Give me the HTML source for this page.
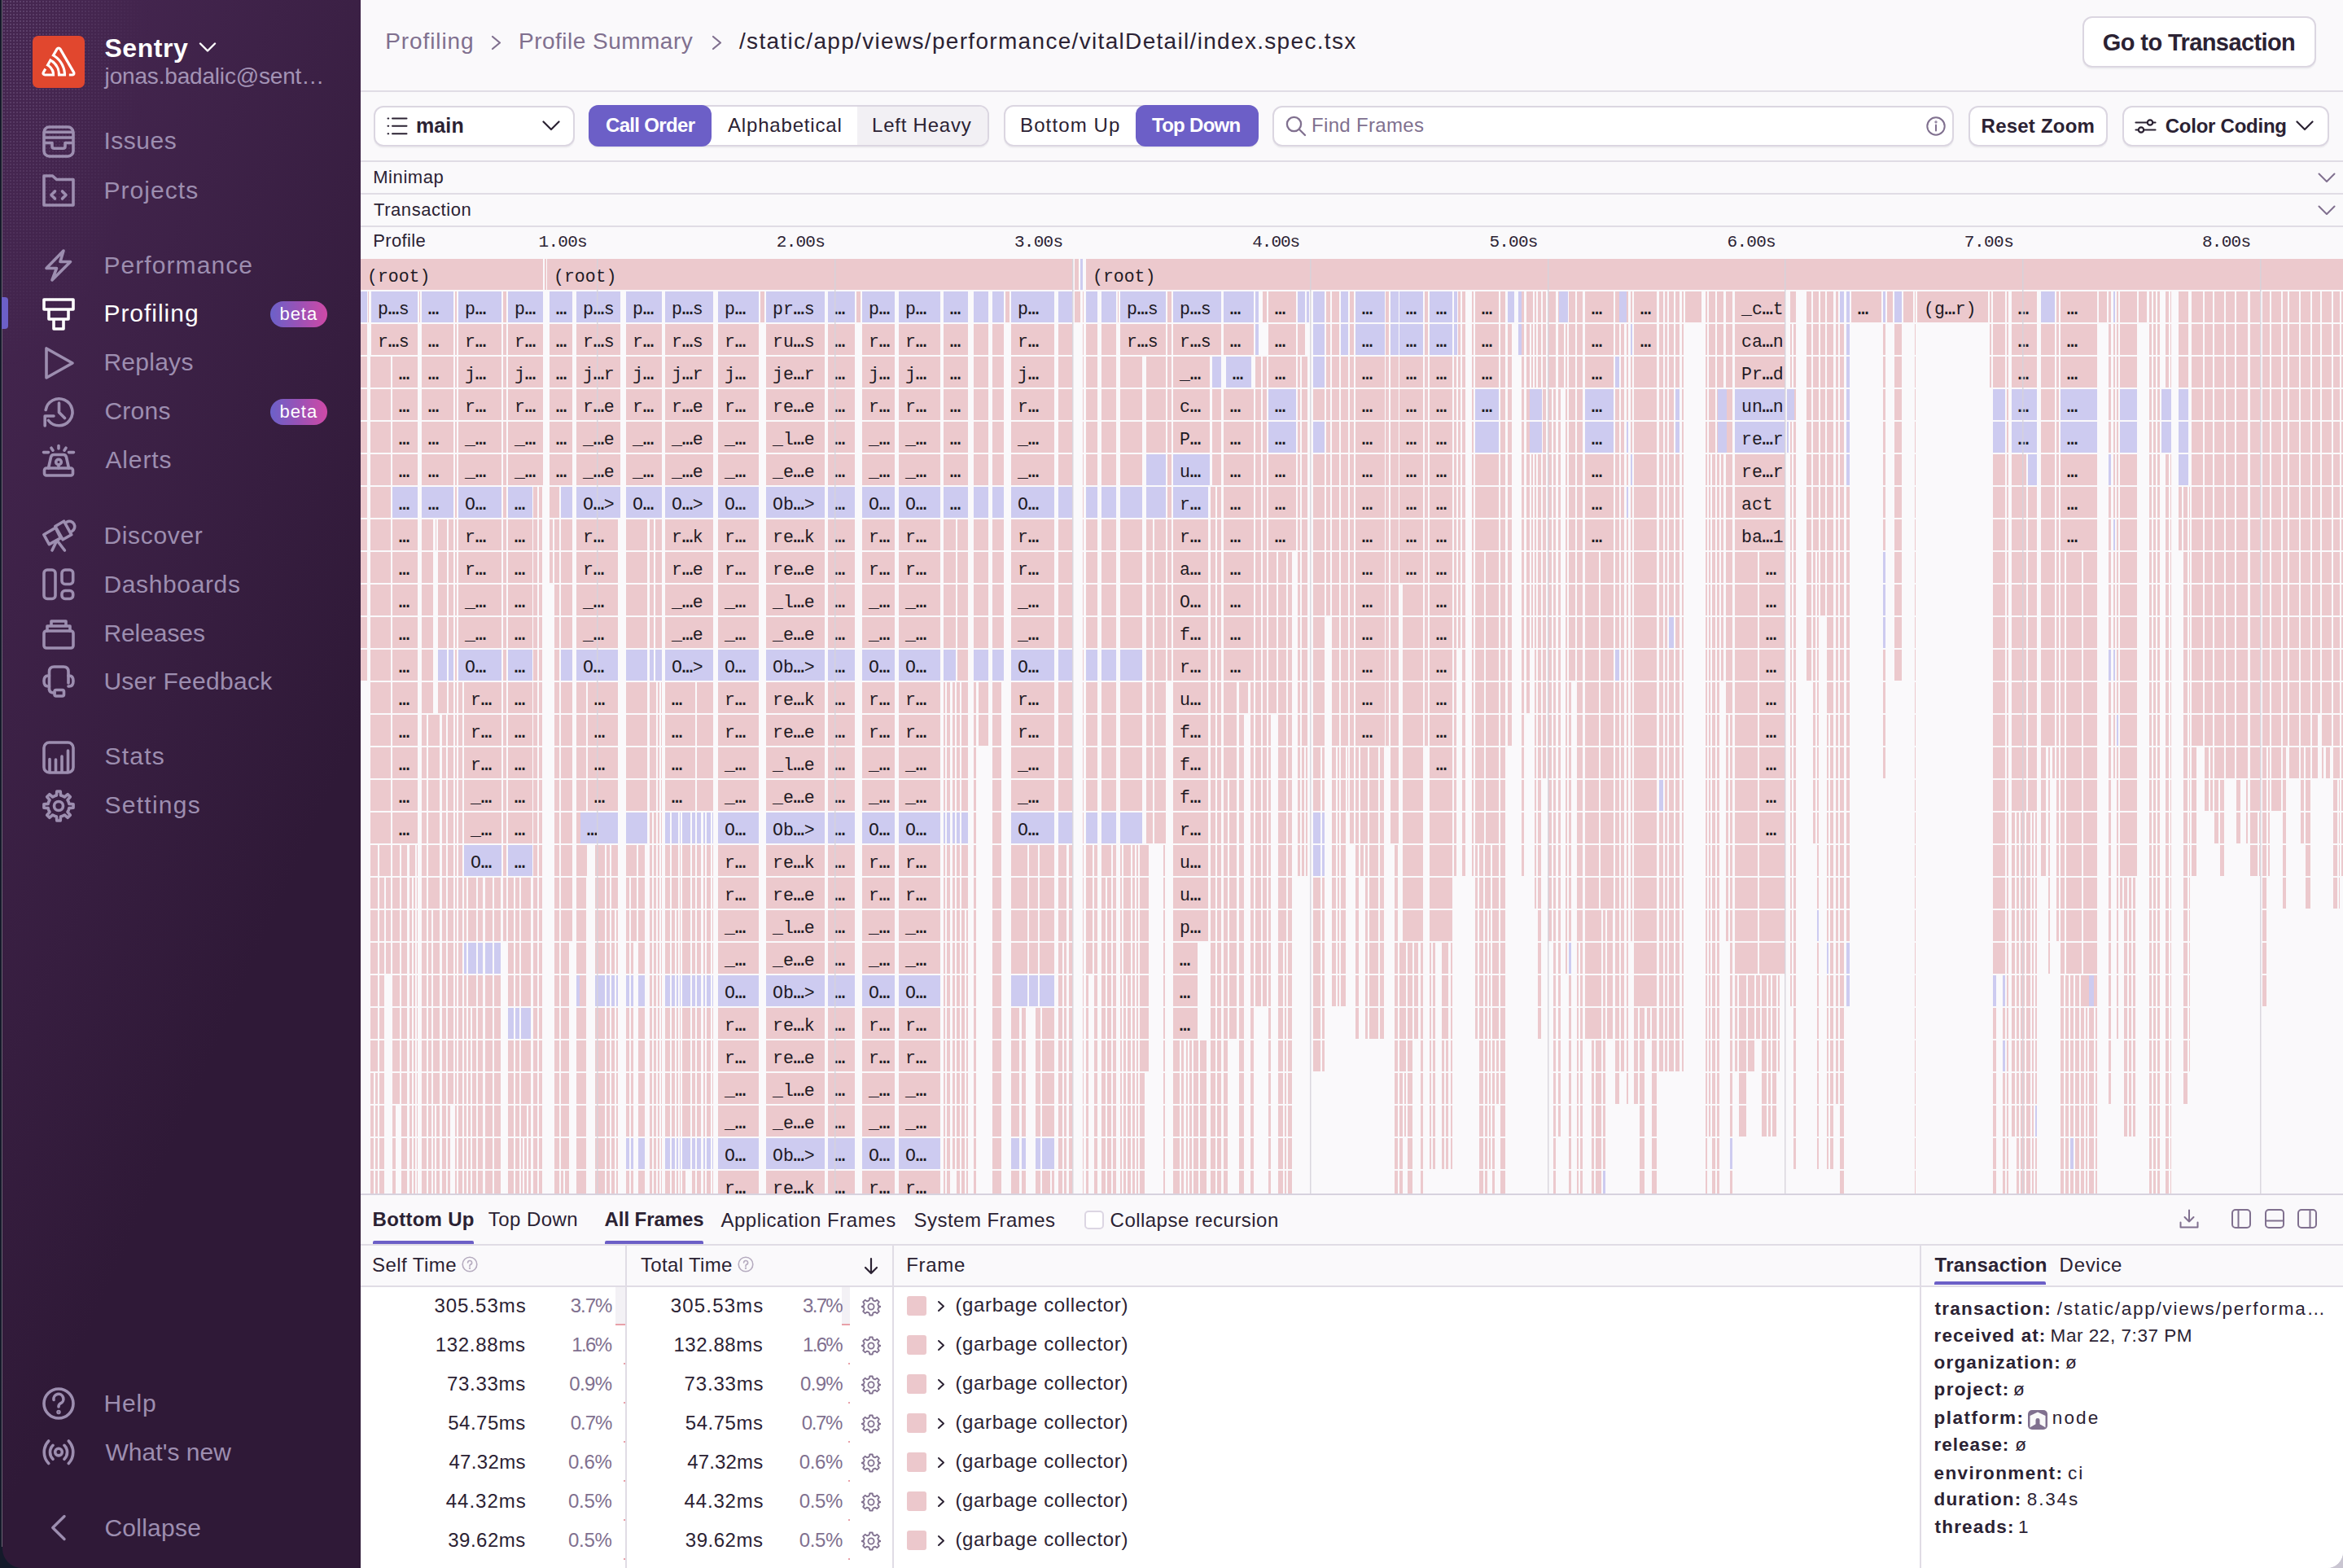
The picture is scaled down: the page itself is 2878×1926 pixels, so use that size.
<!DOCTYPE html><html><head><meta charset="utf-8"><style>
html,body{margin:0;padding:0}
body{width:2878px;height:1926px;overflow:hidden;position:relative;background:#141a2b;font-family:'Liberation Sans', sans-serif}
#sb{position:absolute;left:3px;top:0;width:440px;height:1926px;background:linear-gradient(294.17deg,#2f1937 35.57%,#452650 92.42%);border-bottom-left-radius:24px}
#edge1{position:absolute;left:0;top:0;width:2px;height:1926px;background:#151a2a}
#edge2{position:absolute;left:2px;top:0;width:1px;height:1900px;background:#6b6474}
#dots{position:absolute;left:3px;top:0;width:300px;height:560px;background-image:radial-gradient(circle,rgba(170,150,190,0.5) 0.8px,transparent 1.1px);background-size:4px 4px;-webkit-mask-image:radial-gradient(ellipse 200px 500px at 0 0,rgba(0,0,0,0.55),transparent 90%);mask-image:radial-gradient(ellipse 200px 500px at 0 0,rgba(0,0,0,0.55),transparent 90%)}
#logo{position:absolute;left:40px;top:44px;width:64px;height:64px;background:#e1472e;border-radius:7px}
.beta{position:absolute;left:332px;width:70px;height:32px;border-radius:16px;background:linear-gradient(90deg,#6b61c9 0%,#9a52b6 50%,#cf49a6 100%)}
#mainbg{position:absolute;left:443px;top:0;width:2435px;height:1926px;background:#faf9fb;border-bottom-right-radius:20px}
.tx{position:absolute;white-space:nowrap;line-height:1}
.btn{position:absolute;box-sizing:border-box;border:2px solid #dbd6e1;border-radius:12px;background:#fff;box-shadow:0 2px 1px rgba(43,34,51,0.05)}
.hl{position:absolute;left:443px;width:2435px;height:2px;background:#e0dce5}
.vl{position:absolute;width:2px;background:#e0dce5}
</style></head><body><div id="sb"></div><div id="dots"></div><div id="edge1"></div><div id="edge2"></div>
<div id="logo"><svg width="64" height="64" viewBox="0 0 64 64"><g transform="translate(11.5,13.5) scale(0.82)"><path fill="#fff" d="M29,2.26a4.67,4.67,0,0,0-8,0L14.42,13.53A32.21,32.21,0,0,1,32.17,40.19H27.55A27.68,27.68,0,0,0,12.09,17.47L6,28a15.92,15.92,0,0,1,9.23,12.17H4.62A.76.76,0,0,1,4,39.06l2.94-5a10.74,10.74,0,0,0-3.36-1.9l-2.91,5a4.54,4.54,0,0,0,1.69,6.24A4.66,4.66,0,0,0,4.62,44H19.15a19.4,19.4,0,0,0-8-17.31l2.31-4A23.87,23.87,0,0,1,23.76,44H36.07a35.88,35.88,0,0,0-16.41-31.8l4.67-8a.77.77,0,0,1,1.050-.27c.53.29,20.290,34.77,20.66,35.17a.76.76,0,0,1-.68,1.13H40.6q.09,1.91,0,3.81h4.78A4.59,4.59,0,0,0,50,39.43a4.49,4.49,0,0,0-.62-2.28Z"/></g></svg></div>
<svg style="position:absolute;left:244px;top:51px" width="22" height="14" viewBox="0 0 22 14" fill="none" stroke="#fff" stroke-width="2.4" stroke-linecap="round" stroke-linejoin="round"><path d="M2 2.5L11 11.5L20 2.5"/></svg>
<svg style="position:absolute;left:52px;top:154px;overflow:visible" width="40" height="40" viewBox="0 0 40 40" fill="none" stroke="#9d8eb0" stroke-width="3.6" stroke-linecap="round" stroke-linejoin="round"><rect x="2" y="2" width="36" height="36" rx="6.5"/><path d="M2.5 8.3H37.5M2.5 15H37.5M2.5 21.5H12V25.8Q12 28.3 14.5 28.3H25.5Q28 28.3 28 25.8V21.5H37.5"/></svg>
<svg style="position:absolute;left:52px;top:214px;overflow:visible" width="40" height="40" viewBox="0 0 40 40" fill="none" stroke="#9d8eb0" stroke-width="3.6" stroke-linecap="round" stroke-linejoin="round"><path d="M2 38V2H12.5L17.5 6.5H38V38Z"/><path d="M15.5 21L11 25.5L15.5 30M24.5 21L29 25.5L24.5 30"/></svg>
<svg style="position:absolute;left:52px;top:306px;overflow:visible" width="40" height="40" viewBox="0 0 40 40" fill="none" stroke="#9d8eb0" stroke-width="3.6" stroke-linecap="round" stroke-linejoin="round"><path d="M26 2L5 23.5H17.5L12 38L34.5 15.5H22Z"/></svg>
<svg style="position:absolute;left:52px;top:366px;overflow:visible" width="40" height="40" viewBox="0 0 40 40" fill="none" stroke="#fff" stroke-width="3.6" stroke-linecap="round" stroke-linejoin="round"><path d="M2 2H38V14H2Z M8 14H32V26H8Z M14 26H26V38H14Z"/></svg>
<svg style="position:absolute;left:52px;top:426px;overflow:visible" width="40" height="40" viewBox="0 0 40 40" fill="none" stroke="#9d8eb0" stroke-width="3.6" stroke-linecap="round" stroke-linejoin="round"><path d="M5 2V38L37 20Z"/></svg>
<svg style="position:absolute;left:52px;top:486px;overflow:visible" width="40" height="40" viewBox="0 0 40 40" fill="none" stroke="#9d8eb0" stroke-width="3.6" stroke-linecap="round" stroke-linejoin="round"><path d="M4.2 17.5A16.5 16.5 0 1 1 7.5 30.5"/><path d="M20.5 9V20.5L27.5 27.5"/><path d="M14 25H3.2V37"/></svg>
<svg style="position:absolute;left:52px;top:546px;overflow:visible" width="40" height="40" viewBox="0 0 40 40" fill="none" stroke="#9d8eb0" stroke-width="3.6" stroke-linecap="round" stroke-linejoin="round"><rect x="2.5" y="29" width="35" height="9" rx="2.5"/><path d="M7.5 29L10.5 15.5Q11.2 12.5 14.2 12.5H25.8Q28.8 12.5 29.5 15.5L32.5 29"/><circle cx="20" cy="21.5" r="3.3"/><path d="M20 25V29M20 1.5V5M11 4.2L13 7.2M29 4.2L27 7.2M1.5 9.6H7.5M32.5 9.6H38.5"/></svg>
<svg style="position:absolute;left:52px;top:638px;overflow:visible" width="40" height="40" viewBox="0 0 40 40" fill="none" stroke="#9d8eb0" stroke-width="3.6" stroke-linecap="round" stroke-linejoin="round"><path d="M1.8 18.7L16.2 10.2L22.5 22.9L8.4 30.6Z"/><path d="M15.8 8.5L26.5 2.2L35.8 18.8L25.2 24.8Z"/><path d="M30 3.2A6.5 6.5 0 0 1 36.5 14.5"/><path d="M17.8 26L12 38M18.2 26L27.4 38"/></svg>
<svg style="position:absolute;left:52px;top:698px;overflow:visible" width="40" height="40" viewBox="0 0 40 40" fill="none" stroke="#9d8eb0" stroke-width="3.6" stroke-linecap="round" stroke-linejoin="round"><rect x="2" y="2" width="14" height="35.5" rx="4"/><rect x="24" y="2" width="13.7" height="17.5" rx="4"/><rect x="24" y="27.5" width="13.7" height="10" rx="4"/></svg>
<svg style="position:absolute;left:52px;top:758px;overflow:visible" width="40" height="40" viewBox="0 0 40 40" fill="none" stroke="#9d8eb0" stroke-width="3.6" stroke-linecap="round" stroke-linejoin="round"><rect x="2" y="17" width="36" height="21" rx="3"/><path d="M6 17V11H34V17M11 11V5H29V11"/></svg>
<svg style="position:absolute;left:52px;top:817px;overflow:visible" width="40" height="40" viewBox="0 0 40 40" fill="none" stroke="#9d8eb0" stroke-width="3.6" stroke-linecap="round" stroke-linejoin="round"><path d="M8.5 30V8Q8.5 2 14.5 2H26Q32 2 32 8V22"/><path d="M8.5 13H7Q2 13 2 19.5Q2 26 7 26H8.5M32 13H33Q38 13 38 19.5Q38 26 33 26H32"/><rect x="15" y="30.5" width="11.5" height="7.5" rx="2"/><path d="M8.5 30Q9 34 15 34.2"/></svg>
<svg style="position:absolute;left:52px;top:910px;overflow:visible" width="40" height="40" viewBox="0 0 40 40" fill="none" stroke="#9d8eb0" stroke-width="3.6" stroke-linecap="round" stroke-linejoin="round"><rect x="2" y="2" width="36" height="37" rx="6.5"/><path d="M9 38V22.5M16.5 38V23M24 38V19M31.5 38V12"/></svg>
<svg style="position:absolute;left:52px;top:970px;overflow:visible" width="40" height="40" viewBox="0 0 40 40" fill="none" stroke="#9d8eb0" stroke-width="3.6" stroke-linecap="round" stroke-linejoin="round"><path d="M32.94 17.38L38.07 17.82L38.07 22.18L32.94 22.62L32.20 25.05L31.00 27.29L34.32 31.24L31.24 34.32L27.29 31.00L25.05 32.20L22.62 32.94L22.18 38.07L17.82 38.07L17.38 32.94L14.95 32.20L12.71 31.00L8.76 34.32L5.68 31.24L9.00 27.29L7.80 25.05L7.06 22.62L1.93 22.18L1.93 17.82L7.06 17.38L7.80 14.95L9.00 12.71L5.68 8.76L8.76 5.68L12.71 9.00L14.95 7.80L17.38 7.06L17.82 1.93L22.18 1.93L22.62 7.06L25.05 7.80L27.29 9.00L31.24 5.68L34.32 8.76L31.00 12.71L32.20 14.95Z"/><circle cx="20" cy="20" r="5.5"/></svg>
<svg style="position:absolute;left:52px;top:1704px;overflow:visible" width="40" height="40" viewBox="0 0 40 40" fill="none" stroke="#9d8eb0" stroke-width="3.6" stroke-linecap="round" stroke-linejoin="round"><circle cx="20" cy="20" r="18"/><path d="M14 15.5A6 6 0 1 1 22 20Q20 21 20 24"/><circle cx="20" cy="30.5" r="0.9" fill="#9d8eb0"/></svg>
<svg style="position:absolute;left:52px;top:1764px;overflow:visible" width="40" height="40" viewBox="0 0 40 40" fill="none" stroke="#9d8eb0" stroke-width="3.6" stroke-linecap="round" stroke-linejoin="round"><circle cx="20" cy="19.6" r="4.3"/><path d="M7.7 6A20 20 0 0 0 7.7 33.5M32.3 6A20 20 0 0 1 32.3 33.5M13 11.3A12 12 0 0 0 13 28.3M27 11.3A12 12 0 0 1 27 28.3"/></svg>
<svg style="position:absolute;left:52px;top:1857px;overflow:visible" width="40" height="40" viewBox="0 0 40 40" fill="none" stroke="#9d8eb0" stroke-width="3.4" stroke-linecap="round" stroke-linejoin="round"><path d="M27 5.5L12.8 19.5L27 33.5"/></svg>
<div style="position:absolute;left:2px;top:365px;width:8px;height:39px;background:#6c5fc7;border-radius:0 4px 4px 0"></div>
<div class="beta" style="top:369.8px"></div>
<div class="beta" style="top:489.8px"></div>
<div style="position:absolute;left:2848px;top:1896px;width:30px;height:30px;background:#c9c5d1"></div><div id="mainbg"></div>
<svg style="position:absolute;left:603px;top:43px" width="13" height="19" viewBox="0 0 13 19" fill="none" stroke="#80708f" stroke-width="2.2" stroke-linecap="round" stroke-linejoin="round"><path d="M2 2L11 9.5L2 17"/></svg>
<svg style="position:absolute;left:874px;top:43px" width="13" height="19" viewBox="0 0 13 19" fill="none" stroke="#80708f" stroke-width="2.2" stroke-linecap="round" stroke-linejoin="round"><path d="M2 2L11 9.5L2 17"/></svg>
<div class="btn" style="left:2558px;top:20px;width:287px;height:63px"></div>
<div class="hl" style="top:111px"></div>
<div class="btn" style="left:459px;top:130px;width:247px;height:50px"></div>
<svg style="position:absolute;left:475px;top:143px" width="27" height="24" viewBox="0 0 27 24" fill="none" stroke="#2b2233" stroke-width="2" stroke-linecap="round"><path d="M7 2.5H24.5M7 11.8H24.5M7 21.3H24.5"/><path d="M1.5 2.5H2.2M1.5 11.8H2.2M1.5 21.3H2.2"/></svg>
<svg style="position:absolute;left:666px;top:148px" width="22" height="14" viewBox="0 0 22 14" fill="none" stroke="#2b2233" stroke-width="2.2" stroke-linecap="round" stroke-linejoin="round"><path d="M1.5 1.5L11 11L20.5 1.5"/></svg>
<div class="btn" style="left:723px;top:129px;width:492px;height:51px"></div>
<div style="position:absolute;left:1053px;top:131px;width:160px;height:47px;background:#f2f0f4;border-radius:0 10px 10px 0"></div>
<div style="position:absolute;left:723px;top:129px;width:151px;height:51px;background:#6c5fc7;border-radius:12px"></div>
<div class="btn" style="left:1233px;top:129px;width:313px;height:51px"></div>
<div style="position:absolute;left:1395px;top:129px;width:151px;height:51px;background:#6c5fc7;border-radius:12px"></div>
<div class="btn" style="left:1563px;top:130px;width:837px;height:50px"></div>
<svg style="position:absolute;left:1579px;top:142px" width="26" height="26" viewBox="0 0 26 26" fill="none" stroke="#80708f" stroke-width="2.3" stroke-linecap="round"><circle cx="10.5" cy="10.5" r="8.6"/><path d="M17 17L24 24"/></svg>
<svg style="position:absolute;left:2366px;top:143px" width="24" height="24" viewBox="0 0 24 24" fill="none" stroke="#80708f" stroke-width="2"><circle cx="12" cy="12" r="10.7"/><path d="M12 10.5V17.5" stroke-linecap="round"/><circle cx="12" cy="6.8" r="0.5" fill="#80708f" stroke-width="2.2"/></svg>
<div class="btn" style="left:2418px;top:130px;width:171px;height:50px"></div>
<div class="btn" style="left:2607px;top:130px;width:254px;height:50px"></div>
<svg style="position:absolute;left:2622px;top:143px" width="27" height="24" viewBox="0 0 27 24" fill="none" stroke="#2b2233" stroke-width="2.2" stroke-linecap="round"><path d="M1.5 7.5H15.5M22.5 7.5H25.5M1.5 16.5H4.5M11.5 16.5H25.5"/><circle cx="19" cy="7.5" r="3.2"/><circle cx="8" cy="16.5" r="3.2"/></svg>
<svg style="position:absolute;left:2820px;top:148px" width="22" height="14" viewBox="0 0 22 14" fill="none" stroke="#2b2233" stroke-width="2.2" stroke-linecap="round" stroke-linejoin="round"><path d="M1.5 1.5L11 11L20.5 1.5"/></svg>
<div class="hl" style="top:197px"></div>
<div class="hl" style="top:237px"></div>
<div class="hl" style="top:277px;height:1.5px"></div>
<svg style="position:absolute;left:2847px;top:212.0px" width="22" height="13" viewBox="0 0 22 13" fill="none" stroke="#80708f" stroke-width="2" stroke-linecap="round" stroke-linejoin="round"><path d="M1.5 1.5L11 11L20.5 1.5"/></svg>
<svg style="position:absolute;left:2847px;top:251.5px" width="22" height="13" viewBox="0 0 22 13" fill="none" stroke="#80708f" stroke-width="2" stroke-linecap="round" stroke-linejoin="round"><path d="M1.5 1.5L11 11L20.5 1.5"/></svg>
<div id="flame" style="position:absolute;left:443px;top:318px;width:2435px;height:1148px;overflow:hidden"><svg width="2435" height="1148" viewBox="443 318 2435 1148" style="position:absolute;left:0;top:0;display:block">
<path fill="#ecc9cd" d="M443 318h224v38h-224zM669 318h2v38h-2zM672 318h646v38h-646zM1320 318h5v38h-5zM1334 318h1544v38h-1544zM443 398h8v38h-8zM443 438h8v38h-8zM443 478h8v38h-8zM443 518h8v38h-8zM443 558h8v38h-8zM443 598h8v38h-8zM443 638h8v38h-8zM443 678h8v38h-8zM443 718h8v38h-8zM443 758h8v38h-8zM443 798h8v38h-8zM452 358h1v38h-1zM456 398h57v38h-57zM455 438h25v38h-25zM455 478h25v38h-25zM455 518h25v38h-25zM455 558h25v38h-25zM455 598h25v38h-25zM455 638h25v38h-25zM455 678h25v38h-25zM455 718h25v38h-25zM455 758h25v38h-25zM455 798h25v38h-25zM455 838h25v38h-25zM455 878h25v38h-25zM455 918h25v38h-25zM455 958h25v38h-25zM455 998h25v38h-25zM455 1038h9v38h-9zM466 1038h14v38h-14zM455 1078h9v38h-9zM466 1078h6v38h-6zM474 1078h6v38h-6zM455 1118h9v38h-9zM466 1118h6v38h-6zM474 1118h6v38h-6zM455 1158h9v38h-9zM466 1158h6v38h-6zM474 1158h6v38h-6zM455 1198h9v38h-9zM466 1198h6v38h-6zM455 1238h9v38h-9zM466 1238h6v38h-6zM455 1278h9v38h-9zM466 1278h6v38h-6zM455 1318h4v38h-4zM461 1318h3v38h-3zM466 1318h6v38h-6zM455 1358h4v38h-4zM461 1358h3v38h-3zM466 1358h6v38h-6zM455 1398h4v38h-4zM461 1398h3v38h-3zM466 1398h6v38h-6zM455 1438h4v28h-4zM461 1438h3v28h-3zM466 1438h6v28h-6zM482 438h31v38h-31zM482 478h31v38h-31zM482 518h31v38h-31zM482 558h31v38h-31zM482 638h31v38h-31zM482 678h31v38h-31zM482 718h31v38h-31zM482 758h31v38h-31zM482 798h31v38h-31zM482 838h31v38h-31zM482 878h31v38h-31zM482 918h31v38h-31zM482 958h31v38h-31zM482 998h31v38h-31zM482 1038h9v38h-9zM493 1038h7v38h-7zM503 1038h7v38h-7zM512 1038h1v38h-1zM482 1078h9v38h-9zM493 1078h7v38h-7zM503 1078h3v38h-3zM508 1078h2v38h-2zM512 1078h1v38h-1zM482 1118h9v38h-9zM493 1118h7v38h-7zM503 1118h3v38h-3zM508 1118h2v38h-2zM512 1118h1v38h-1zM482 1158h9v38h-9zM493 1158h7v38h-7zM503 1158h3v38h-3zM508 1158h2v38h-2zM512 1158h1v38h-1zM482 1198h9v38h-9zM493 1198h7v38h-7zM503 1198h3v38h-3zM508 1198h2v38h-2zM512 1198h1v38h-1zM482 1238h9v38h-9zM493 1238h7v38h-7zM503 1238h3v38h-3zM508 1238h2v38h-2zM512 1238h1v38h-1zM482 1278h9v38h-9zM493 1278h7v38h-7zM503 1278h3v38h-3zM508 1278h2v38h-2zM512 1278h1v38h-1zM482 1318h9v38h-9zM493 1318h7v38h-7zM503 1318h3v38h-3zM508 1318h2v38h-2zM512 1318h1v38h-1zM482 1358h4v38h-4zM493 1358h7v38h-7zM503 1358h3v38h-3zM508 1358h2v38h-2zM512 1358h1v38h-1zM482 1398h4v38h-4zM493 1398h7v38h-7zM503 1398h3v38h-3zM508 1398h2v38h-2zM512 1398h1v38h-1zM482 1438h4v28h-4zM493 1438h7v28h-7zM503 1438h3v28h-3zM508 1438h2v28h-2zM512 1438h1v28h-1zM515 358h1v38h-1zM518 398h39v38h-39zM518 438h39v38h-39zM518 478h39v38h-39zM518 518h39v38h-39zM518 558h39v38h-39zM518 638h14v38h-14zM518 678h14v38h-14zM518 718h14v38h-14zM518 758h14v38h-14zM518 798h14v38h-14zM518 838h14v38h-14zM535 638h1v38h-1zM538 638h11v38h-11zM538 678h11v38h-11zM538 718h11v38h-11zM538 758h11v38h-11zM538 838h11v38h-11zM551 638h6v38h-6zM551 678h6v38h-6zM551 718h6v38h-6zM551 758h6v38h-6zM551 838h6v38h-6zM518 878h6v38h-6zM526 878h14v38h-14zM543 878h5v38h-5zM550 878h7v38h-7zM518 918h6v38h-6zM526 918h14v38h-14zM543 918h5v38h-5zM550 918h7v38h-7zM518 958h6v38h-6zM526 958h14v38h-14zM543 958h5v38h-5zM550 958h7v38h-7zM518 998h6v38h-6zM526 998h14v38h-14zM543 998h5v38h-5zM550 998h7v38h-7zM518 1038h6v38h-6zM526 1038h14v38h-14zM543 1038h5v38h-5zM550 1038h7v38h-7zM518 1078h6v38h-6zM526 1078h14v38h-14zM543 1078h5v38h-5zM550 1078h7v38h-7zM518 1118h6v38h-6zM526 1118h4v38h-4zM532 1118h8v38h-8zM543 1118h5v38h-5zM550 1118h7v38h-7zM518 1158h6v38h-6zM526 1158h4v38h-4zM532 1158h8v38h-8zM543 1158h5v38h-5zM550 1158h7v38h-7zM518 1198h6v38h-6zM526 1198h4v38h-4zM532 1198h8v38h-8zM543 1198h5v38h-5zM550 1198h7v38h-7zM518 1238h6v38h-6zM526 1238h4v38h-4zM532 1238h8v38h-8zM543 1238h5v38h-5zM550 1238h7v38h-7zM518 1278h6v38h-6zM526 1278h4v38h-4zM532 1278h8v38h-8zM543 1278h5v38h-5zM550 1278h7v38h-7zM518 1318h6v38h-6zM526 1318h4v38h-4zM532 1318h8v38h-8zM543 1318h5v38h-5zM550 1318h7v38h-7zM518 1358h6v38h-6zM526 1358h4v38h-4zM532 1358h2v38h-2zM536 1358h4v38h-4zM543 1358h5v38h-5zM550 1358h3v38h-3zM518 1398h6v38h-6zM526 1398h4v38h-4zM532 1398h2v38h-2zM536 1398h4v38h-4zM543 1398h5v38h-5zM550 1398h3v38h-3zM518 1438h6v28h-6zM526 1438h4v28h-4zM532 1438h2v28h-2zM536 1438h4v28h-4zM543 1438h5v28h-5zM550 1438h3v28h-3zM559 358h2v38h-2zM559 398h2v38h-2zM559 438h2v38h-2zM559 478h2v38h-2zM559 518h2v38h-2zM559 558h2v38h-2zM559 598h2v38h-2zM559 638h2v38h-2zM559 678h2v38h-2zM559 718h2v38h-2zM559 758h2v38h-2zM559 798h2v38h-2zM559 838h2v38h-2zM559 878h2v38h-2zM559 918h2v38h-2zM559 958h2v38h-2zM559 998h2v38h-2zM559 1038h2v38h-2zM559 1078h2v38h-2zM559 1118h2v38h-2zM559 1158h2v38h-2zM559 1198h2v38h-2zM559 1238h2v38h-2zM559 1278h2v38h-2zM559 1318h2v38h-2zM559 1358h2v38h-2zM559 1398h2v38h-2zM559 1438h2v28h-2zM563 398h53v38h-53zM563 438h53v38h-53zM563 478h53v38h-53zM563 518h53v38h-53zM563 558h53v38h-53zM563 638h53v38h-53zM563 678h53v38h-53zM563 718h53v38h-53zM563 758h53v38h-53zM563 838h5v38h-5zM563 878h5v38h-5zM563 918h5v38h-5zM563 958h5v38h-5zM563 998h5v38h-5zM563 1038h5v38h-5zM563 1078h5v38h-5zM563 1118h5v38h-5zM563 1158h5v38h-5zM563 1198h5v38h-5zM563 1238h5v38h-5zM563 1278h5v38h-5zM563 1318h5v38h-5zM563 1358h5v38h-5zM563 1398h5v38h-5zM563 1438h5v28h-5zM570 838h46v38h-46zM570 878h46v38h-46zM570 918h46v38h-46zM570 958h46v38h-46zM570 998h46v38h-46zM570 1078h3v38h-3zM575 1078h10v38h-10zM587 1078h6v38h-6zM596 1078h9v38h-9zM607 1078h8v38h-8zM570 1118h3v38h-3zM575 1118h10v38h-10zM587 1118h6v38h-6zM596 1118h9v38h-9zM607 1118h8v38h-8zM570 1198h3v38h-3zM575 1198h10v38h-10zM587 1198h6v38h-6zM596 1198h9v38h-9zM607 1198h8v38h-8zM570 1238h3v38h-3zM575 1238h3v38h-3zM580 1238h5v38h-5zM587 1238h6v38h-6zM596 1238h9v38h-9zM607 1238h8v38h-8zM570 1278h3v38h-3zM575 1278h3v38h-3zM580 1278h5v38h-5zM587 1278h6v38h-6zM596 1278h9v38h-9zM607 1278h8v38h-8zM570 1318h3v38h-3zM575 1318h3v38h-3zM580 1318h5v38h-5zM587 1318h6v38h-6zM596 1318h9v38h-9zM607 1318h8v38h-8zM570 1358h3v38h-3zM575 1358h3v38h-3zM580 1358h5v38h-5zM587 1358h6v38h-6zM596 1358h9v38h-9zM607 1358h8v38h-8zM570 1398h3v38h-3zM575 1398h3v38h-3zM580 1398h5v38h-5zM587 1398h6v38h-6zM596 1398h9v38h-9zM607 1398h8v38h-8zM570 1438h3v28h-3zM575 1438h3v28h-3zM580 1438h5v28h-5zM587 1438h6v28h-6zM596 1438h9v28h-9zM607 1438h8v28h-8zM618 358h4v38h-4zM618 398h4v38h-4zM618 438h4v38h-4zM618 478h4v38h-4zM618 518h4v38h-4zM618 558h4v38h-4zM618 598h4v38h-4zM618 638h4v38h-4zM618 678h4v38h-4zM618 718h4v38h-4zM618 758h4v38h-4zM618 798h4v38h-4zM618 838h4v38h-4zM618 878h4v38h-4zM618 918h4v38h-4zM618 958h4v38h-4zM618 998h4v38h-4zM618 1038h4v38h-4zM618 1078h4v38h-4zM618 1118h4v38h-4zM624 398h43v38h-43zM624 438h43v38h-43zM624 478h43v38h-43zM624 518h43v38h-43zM624 558h43v38h-43zM624 638h30v38h-30zM624 678h30v38h-30zM624 718h30v38h-30zM624 758h30v38h-30zM624 838h30v38h-30zM624 878h30v38h-30zM624 918h30v38h-30zM624 958h30v38h-30zM624 998h30v38h-30zM655 598h5v38h-5zM662 598h4v38h-4zM655 638h5v38h-5zM662 638h4v38h-4zM655 678h5v38h-5zM662 678h4v38h-4zM655 718h5v38h-5zM662 718h4v38h-4zM655 758h5v38h-5zM662 758h4v38h-4zM655 798h5v38h-5zM662 798h4v38h-4zM655 838h5v38h-5zM662 838h4v38h-4zM655 878h5v38h-5zM662 878h4v38h-4zM655 918h5v38h-5zM662 918h4v38h-4zM655 958h5v38h-5zM662 958h4v38h-4zM655 998h5v38h-5zM662 998h4v38h-4zM655 1038h5v38h-5zM662 1038h4v38h-4zM655 1078h5v38h-5zM662 1078h4v38h-4zM655 1118h5v38h-5zM662 1118h4v38h-4zM655 1158h5v38h-5zM662 1158h4v38h-4zM655 1198h5v38h-5zM662 1198h4v38h-4zM655 1238h5v38h-5zM662 1238h4v38h-4zM655 1278h5v38h-5zM662 1278h4v38h-4zM655 1318h5v38h-5zM662 1318h4v38h-4zM655 1358h5v38h-5zM662 1358h4v38h-4zM655 1398h5v38h-5zM662 1398h4v38h-4zM655 1438h5v28h-5zM662 1438h4v28h-4zM624 1078h7v38h-7zM633 1078h5v38h-5zM640 1078h12v38h-12zM624 1118h7v38h-7zM633 1118h5v38h-5zM640 1118h12v38h-12zM624 1158h7v38h-7zM633 1158h5v38h-5zM640 1158h12v38h-12zM624 1198h7v38h-7zM633 1198h5v38h-5zM640 1198h12v38h-12zM624 1278h7v38h-7zM633 1278h5v38h-5zM640 1278h12v38h-12zM624 1318h7v38h-7zM633 1318h5v38h-5zM640 1318h12v38h-12zM624 1358h7v38h-7zM633 1358h5v38h-5zM640 1358h7v38h-7zM649 1358h3v38h-3zM624 1398h7v38h-7zM633 1398h5v38h-5zM640 1398h2v38h-2zM644 1398h3v38h-3zM649 1398h3v38h-3zM624 1438h7v28h-7zM633 1438h5v28h-5zM640 1438h2v28h-2zM644 1438h3v28h-3zM649 1438h3v28h-3zM675 398h28v38h-28zM675 438h28v38h-28zM675 478h28v38h-28zM675 518h28v38h-28zM675 558h28v38h-28zM675 598h12v38h-12zM675 638h4v38h-4zM681 638h6v38h-6zM675 678h4v38h-4zM681 678h6v38h-6zM681 718h6v38h-6zM681 758h6v38h-6zM681 798h6v38h-6zM681 838h6v38h-6zM681 878h6v38h-6zM681 918h6v38h-6zM681 958h6v38h-6zM681 998h6v38h-6zM681 1038h6v38h-6zM681 1078h6v38h-6zM681 1118h6v38h-6zM681 1158h6v38h-6zM681 1198h6v38h-6zM681 1238h6v38h-6zM681 1278h6v38h-6zM681 1318h6v38h-6zM681 1358h6v38h-6zM681 1398h6v38h-6zM681 1438h6v28h-6zM689 638h14v38h-14zM689 678h14v38h-14zM689 718h14v38h-14zM689 758h14v38h-14zM689 838h14v38h-14zM689 878h14v38h-14zM689 918h14v38h-14zM689 958h14v38h-14zM689 998h14v38h-14zM689 1038h14v38h-14zM689 1078h14v38h-14zM689 1118h14v38h-14zM689 1158h10v38h-10zM689 1198h10v38h-10zM689 1238h10v38h-10zM689 1278h10v38h-10zM689 1318h10v38h-10zM689 1358h10v38h-10zM689 1398h10v38h-10zM689 1438h3v28h-3zM694 1438h5v28h-5zM708 398h54v38h-54zM708 438h54v38h-54zM708 478h54v38h-54zM708 518h54v38h-54zM708 558h54v38h-54zM708 638h51v38h-51zM708 678h51v38h-51zM708 718h51v38h-51zM708 758h51v38h-51zM708 838h12v38h-12zM708 878h12v38h-12zM708 918h12v38h-12zM708 958h12v38h-12zM708 998h12v38h-12zM708 1038h12v38h-12zM708 1078h12v38h-12zM708 1118h12v38h-12zM708 1158h12v38h-12zM708 1198h12v38h-12zM708 1238h12v38h-12zM708 1278h12v38h-12zM708 1318h12v38h-12zM708 1358h12v38h-12zM708 1398h12v38h-12zM708 1438h12v28h-12zM722 838h37v38h-37zM722 878h37v38h-37zM722 918h37v38h-37zM722 958h37v38h-37zM708 1038h13v38h-13zM731 1038h12v38h-12zM745 1038h4v38h-4zM751 1038h8v38h-8zM708 1078h4v38h-4zM731 1078h12v38h-12zM745 1078h4v38h-4zM751 1078h8v38h-8zM708 1118h4v38h-4zM731 1118h12v38h-12zM745 1118h4v38h-4zM751 1118h4v38h-4zM757 1118h2v38h-2zM708 1158h4v38h-4zM731 1158h12v38h-12zM745 1158h4v38h-4zM751 1158h4v38h-4zM757 1158h2v38h-2zM708 1238h4v38h-4zM731 1238h12v38h-12zM745 1238h4v38h-4zM751 1238h4v38h-4zM757 1238h2v38h-2zM708 1278h4v38h-4zM731 1278h12v38h-12zM745 1278h4v38h-4zM751 1278h4v38h-4zM757 1278h2v38h-2zM708 1318h4v38h-4zM731 1318h12v38h-12zM745 1318h4v38h-4zM751 1318h4v38h-4zM757 1318h2v38h-2zM708 1358h4v38h-4zM731 1358h12v38h-12zM745 1358h4v38h-4zM751 1358h4v38h-4zM757 1358h2v38h-2zM708 1398h4v38h-4zM731 1398h12v38h-12zM745 1398h4v38h-4zM751 1398h4v38h-4zM757 1398h2v38h-2zM708 1438h4v28h-4zM731 1438h12v28h-12zM745 1438h4v28h-4zM751 1438h4v28h-4zM757 1438h2v28h-2zM769 398h44v38h-44zM769 438h44v38h-44zM769 478h44v38h-44zM769 518h44v38h-44zM769 558h44v38h-44zM769 638h26v38h-26zM769 678h26v38h-26zM769 718h26v38h-26zM769 758h26v38h-26zM769 838h26v38h-26zM769 878h26v38h-26zM769 918h26v38h-26zM769 958h26v38h-26zM798 638h5v38h-5zM798 678h5v38h-5zM798 718h5v38h-5zM798 758h5v38h-5zM805 638h8v38h-8zM805 678h8v38h-8zM805 718h8v38h-8zM805 758h8v38h-8zM798 838h8v38h-8zM808 838h2v38h-2zM812 838h1v38h-1zM798 878h8v38h-8zM808 878h2v38h-2zM812 878h1v38h-1zM798 918h8v38h-8zM808 918h2v38h-2zM812 918h1v38h-1zM798 958h8v38h-8zM808 958h2v38h-2zM812 958h1v38h-1zM798 998h3v38h-3zM803 998h3v38h-3zM808 998h2v38h-2zM812 998h1v38h-1zM798 1038h3v38h-3zM803 1038h3v38h-3zM808 1038h2v38h-2zM812 1038h1v38h-1zM798 1078h3v38h-3zM803 1078h3v38h-3zM808 1078h2v38h-2zM812 1078h1v38h-1zM798 1118h3v38h-3zM803 1118h3v38h-3zM808 1118h2v38h-2zM812 1118h1v38h-1zM798 1158h3v38h-3zM803 1158h3v38h-3zM808 1158h2v38h-2zM812 1158h1v38h-1zM798 1198h3v38h-3zM803 1198h3v38h-3zM808 1198h2v38h-2zM812 1198h1v38h-1zM798 1238h3v38h-3zM803 1238h3v38h-3zM808 1238h2v38h-2zM812 1238h1v38h-1zM798 1278h3v38h-3zM803 1278h3v38h-3zM808 1278h2v38h-2zM812 1278h1v38h-1zM798 1318h3v38h-3zM803 1318h3v38h-3zM808 1318h2v38h-2zM812 1318h1v38h-1zM798 1358h3v38h-3zM803 1358h3v38h-3zM808 1358h2v38h-2zM812 1358h1v38h-1zM798 1398h3v38h-3zM803 1398h3v38h-3zM808 1398h2v38h-2zM812 1398h1v38h-1zM798 1438h3v28h-3zM803 1438h3v28h-3zM808 1438h2v28h-2zM812 1438h1v28h-1zM769 1038h13v38h-13zM784 1038h8v38h-8zM769 1078h4v38h-4zM775 1078h7v38h-7zM784 1078h8v38h-8zM769 1118h4v38h-4zM775 1118h7v38h-7zM784 1118h8v38h-8zM769 1158h4v38h-4zM775 1158h3v38h-3zM784 1158h8v38h-8zM769 1238h4v38h-4zM775 1238h3v38h-3zM784 1238h8v38h-8zM769 1278h4v38h-4zM775 1278h3v38h-3zM784 1278h8v38h-8zM769 1318h4v38h-4zM775 1318h3v38h-3zM784 1318h8v38h-8zM769 1358h4v38h-4zM775 1358h3v38h-3zM784 1358h8v38h-8zM769 1438h4v28h-4zM775 1438h3v28h-3zM784 1438h8v28h-8zM817 398h59v38h-59zM817 438h59v38h-59zM817 478h59v38h-59zM817 518h59v38h-59zM817 558h59v38h-59zM817 638h59v38h-59zM817 678h59v38h-59zM817 718h59v38h-59zM817 758h59v38h-59zM817 838h37v38h-37zM817 878h37v38h-37zM817 918h37v38h-37zM817 958h37v38h-37zM856 838h20v38h-20zM856 878h20v38h-20zM856 918h20v38h-20zM856 958h20v38h-20zM817 1038h6v38h-6zM825 1038h8v38h-8zM835 1038h1v38h-1zM817 1078h6v38h-6zM825 1078h8v38h-8zM835 1078h1v38h-1zM817 1118h6v38h-6zM825 1118h4v38h-4zM831 1118h2v38h-2zM835 1118h1v38h-1zM817 1158h6v38h-6zM825 1158h4v38h-4zM831 1158h2v38h-2zM835 1158h1v38h-1zM817 1238h6v38h-6zM825 1238h4v38h-4zM831 1238h2v38h-2zM835 1238h1v38h-1zM817 1278h6v38h-6zM825 1278h4v38h-4zM831 1278h2v38h-2zM835 1278h1v38h-1zM817 1318h6v38h-6zM825 1318h4v38h-4zM831 1318h2v38h-2zM835 1318h1v38h-1zM817 1358h6v38h-6zM825 1358h4v38h-4zM831 1358h2v38h-2zM835 1358h1v38h-1zM817 1438h6v28h-6zM825 1438h4v28h-4zM831 1438h2v28h-2zM835 1438h1v28h-1zM838 1038h10v38h-10zM850 1038h4v38h-4zM838 1078h10v38h-10zM850 1078h4v38h-4zM838 1118h10v38h-10zM850 1118h4v38h-4zM838 1158h10v38h-10zM850 1158h4v38h-4zM838 1238h10v38h-10zM850 1238h4v38h-4zM838 1278h10v38h-10zM850 1278h4v38h-4zM838 1318h10v38h-10zM850 1318h4v38h-4zM838 1358h10v38h-10zM850 1358h4v38h-4zM838 1438h4v28h-4zM850 1438h4v28h-4zM856 1038h5v38h-5zM864 1038h2v38h-2zM856 1078h5v38h-5zM864 1078h2v38h-2zM856 1118h5v38h-5zM864 1118h2v38h-2zM856 1158h5v38h-5zM864 1158h2v38h-2zM856 1238h5v38h-5zM864 1238h2v38h-2zM856 1278h5v38h-5zM864 1278h2v38h-2zM856 1318h5v38h-5zM864 1318h2v38h-2zM856 1358h5v38h-5zM864 1358h2v38h-2zM856 1438h5v28h-5zM864 1438h2v28h-2zM868 1038h5v38h-5zM875 1038h1v38h-1zM868 1078h5v38h-5zM875 1078h1v38h-1zM868 1118h5v38h-5zM875 1118h1v38h-1zM868 1158h5v38h-5zM875 1158h1v38h-1zM868 1238h5v38h-5zM875 1238h1v38h-1zM868 1278h5v38h-5zM875 1278h1v38h-1zM868 1318h5v38h-5zM875 1318h1v38h-1zM868 1358h5v38h-5zM875 1358h1v38h-1zM868 1438h5v28h-5zM875 1438h1v28h-1zM882 398h50v38h-50zM882 438h50v38h-50zM882 478h50v38h-50zM882 518h50v38h-50zM882 558h50v38h-50zM882 638h50v38h-50zM882 678h50v38h-50zM882 718h50v38h-50zM882 758h50v38h-50zM882 838h50v38h-50zM882 878h50v38h-50zM882 918h50v38h-50zM882 958h50v38h-50zM882 1038h50v38h-50zM882 1078h50v38h-50zM882 1118h50v38h-50zM882 1158h50v38h-50zM882 1238h50v38h-50zM882 1278h50v38h-50zM882 1318h50v38h-50zM882 1358h50v38h-50zM882 1438h50v28h-50zM934 358h5v38h-5zM941 398h72v38h-72zM941 438h72v38h-72zM941 478h72v38h-72zM941 518h72v38h-72zM941 558h72v38h-72zM941 638h72v38h-72zM941 678h72v38h-72zM941 718h72v38h-72zM941 758h72v38h-72zM941 838h72v38h-72zM941 878h72v38h-72zM941 918h72v38h-72zM941 958h72v38h-72zM941 1038h72v38h-72zM941 1078h72v38h-72zM941 1118h72v38h-72zM941 1158h72v38h-72zM941 1238h72v38h-72zM941 1278h72v38h-72zM941 1318h72v38h-72zM941 1358h72v38h-72zM941 1438h72v28h-72zM1017 398h33v38h-33zM1017 438h33v38h-33zM1017 478h33v38h-33zM1017 518h33v38h-33zM1017 558h33v38h-33zM1017 638h33v38h-33zM1017 678h33v38h-33zM1017 718h33v38h-33zM1017 758h33v38h-33zM1017 838h33v38h-33zM1017 878h33v38h-33zM1017 918h33v38h-33zM1017 958h33v38h-33zM1017 1038h33v38h-33zM1017 1078h33v38h-33zM1017 1118h33v38h-33zM1017 1158h33v38h-33zM1017 1238h33v38h-33zM1017 1278h33v38h-33zM1017 1318h33v38h-33zM1017 1358h33v38h-33zM1017 1438h33v28h-33zM1052 358h5v38h-5zM1059 398h40v38h-40zM1059 438h40v38h-40zM1059 478h40v38h-40zM1059 518h40v38h-40zM1059 558h40v38h-40zM1059 638h40v38h-40zM1059 678h40v38h-40zM1059 718h40v38h-40zM1059 758h40v38h-40zM1059 838h40v38h-40zM1059 878h40v38h-40zM1059 918h40v38h-40zM1059 958h40v38h-40zM1059 1038h40v38h-40zM1059 1078h40v38h-40zM1059 1118h40v38h-40zM1059 1158h40v38h-40zM1059 1238h40v38h-40zM1059 1278h40v38h-40zM1059 1318h40v38h-40zM1059 1358h40v38h-40zM1059 1438h40v28h-40zM1104 398h51v38h-51zM1104 438h51v38h-51zM1104 478h51v38h-51zM1104 518h51v38h-51zM1104 558h51v38h-51zM1104 638h51v38h-51zM1104 678h51v38h-51zM1104 718h51v38h-51zM1104 758h51v38h-51zM1104 838h51v38h-51zM1104 878h51v38h-51zM1104 918h51v38h-51zM1104 958h51v38h-51zM1104 1038h51v38h-51zM1104 1078h51v38h-51zM1104 1118h51v38h-51zM1104 1158h51v38h-51zM1104 1238h51v38h-51zM1104 1278h51v38h-51zM1104 1318h51v38h-51zM1104 1358h51v38h-51zM1104 1438h51v28h-51zM1159 398h30v38h-30zM1159 438h30v38h-30zM1159 478h30v38h-30zM1159 518h30v38h-30zM1159 558h30v38h-30zM1159 638h15v38h-15zM1159 678h15v38h-15zM1159 718h15v38h-15zM1159 758h15v38h-15zM1176 638h13v38h-13zM1176 678h13v38h-13zM1176 718h13v38h-13zM1176 758h13v38h-13zM1176 798h13v38h-13zM1159 838h2v38h-2zM1163 838h4v38h-4zM1170 838h3v38h-3zM1175 838h4v38h-4zM1181 838h8v38h-8zM1159 878h2v38h-2zM1163 878h4v38h-4zM1170 878h3v38h-3zM1175 878h4v38h-4zM1181 878h8v38h-8zM1159 918h2v38h-2zM1163 918h4v38h-4zM1170 918h3v38h-3zM1175 918h4v38h-4zM1181 918h8v38h-8zM1159 958h2v38h-2zM1163 958h4v38h-4zM1170 958h3v38h-3zM1175 958h4v38h-4zM1181 958h8v38h-8zM1159 1038h2v38h-2zM1163 1038h4v38h-4zM1170 1038h3v38h-3zM1175 1038h4v38h-4zM1181 1038h8v38h-8zM1159 1078h2v38h-2zM1163 1078h4v38h-4zM1170 1078h3v38h-3zM1175 1078h4v38h-4zM1181 1078h8v38h-8zM1159 1118h2v38h-2zM1163 1118h4v38h-4zM1170 1118h3v38h-3zM1175 1118h4v38h-4zM1181 1118h4v38h-4zM1187 1118h2v38h-2zM1159 1158h2v38h-2zM1163 1158h4v38h-4zM1170 1158h3v38h-3zM1175 1158h4v38h-4zM1181 1158h4v38h-4zM1187 1158h2v38h-2zM1159 1198h2v38h-2zM1163 1198h4v38h-4zM1170 1198h3v38h-3zM1175 1198h4v38h-4zM1181 1198h4v38h-4zM1187 1198h2v38h-2zM1159 1238h2v38h-2zM1163 1238h4v38h-4zM1170 1238h3v38h-3zM1175 1238h4v38h-4zM1181 1238h4v38h-4zM1187 1238h2v38h-2zM1159 1278h2v38h-2zM1163 1278h4v38h-4zM1170 1278h3v38h-3zM1175 1278h4v38h-4zM1181 1278h4v38h-4zM1187 1278h2v38h-2zM1159 1318h2v38h-2zM1163 1318h4v38h-4zM1170 1318h3v38h-3zM1175 1318h4v38h-4zM1181 1318h4v38h-4zM1187 1318h2v38h-2zM1159 1358h2v38h-2zM1163 1358h4v38h-4zM1170 1358h3v38h-3zM1175 1358h4v38h-4zM1181 1358h4v38h-4zM1187 1358h2v38h-2zM1159 1398h2v38h-2zM1163 1398h4v38h-4zM1170 1398h3v38h-3zM1175 1398h4v38h-4zM1181 1398h4v38h-4zM1187 1398h2v38h-2zM1159 1438h2v28h-2zM1163 1438h4v28h-4zM1175 1438h4v28h-4zM1181 1438h4v28h-4zM1187 1438h2v28h-2zM1196 398h18v38h-18zM1196 438h18v38h-18zM1196 478h18v38h-18zM1196 518h18v38h-18zM1196 558h18v38h-18zM1196 638h18v38h-18zM1196 678h18v38h-18zM1196 718h18v38h-18zM1196 758h18v38h-18zM1196 838h3v38h-3zM1202 838h12v38h-12zM1196 878h3v38h-3zM1202 878h12v38h-12zM1196 918h3v38h-3zM1196 958h3v38h-3zM1196 998h3v38h-3zM1196 1038h3v38h-3zM1196 1078h3v38h-3zM1196 1118h3v38h-3zM1196 1158h3v38h-3zM1196 1198h3v38h-3zM1196 1238h3v38h-3zM1196 1278h3v38h-3zM1196 1318h3v38h-3zM1196 1358h3v38h-3zM1196 1398h3v38h-3zM1196 1438h3v28h-3zM1219 398h14v38h-14zM1219 438h14v38h-14zM1219 478h14v38h-14zM1219 518h14v38h-14zM1219 558h14v38h-14zM1219 638h14v38h-14zM1219 678h14v38h-14zM1219 718h14v38h-14zM1219 758h14v38h-14zM1219 838h11v38h-11zM1219 878h11v38h-11zM1219 918h11v38h-11zM1219 958h11v38h-11zM1219 998h11v38h-11zM1219 1038h11v38h-11zM1219 1078h11v38h-11zM1219 1118h11v38h-11zM1219 1158h11v38h-11zM1219 1198h11v38h-11zM1219 1238h11v38h-11zM1219 1278h11v38h-11zM1219 1318h11v38h-11zM1219 1358h11v38h-11zM1219 1398h11v38h-11zM1219 1438h11v28h-11zM1235 358h5v38h-5zM1242 398h53v38h-53zM1242 438h53v38h-53zM1242 478h53v38h-53zM1242 518h53v38h-53zM1242 558h53v38h-53zM1242 638h53v38h-53zM1242 678h53v38h-53zM1242 718h53v38h-53zM1242 758h53v38h-53zM1242 838h53v38h-53zM1242 878h53v38h-53zM1242 918h53v38h-53zM1242 958h53v38h-53zM1242 1038h20v38h-20zM1242 1078h20v38h-20zM1242 1118h20v38h-20zM1242 1158h20v38h-20zM1264 1038h11v38h-11zM1264 1078h11v38h-11zM1264 1118h11v38h-11zM1264 1158h11v38h-11zM1277 1038h18v38h-18zM1277 1078h18v38h-18zM1277 1118h18v38h-18zM1277 1158h18v38h-18zM1242 1238h10v38h-10zM1255 1238h5v38h-5zM1272 1238h6v38h-6zM1280 1238h15v38h-15zM1242 1278h10v38h-10zM1255 1278h5v38h-5zM1272 1278h6v38h-6zM1280 1278h15v38h-15zM1242 1318h10v38h-10zM1255 1318h5v38h-5zM1272 1318h6v38h-6zM1280 1318h15v38h-15zM1242 1358h10v38h-10zM1255 1358h5v38h-5zM1272 1358h6v38h-6zM1280 1358h15v38h-15zM1242 1438h10v28h-10zM1255 1438h5v28h-5zM1272 1438h6v28h-6zM1280 1438h10v28h-10zM1292 1438h3v28h-3zM1300 398h17v38h-17zM1300 438h17v38h-17zM1300 478h17v38h-17zM1300 518h17v38h-17zM1300 558h17v38h-17zM1300 638h17v38h-17zM1300 678h17v38h-17zM1300 718h17v38h-17zM1300 758h17v38h-17zM1300 838h17v38h-17zM1300 878h17v38h-17zM1300 918h17v38h-17zM1300 958h17v38h-17zM1300 1038h10v38h-10zM1313 1038h4v38h-4zM1300 1078h10v38h-10zM1313 1078h4v38h-4zM1300 1118h10v38h-10zM1313 1118h4v38h-4zM1300 1158h5v38h-5zM1307 1158h3v38h-3zM1313 1158h4v38h-4zM1300 1198h5v38h-5zM1307 1198h3v38h-3zM1313 1198h4v38h-4zM1300 1238h5v38h-5zM1307 1238h3v38h-3zM1313 1238h4v38h-4zM1300 1278h5v38h-5zM1307 1278h3v38h-3zM1313 1278h4v38h-4zM1300 1318h5v38h-5zM1307 1318h3v38h-3zM1313 1318h4v38h-4zM1300 1358h5v38h-5zM1307 1358h3v38h-3zM1313 1358h4v38h-4zM1300 1398h5v38h-5zM1307 1398h3v38h-3zM1313 1398h4v38h-4zM1300 1438h5v28h-5zM1307 1438h3v28h-3zM1313 1438h4v28h-4zM1320 358h7v38h-7zM1330 358h1v38h-1zM1330 398h1v38h-1zM1330 438h1v38h-1zM1330 478h1v38h-1zM1330 518h1v38h-1zM1330 558h1v38h-1zM1330 598h1v38h-1zM1330 638h1v38h-1zM1330 678h1v38h-1zM1330 718h1v38h-1zM1330 758h1v38h-1zM1330 798h1v38h-1zM1330 838h1v38h-1zM1330 878h1v38h-1zM1330 918h1v38h-1zM1330 958h1v38h-1zM1330 998h1v38h-1zM1330 1038h1v38h-1zM1330 1078h1v38h-1zM1330 1118h1v38h-1zM1330 1158h1v38h-1zM1330 1198h1v38h-1zM1330 1238h1v38h-1zM1330 1278h1v38h-1zM1330 1318h1v38h-1zM1330 1358h1v38h-1zM1330 1398h1v38h-1zM1330 1438h1v28h-1zM1334 398h14v38h-14zM1334 438h14v38h-14zM1334 478h14v38h-14zM1334 518h14v38h-14zM1334 558h14v38h-14zM1334 638h14v38h-14zM1334 678h14v38h-14zM1334 718h14v38h-14zM1334 758h14v38h-14zM1334 838h14v38h-14zM1334 878h14v38h-14zM1334 918h14v38h-14zM1334 958h14v38h-14zM1334 1038h8v38h-8zM1344 1038h4v38h-4zM1334 1078h8v38h-8zM1344 1078h4v38h-4zM1334 1118h8v38h-8zM1344 1118h4v38h-4zM1334 1158h8v38h-8zM1344 1158h4v38h-4zM1334 1198h3v38h-3zM1344 1198h4v38h-4zM1334 1238h3v38h-3zM1344 1238h4v38h-4zM1334 1278h3v38h-3zM1344 1278h4v38h-4zM1334 1318h3v38h-3zM1344 1318h4v38h-4zM1334 1358h3v38h-3zM1344 1358h4v38h-4zM1334 1398h3v38h-3zM1344 1398h4v38h-4zM1334 1438h3v28h-3zM1344 1438h4v28h-4zM1353 398h18v38h-18zM1353 438h18v38h-18zM1353 478h18v38h-18zM1353 518h18v38h-18zM1353 558h18v38h-18zM1353 638h18v38h-18zM1353 678h18v38h-18zM1353 718h18v38h-18zM1353 758h18v38h-18zM1353 838h18v38h-18zM1353 878h18v38h-18zM1353 918h18v38h-18zM1353 958h18v38h-18zM1353 1038h12v38h-12zM1367 1038h4v38h-4zM1353 1078h5v38h-5zM1360 1078h5v38h-5zM1367 1078h4v38h-4zM1353 1118h5v38h-5zM1360 1118h5v38h-5zM1367 1118h4v38h-4zM1353 1158h5v38h-5zM1360 1158h5v38h-5zM1367 1158h4v38h-4zM1353 1198h5v38h-5zM1360 1198h5v38h-5zM1367 1198h4v38h-4zM1353 1238h5v38h-5zM1360 1238h5v38h-5zM1367 1238h4v38h-4zM1353 1278h5v38h-5zM1360 1278h5v38h-5zM1367 1278h4v38h-4zM1353 1318h5v38h-5zM1360 1318h5v38h-5zM1367 1318h4v38h-4zM1353 1358h5v38h-5zM1360 1358h5v38h-5zM1367 1358h4v38h-4zM1353 1398h5v38h-5zM1360 1398h5v38h-5zM1367 1398h4v38h-4zM1353 1438h5v28h-5zM1360 1438h5v28h-5zM1367 1438h4v28h-4zM1373 358h1v38h-1zM1376 398h56v38h-56zM1376 438h27v38h-27zM1376 478h27v38h-27zM1376 518h27v38h-27zM1376 558h27v38h-27zM1376 638h27v38h-27zM1376 678h27v38h-27zM1376 718h27v38h-27zM1376 758h27v38h-27zM1376 838h27v38h-27zM1376 878h27v38h-27zM1376 918h27v38h-27zM1376 958h27v38h-27zM1408 438h24v38h-24zM1408 478h24v38h-24zM1408 518h24v38h-24zM1408 638h8v38h-8zM1408 678h8v38h-8zM1408 718h8v38h-8zM1408 758h8v38h-8zM1408 798h8v38h-8zM1408 838h8v38h-8zM1408 878h8v38h-8zM1408 918h8v38h-8zM1408 958h8v38h-8zM1408 998h8v38h-8zM1418 638h14v38h-14zM1418 678h14v38h-14zM1418 718h14v38h-14zM1418 758h14v38h-14zM1418 798h14v38h-14zM1418 838h14v38h-14zM1418 878h14v38h-14zM1418 918h14v38h-14zM1418 958h14v38h-14zM1418 998h14v38h-14zM1376 1038h2v38h-2zM1380 1038h9v38h-9zM1391 1038h3v38h-3zM1396 1038h2v38h-2zM1400 1038h11v38h-11zM1429 1038h2v38h-2zM1376 1078h2v38h-2zM1380 1078h9v38h-9zM1391 1078h3v38h-3zM1396 1078h2v38h-2zM1400 1078h11v38h-11zM1429 1078h2v38h-2zM1376 1118h2v38h-2zM1380 1118h9v38h-9zM1391 1118h3v38h-3zM1396 1118h2v38h-2zM1400 1118h11v38h-11zM1429 1118h2v38h-2zM1376 1158h2v38h-2zM1380 1158h9v38h-9zM1391 1158h3v38h-3zM1396 1158h2v38h-2zM1400 1158h11v38h-11zM1429 1158h2v38h-2zM1376 1198h2v38h-2zM1380 1198h3v38h-3zM1385 1198h4v38h-4zM1391 1198h3v38h-3zM1396 1198h2v38h-2zM1400 1198h11v38h-11zM1429 1198h2v38h-2zM1376 1238h2v38h-2zM1380 1238h3v38h-3zM1385 1238h4v38h-4zM1391 1238h3v38h-3zM1396 1238h2v38h-2zM1400 1238h11v38h-11zM1429 1238h2v38h-2zM1376 1278h2v38h-2zM1380 1278h3v38h-3zM1385 1278h4v38h-4zM1391 1278h3v38h-3zM1396 1278h2v38h-2zM1400 1278h11v38h-11zM1429 1278h2v38h-2zM1376 1318h2v38h-2zM1380 1318h3v38h-3zM1385 1318h4v38h-4zM1391 1318h3v38h-3zM1396 1318h2v38h-2zM1400 1318h6v38h-6zM1429 1318h2v38h-2zM1376 1358h2v38h-2zM1380 1358h3v38h-3zM1385 1358h4v38h-4zM1391 1358h3v38h-3zM1396 1358h2v38h-2zM1400 1358h6v38h-6zM1429 1358h2v38h-2zM1376 1398h2v38h-2zM1380 1398h3v38h-3zM1385 1398h4v38h-4zM1391 1398h3v38h-3zM1396 1398h2v38h-2zM1400 1398h6v38h-6zM1429 1398h2v38h-2zM1376 1438h2v28h-2zM1380 1438h3v28h-3zM1385 1438h4v28h-4zM1391 1438h3v28h-3zM1396 1438h2v28h-2zM1400 1438h6v28h-6zM1429 1438h2v28h-2zM1434 358h5v38h-5zM1434 398h5v38h-5zM1434 438h5v38h-5zM1434 478h5v38h-5zM1434 518h5v38h-5zM1434 558h5v38h-5zM1434 598h5v38h-5zM1434 638h5v38h-5zM1434 678h5v38h-5zM1434 718h5v38h-5zM1434 758h5v38h-5zM1434 798h5v38h-5zM1441 398h59v38h-59zM1441 438h45v38h-45zM1441 478h45v38h-45zM1441 518h45v38h-45zM1441 638h43v38h-43zM1441 678h43v38h-43zM1441 718h43v38h-43zM1441 758h43v38h-43zM1441 798h43v38h-43zM1441 838h43v38h-43zM1441 878h43v38h-43zM1441 918h43v38h-43zM1441 958h43v38h-43zM1441 998h43v38h-43zM1441 1038h43v38h-43zM1441 1078h43v38h-43zM1441 1118h43v38h-43zM1441 1158h30v38h-30zM1441 1198h30v38h-30zM1441 1238h30v38h-30zM1441 1278h8v38h-8zM1451 1278h3v38h-3zM1457 1278h2v38h-2zM1461 1278h3v38h-3zM1466 1278h6v38h-6zM1474 1278h8v38h-8zM1441 1318h8v38h-8zM1451 1318h3v38h-3zM1457 1318h2v38h-2zM1461 1318h3v38h-3zM1466 1318h6v38h-6zM1474 1318h8v38h-8zM1441 1358h8v38h-8zM1451 1358h3v38h-3zM1457 1358h2v38h-2zM1461 1358h3v38h-3zM1466 1358h6v38h-6zM1474 1358h8v38h-8zM1441 1398h8v38h-8zM1451 1398h3v38h-3zM1457 1398h2v38h-2zM1461 1398h3v38h-3zM1466 1398h6v38h-6zM1474 1398h8v38h-8zM1441 1438h8v28h-8zM1451 1438h3v28h-3zM1457 1438h2v28h-2zM1461 1438h3v28h-3zM1466 1438h6v28h-6zM1474 1438h8v28h-8zM1489 478h11v38h-11zM1489 518h11v38h-11zM1489 558h11v38h-11zM1487 598h6v38h-6zM1495 598h5v38h-5zM1487 638h6v38h-6zM1495 638h5v38h-5zM1487 678h6v38h-6zM1495 678h5v38h-5zM1487 718h6v38h-6zM1495 718h5v38h-5zM1487 758h6v38h-6zM1495 758h5v38h-5zM1487 798h6v38h-6zM1495 798h5v38h-5zM1487 838h6v38h-6zM1495 838h5v38h-5zM1487 878h6v38h-6zM1495 878h5v38h-5zM1487 918h6v38h-6zM1495 918h5v38h-5zM1487 958h6v38h-6zM1495 958h5v38h-5zM1487 998h6v38h-6zM1495 998h5v38h-5zM1487 1038h6v38h-6zM1495 1038h5v38h-5zM1487 1078h6v38h-6zM1495 1078h5v38h-5zM1487 1118h6v38h-6zM1495 1118h5v38h-5zM1487 1158h6v38h-6zM1495 1158h5v38h-5zM1487 1198h6v38h-6zM1495 1198h5v38h-5zM1487 1238h6v38h-6zM1495 1238h5v38h-5zM1487 1278h6v38h-6zM1495 1278h5v38h-5zM1487 1318h6v38h-6zM1495 1318h5v38h-5zM1487 1358h6v38h-6zM1495 1358h5v38h-5zM1487 1398h6v38h-6zM1495 1398h5v38h-5zM1487 1438h6v28h-6zM1495 1438h5v28h-5zM1503 398h37v38h-37zM1503 478h37v38h-37zM1503 518h37v38h-37zM1503 558h37v38h-37zM1503 598h37v38h-37zM1503 638h37v38h-37zM1503 678h37v38h-37zM1503 718h37v38h-37zM1503 758h37v38h-37zM1503 798h37v38h-37zM1503 838h16v38h-16zM1522 838h11v38h-11zM1536 838h4v38h-4zM1503 878h16v38h-16zM1522 878h6v38h-6zM1536 878h4v38h-4zM1503 918h16v38h-16zM1522 918h6v38h-6zM1536 918h4v38h-4zM1503 958h5v38h-5zM1510 958h9v38h-9zM1522 958h6v38h-6zM1536 958h4v38h-4zM1503 998h5v38h-5zM1510 998h9v38h-9zM1522 998h6v38h-6zM1536 998h4v38h-4zM1503 1038h5v38h-5zM1510 1038h9v38h-9zM1522 1038h6v38h-6zM1536 1038h4v38h-4zM1503 1078h5v38h-5zM1510 1078h9v38h-9zM1522 1078h6v38h-6zM1536 1078h4v38h-4zM1503 1118h5v38h-5zM1510 1118h9v38h-9zM1522 1118h6v38h-6zM1536 1118h4v38h-4zM1503 1158h5v38h-5zM1510 1158h9v38h-9zM1522 1158h6v38h-6zM1536 1158h4v38h-4zM1503 1198h5v38h-5zM1510 1198h9v38h-9zM1522 1198h6v38h-6zM1536 1198h4v38h-4zM1503 1238h5v38h-5zM1510 1238h9v38h-9zM1522 1238h6v38h-6zM1536 1238h4v38h-4zM1503 1278h5v38h-5zM1522 1278h6v38h-6zM1536 1278h4v38h-4zM1503 1318h5v38h-5zM1522 1318h6v38h-6zM1536 1318h4v38h-4zM1503 1358h5v38h-5zM1522 1358h6v38h-6zM1536 1358h4v38h-4zM1503 1398h5v38h-5zM1522 1398h6v38h-6zM1536 1398h4v38h-4zM1503 1438h5v28h-5zM1522 1438h6v28h-6zM1536 1438h4v28h-4zM1542 438h7v38h-7zM1551 438h5v38h-5zM1542 478h7v38h-7zM1551 478h5v38h-5zM1542 518h7v38h-7zM1551 518h5v38h-5zM1542 558h7v38h-7zM1551 558h5v38h-5zM1542 598h7v38h-7zM1551 598h5v38h-5zM1542 638h7v38h-7zM1551 638h5v38h-5zM1542 678h7v38h-7zM1551 678h5v38h-5zM1542 718h7v38h-7zM1551 718h5v38h-5zM1542 758h7v38h-7zM1551 758h5v38h-5zM1542 798h7v38h-7zM1551 798h5v38h-5zM1542 838h7v38h-7zM1551 838h5v38h-5zM1542 878h7v38h-7zM1551 878h5v38h-5zM1542 918h7v38h-7zM1551 918h5v38h-5zM1542 958h7v38h-7zM1551 958h5v38h-5zM1542 998h7v38h-7zM1551 998h5v38h-5zM1542 1038h7v38h-7zM1551 1038h5v38h-5zM1542 1078h7v38h-7zM1551 1078h5v38h-5zM1542 1118h7v38h-7zM1551 1118h5v38h-5zM1542 1158h7v38h-7zM1551 1158h5v38h-5zM1542 1198h7v38h-7zM1551 1198h5v38h-5zM1551 358h5v38h-5zM1558 358h34v38h-34zM1558 398h34v38h-34zM1558 438h34v38h-34zM1558 558h34v38h-34zM1558 598h34v38h-34zM1558 638h34v38h-34zM1558 678h10v38h-10zM1570 678h10v38h-10zM1582 678h5v38h-5zM1558 718h10v38h-10zM1570 718h10v38h-10zM1582 718h5v38h-5zM1558 758h10v38h-10zM1570 758h10v38h-10zM1582 758h5v38h-5zM1558 798h10v38h-10zM1570 798h10v38h-10zM1582 798h5v38h-5zM1558 838h10v38h-10zM1570 838h10v38h-10zM1582 838h5v38h-5zM1558 878h3v38h-3zM1570 878h10v38h-10zM1582 878h5v38h-5zM1558 918h3v38h-3zM1570 918h10v38h-10zM1582 918h5v38h-5zM1558 958h3v38h-3zM1570 958h10v38h-10zM1582 958h5v38h-5zM1558 998h3v38h-3zM1570 998h10v38h-10zM1582 998h5v38h-5zM1558 1038h3v38h-3zM1570 1038h10v38h-10zM1582 1038h5v38h-5zM1558 1078h3v38h-3zM1570 1078h10v38h-10zM1582 1078h5v38h-5zM1558 1118h3v38h-3zM1570 1118h10v38h-10zM1582 1118h5v38h-5zM1558 1158h3v38h-3zM1570 1158h6v38h-6zM1578 1158h2v38h-2zM1582 1158h5v38h-5zM1558 1198h3v38h-3zM1570 1198h6v38h-6zM1578 1198h2v38h-2zM1582 1198h5v38h-5zM1558 1238h3v38h-3zM1570 1238h6v38h-6zM1578 1238h2v38h-2zM1582 1238h5v38h-5zM1558 1278h3v38h-3zM1570 1278h6v38h-6zM1578 1278h2v38h-2zM1582 1278h5v38h-5zM1558 1318h3v38h-3zM1570 1318h6v38h-6zM1578 1318h2v38h-2zM1582 1318h5v38h-5zM1558 1358h3v38h-3zM1570 1358h6v38h-6zM1578 1358h2v38h-2zM1582 1358h5v38h-5zM1558 1398h3v38h-3zM1570 1398h6v38h-6zM1578 1398h2v38h-2zM1582 1398h5v38h-5zM1558 1438h3v28h-3zM1570 1438h6v28h-6zM1578 1438h2v28h-2zM1582 1438h5v28h-5zM1594 398h9v38h-9zM1594 438h3v38h-3zM1599 438h7v38h-7zM1594 478h3v38h-3zM1599 478h7v38h-7zM1594 518h3v38h-3zM1599 518h7v38h-7zM1594 558h3v38h-3zM1599 558h7v38h-7zM1594 598h3v38h-3zM1599 598h7v38h-7zM1594 638h3v38h-3zM1599 638h7v38h-7zM1594 678h3v38h-3zM1599 678h7v38h-7zM1594 718h3v38h-3zM1599 718h7v38h-7zM1594 758h3v38h-3zM1599 758h7v38h-7zM1594 798h3v38h-3zM1599 798h7v38h-7zM1594 838h3v38h-3zM1599 838h7v38h-7zM1594 878h3v38h-3zM1599 878h7v38h-7zM1594 918h3v38h-3zM1599 918h3v38h-3zM1604 918h2v38h-2zM1594 958h3v38h-3zM1599 958h3v38h-3zM1604 958h2v38h-2zM1594 998h3v38h-3zM1599 998h3v38h-3zM1604 998h2v38h-2zM1594 1038h3v38h-3zM1599 1038h3v38h-3zM1604 1038h2v38h-2zM1613 478h14v38h-14zM1613 558h14v38h-14zM1613 598h14v38h-14zM1613 638h14v38h-14zM1613 678h14v38h-14zM1613 718h14v38h-14zM1613 758h14v38h-14zM1613 798h14v38h-14zM1613 838h14v38h-14zM1613 878h14v38h-14zM1613 918h9v38h-9zM1624 918h3v38h-3zM1613 958h9v38h-9zM1624 958h3v38h-3zM1613 1078h9v38h-9zM1624 1078h3v38h-3zM1613 1118h9v38h-9zM1624 1118h3v38h-3zM1613 1158h9v38h-9zM1624 1158h3v38h-3zM1613 1198h9v38h-9zM1624 1198h3v38h-3zM1613 1238h9v38h-9zM1624 1238h3v38h-3zM1613 1278h9v38h-9zM1624 1278h3v38h-3zM1629 358h5v38h-5zM1629 398h5v38h-5zM1629 438h5v38h-5zM1629 478h5v38h-5zM1629 518h5v38h-5zM1629 558h5v38h-5zM1629 598h5v38h-5zM1629 638h5v38h-5zM1629 678h5v38h-5zM1629 718h5v38h-5zM1636 358h9v38h-9zM1636 398h9v38h-9zM1636 438h9v38h-9zM1636 478h9v38h-9zM1636 518h9v38h-9zM1636 558h9v38h-9zM1636 598h9v38h-9zM1636 638h9v38h-9zM1636 678h9v38h-9zM1636 718h9v38h-9zM1636 758h9v38h-9zM1636 798h9v38h-9zM1636 838h9v38h-9zM1636 878h9v38h-9zM1636 918h5v38h-5zM1643 918h2v38h-2zM1636 958h5v38h-5zM1643 958h2v38h-2zM1636 998h5v38h-5zM1643 998h2v38h-2zM1636 1038h5v38h-5zM1643 1038h2v38h-2zM1636 1078h5v38h-5zM1643 1078h2v38h-2zM1636 1118h5v38h-5zM1643 1118h2v38h-2zM1636 1158h5v38h-5zM1643 1158h2v38h-2zM1636 1198h5v38h-5zM1643 1198h2v38h-2zM1647 438h9v38h-9zM1647 478h9v38h-9zM1647 518h9v38h-9zM1647 558h9v38h-9zM1647 598h9v38h-9zM1647 638h9v38h-9zM1647 678h9v38h-9zM1647 718h9v38h-9zM1647 758h9v38h-9zM1647 798h9v38h-9zM1647 838h9v38h-9zM1647 878h9v38h-9zM1647 918h6v38h-6zM1655 918h1v38h-1zM1647 958h6v38h-6zM1655 958h1v38h-1zM1647 998h6v38h-6zM1647 1038h6v38h-6zM1647 1078h6v38h-6zM1647 1118h6v38h-6zM1647 1158h6v38h-6zM1647 1198h6v38h-6zM1658 358h5v38h-5zM1658 398h5v38h-5zM1658 438h5v38h-5zM1658 478h5v38h-5zM1658 518h5v38h-5zM1658 558h5v38h-5zM1658 598h5v38h-5zM1658 638h5v38h-5zM1658 678h5v38h-5zM1658 718h5v38h-5zM1658 758h5v38h-5zM1658 798h5v38h-5zM1658 838h5v38h-5zM1658 878h5v38h-5zM1658 918h5v38h-5zM1658 958h5v38h-5zM1658 998h5v38h-5zM1665 438h36v38h-36zM1665 478h36v38h-36zM1665 518h36v38h-36zM1665 558h36v38h-36zM1665 598h36v38h-36zM1665 638h36v38h-36zM1665 678h36v38h-36zM1665 718h36v38h-36zM1665 758h36v38h-36zM1665 798h36v38h-36zM1665 838h36v38h-36zM1665 878h36v38h-36zM1665 918h4v38h-4zM1671 918h9v38h-9zM1682 918h11v38h-11zM1695 918h5v38h-5zM1665 958h4v38h-4zM1671 958h9v38h-9zM1682 958h11v38h-11zM1695 958h5v38h-5zM1665 998h4v38h-4zM1671 998h9v38h-9zM1682 998h11v38h-11zM1695 998h5v38h-5zM1665 1038h4v38h-4zM1671 1038h4v38h-4zM1677 1038h3v38h-3zM1682 1038h11v38h-11zM1695 1038h5v38h-5zM1665 1078h4v38h-4zM1677 1078h3v38h-3zM1682 1078h11v38h-11zM1695 1078h5v38h-5zM1665 1118h4v38h-4zM1677 1118h3v38h-3zM1682 1118h11v38h-11zM1695 1118h5v38h-5zM1665 1158h4v38h-4zM1677 1158h3v38h-3zM1682 1158h11v38h-11zM1695 1158h5v38h-5zM1665 1198h4v38h-4zM1677 1198h3v38h-3zM1682 1198h11v38h-11zM1695 1198h5v38h-5zM1665 1238h4v38h-4zM1677 1238h3v38h-3zM1682 1238h11v38h-11zM1695 1238h5v38h-5zM1702 358h4v38h-4zM1702 398h4v38h-4zM1702 438h4v38h-4zM1702 478h4v38h-4zM1702 518h4v38h-4zM1702 558h4v38h-4zM1702 598h4v38h-4zM1702 638h4v38h-4zM1702 678h4v38h-4zM1702 718h4v38h-4zM1702 758h4v38h-4zM1702 798h4v38h-4zM1702 838h4v38h-4zM1702 878h4v38h-4zM1708 438h10v38h-10zM1708 478h10v38h-10zM1708 518h10v38h-10zM1708 558h10v38h-10zM1708 598h10v38h-10zM1708 638h10v38h-10zM1708 678h10v38h-10zM1708 718h10v38h-10zM1708 758h10v38h-10zM1708 798h10v38h-10zM1708 838h10v38h-10zM1708 878h10v38h-10zM1708 918h10v38h-10zM1708 958h10v38h-10zM1708 998h10v38h-10zM1713 1038h4v38h-4zM1713 1078h4v38h-4zM1713 1118h4v38h-4zM1713 1158h4v38h-4zM1713 1198h4v38h-4zM1713 1238h4v38h-4zM1713 1278h4v38h-4zM1713 1318h4v38h-4zM1713 1358h4v38h-4zM1713 1398h4v38h-4zM1713 1438h4v28h-4zM1719 438h29v38h-29zM1719 478h29v38h-29zM1719 518h29v38h-29zM1719 558h29v38h-29zM1719 598h29v38h-29zM1719 638h29v38h-29zM1719 678h29v38h-29zM1723 718h25v38h-25zM1723 758h25v38h-25zM1723 798h25v38h-25zM1723 838h25v38h-25zM1723 878h25v38h-25zM1723 918h25v38h-25zM1723 958h25v38h-25zM1723 998h25v38h-25zM1723 1038h25v38h-25zM1723 1078h25v38h-25zM1723 1118h25v38h-25zM1719 1158h8v38h-8zM1729 1158h6v38h-6zM1737 1158h5v38h-5zM1745 1158h3v38h-3zM1719 1198h8v38h-8zM1729 1198h6v38h-6zM1737 1198h5v38h-5zM1745 1198h3v38h-3zM1719 1238h8v38h-8zM1729 1238h6v38h-6zM1737 1238h5v38h-5zM1745 1238h3v38h-3zM1719 1278h8v38h-8zM1729 1278h6v38h-6zM1745 1278h3v38h-3zM1719 1318h4v38h-4zM1725 1318h2v38h-2zM1729 1318h6v38h-6zM1745 1318h3v38h-3zM1719 1358h4v38h-4zM1725 1358h2v38h-2zM1729 1358h6v38h-6zM1745 1358h3v38h-3zM1719 1398h4v38h-4zM1729 1398h6v38h-6zM1745 1398h3v38h-3zM1719 1438h4v28h-4zM1729 1438h6v28h-6zM1745 1438h3v28h-3zM1750 358h4v38h-4zM1750 398h4v38h-4zM1750 438h4v38h-4zM1750 478h4v38h-4zM1750 518h4v38h-4zM1750 558h4v38h-4zM1750 598h4v38h-4zM1750 638h4v38h-4zM1750 678h4v38h-4zM1750 718h4v38h-4zM1750 758h4v38h-4zM1750 798h4v38h-4zM1750 838h4v38h-4zM1750 878h4v38h-4zM1756 438h28v38h-28zM1756 478h28v38h-28zM1756 518h28v38h-28zM1756 558h28v38h-28zM1756 598h28v38h-28zM1756 638h28v38h-28zM1756 678h28v38h-28zM1756 718h28v38h-28zM1756 758h28v38h-28zM1756 798h28v38h-28zM1756 838h28v38h-28zM1756 878h28v38h-28zM1756 918h28v38h-28zM1756 958h28v38h-28zM1756 998h28v38h-28zM1756 1038h28v38h-28zM1756 1078h28v38h-28zM1756 1118h28v38h-28zM1756 1158h2v38h-2zM1760 1158h3v38h-3zM1771 1158h8v38h-8zM1782 1158h2v38h-2zM1756 1198h2v38h-2zM1760 1198h3v38h-3zM1771 1198h8v38h-8zM1782 1198h2v38h-2zM1756 1238h2v38h-2zM1760 1238h3v38h-3zM1771 1238h8v38h-8zM1782 1238h2v38h-2zM1756 1278h2v38h-2zM1760 1278h3v38h-3zM1771 1278h3v38h-3zM1776 1278h3v38h-3zM1782 1278h2v38h-2zM1756 1318h2v38h-2zM1760 1318h3v38h-3zM1771 1318h3v38h-3zM1776 1318h3v38h-3zM1782 1318h2v38h-2zM1756 1358h2v38h-2zM1760 1358h3v38h-3zM1771 1358h3v38h-3zM1776 1358h3v38h-3zM1782 1358h2v38h-2zM1756 1398h2v38h-2zM1760 1398h3v38h-3zM1771 1398h3v38h-3zM1776 1398h3v38h-3zM1782 1398h2v38h-2zM1786 358h3v38h-3zM1791 358h3v38h-3zM1796 358h4v38h-4zM1808 358h2v38h-2zM1786 398h3v38h-3zM1791 398h3v38h-3zM1796 398h4v38h-4zM1808 398h2v38h-2zM1786 438h3v38h-3zM1791 438h3v38h-3zM1796 438h4v38h-4zM1808 438h2v38h-2zM1786 478h3v38h-3zM1791 478h3v38h-3zM1796 478h4v38h-4zM1808 478h2v38h-2zM1786 518h3v38h-3zM1791 518h3v38h-3zM1796 518h4v38h-4zM1808 518h2v38h-2zM1786 558h3v38h-3zM1791 558h3v38h-3zM1796 558h4v38h-4zM1808 558h2v38h-2zM1786 598h3v38h-3zM1791 598h3v38h-3zM1796 598h4v38h-4zM1808 598h2v38h-2zM1786 638h3v38h-3zM1791 638h3v38h-3zM1796 638h4v38h-4zM1808 638h2v38h-2zM1786 678h3v38h-3zM1791 678h3v38h-3zM1796 678h4v38h-4zM1808 678h2v38h-2zM1786 718h3v38h-3zM1791 718h3v38h-3zM1796 718h4v38h-4zM1808 718h2v38h-2zM1786 758h3v38h-3zM1791 758h3v38h-3zM1796 758h4v38h-4zM1808 758h2v38h-2zM1786 798h3v38h-3zM1796 798h4v38h-4zM1808 798h2v38h-2zM1786 838h3v38h-3zM1796 838h4v38h-4zM1808 838h2v38h-2zM1786 878h3v38h-3zM1796 878h4v38h-4zM1808 878h2v38h-2zM1786 918h3v38h-3zM1796 918h4v38h-4zM1808 918h2v38h-2zM1786 958h3v38h-3zM1796 958h4v38h-4zM1808 958h2v38h-2zM1786 998h3v38h-3zM1796 998h4v38h-4zM1808 998h2v38h-2zM1786 1038h3v38h-3zM1796 1038h4v38h-4zM1808 1038h2v38h-2zM1812 358h29v38h-29zM1812 398h29v38h-29zM1812 438h29v38h-29zM1812 558h29v38h-29zM1812 598h29v38h-29zM1812 638h29v38h-29zM1812 678h11v38h-11zM1812 718h11v38h-11zM1812 758h11v38h-11zM1812 798h11v38h-11zM1812 838h11v38h-11zM1812 878h11v38h-11zM1812 918h11v38h-11zM1812 958h11v38h-11zM1812 998h11v38h-11zM1825 678h16v38h-16zM1825 718h16v38h-16zM1825 758h16v38h-16zM1825 798h16v38h-16zM1825 838h16v38h-16zM1825 878h16v38h-16zM1825 918h16v38h-16zM1825 958h16v38h-16zM1825 998h16v38h-16zM1812 1038h3v38h-3zM1817 1038h5v38h-5zM1824 1038h7v38h-7zM1833 1038h8v38h-8zM1812 1078h3v38h-3zM1817 1078h5v38h-5zM1824 1078h7v38h-7zM1833 1078h8v38h-8zM1812 1118h3v38h-3zM1817 1118h5v38h-5zM1824 1118h3v38h-3zM1829 1118h2v38h-2zM1833 1118h8v38h-8zM1812 1158h3v38h-3zM1817 1158h5v38h-5zM1824 1158h3v38h-3zM1829 1158h2v38h-2zM1833 1158h8v38h-8zM1812 1198h3v38h-3zM1817 1198h5v38h-5zM1824 1198h3v38h-3zM1829 1198h2v38h-2zM1833 1198h8v38h-8zM1812 1238h3v38h-3zM1817 1238h5v38h-5zM1824 1238h3v38h-3zM1829 1238h2v38h-2zM1833 1238h8v38h-8zM1817 1278h5v38h-5zM1824 1278h3v38h-3zM1829 1278h2v38h-2zM1833 1278h3v38h-3zM1838 1278h3v38h-3zM1817 1318h5v38h-5zM1824 1318h3v38h-3zM1829 1318h2v38h-2zM1833 1318h3v38h-3zM1838 1318h3v38h-3zM1817 1358h5v38h-5zM1824 1358h3v38h-3zM1829 1358h2v38h-2zM1833 1358h3v38h-3zM1817 1398h5v38h-5zM1824 1398h3v38h-3zM1829 1398h2v38h-2zM1833 1398h3v38h-3zM1817 1438h5v28h-5zM1824 1438h3v28h-3zM1833 1438h3v28h-3zM1843 358h6v38h-6zM1852 358h5v38h-5zM1869 358h3v38h-3zM1875 358h8v38h-8zM1885 358h2v38h-2zM1889 358h4v38h-4zM1895 358h4v38h-4zM1843 398h6v38h-6zM1852 398h5v38h-5zM1869 398h3v38h-3zM1875 398h4v38h-4zM1881 398h2v38h-2zM1885 398h2v38h-2zM1889 398h4v38h-4zM1895 398h4v38h-4zM1843 438h6v38h-6zM1852 438h5v38h-5zM1869 438h3v38h-3zM1875 438h4v38h-4zM1881 438h2v38h-2zM1885 438h2v38h-2zM1889 438h4v38h-4zM1895 438h4v38h-4zM1843 478h6v38h-6zM1852 478h5v38h-5zM1869 478h3v38h-3zM1875 478h4v38h-4zM1881 478h2v38h-2zM1885 478h2v38h-2zM1889 478h4v38h-4zM1895 478h4v38h-4zM1843 518h6v38h-6zM1852 518h5v38h-5zM1869 518h3v38h-3zM1875 518h4v38h-4zM1881 518h2v38h-2zM1885 518h2v38h-2zM1889 518h4v38h-4zM1895 518h4v38h-4zM1843 558h6v38h-6zM1852 558h5v38h-5zM1869 558h3v38h-3zM1875 558h4v38h-4zM1881 558h2v38h-2zM1885 558h2v38h-2zM1889 558h4v38h-4zM1895 558h4v38h-4zM1843 598h6v38h-6zM1852 598h5v38h-5zM1869 598h3v38h-3zM1875 598h4v38h-4zM1881 598h2v38h-2zM1885 598h2v38h-2zM1889 598h4v38h-4zM1895 598h4v38h-4zM1843 638h6v38h-6zM1852 638h5v38h-5zM1869 638h3v38h-3zM1875 638h4v38h-4zM1881 638h2v38h-2zM1885 638h2v38h-2zM1889 638h4v38h-4zM1895 638h4v38h-4zM1843 678h6v38h-6zM1852 678h5v38h-5zM1869 678h3v38h-3zM1875 678h4v38h-4zM1881 678h2v38h-2zM1885 678h2v38h-2zM1889 678h4v38h-4zM1895 678h4v38h-4zM1843 718h6v38h-6zM1852 718h5v38h-5zM1869 718h3v38h-3zM1875 718h4v38h-4zM1881 718h2v38h-2zM1885 718h2v38h-2zM1889 718h4v38h-4zM1895 718h4v38h-4zM1843 758h6v38h-6zM1852 758h5v38h-5zM1869 758h3v38h-3zM1875 758h4v38h-4zM1881 758h2v38h-2zM1885 758h2v38h-2zM1889 758h4v38h-4zM1895 758h4v38h-4zM1843 798h6v38h-6zM1852 798h5v38h-5zM1869 798h3v38h-3zM1875 798h4v38h-4zM1885 798h2v38h-2zM1889 798h4v38h-4zM1895 798h4v38h-4zM1843 838h6v38h-6zM1852 838h5v38h-5zM1869 838h3v38h-3zM1875 838h4v38h-4zM1885 838h2v38h-2zM1889 838h4v38h-4zM1895 838h4v38h-4zM1843 878h6v38h-6zM1852 878h5v38h-5zM1869 878h3v38h-3zM1885 878h2v38h-2zM1889 878h4v38h-4zM1895 878h4v38h-4zM1843 918h6v38h-6zM1869 918h3v38h-3zM1885 918h2v38h-2zM1889 918h4v38h-4zM1895 918h4v38h-4zM1843 958h6v38h-6zM1869 958h3v38h-3zM1885 958h2v38h-2zM1889 958h4v38h-4zM1843 998h6v38h-6zM1869 998h3v38h-3zM1885 998h2v38h-2zM1889 998h4v38h-4zM1843 1038h6v38h-6zM1869 1038h3v38h-3zM1885 1038h2v38h-2zM1889 1038h4v38h-4zM1843 1078h6v38h-6zM1885 1078h2v38h-2zM1889 1078h4v38h-4zM1843 1118h6v38h-6zM1889 1118h4v38h-4zM1843 1158h6v38h-6zM1889 1158h4v38h-4zM1843 1198h6v38h-6zM1889 1198h4v38h-4zM1843 1238h6v38h-6zM1889 1238h4v38h-4zM1843 1278h6v38h-6zM1843 1318h6v38h-6zM1843 1358h6v38h-6zM1843 1398h6v38h-6zM1843 1438h6v28h-6zM1902 358h9v38h-9zM1914 358h7v38h-7zM1923 358h2v38h-2zM1927 358h8v38h-8zM1937 358h7v38h-7zM1902 398h9v38h-9zM1914 398h7v38h-7zM1923 398h2v38h-2zM1927 398h8v38h-8zM1937 398h7v38h-7zM1902 438h9v38h-9zM1914 438h7v38h-7zM1923 438h2v38h-2zM1927 438h8v38h-8zM1937 438h7v38h-7zM1902 478h4v38h-4zM1908 478h3v38h-3zM1914 478h3v38h-3zM1923 478h2v38h-2zM1927 478h8v38h-8zM1937 478h7v38h-7zM1902 518h4v38h-4zM1908 518h3v38h-3zM1914 518h3v38h-3zM1923 518h2v38h-2zM1927 518h8v38h-8zM1937 518h7v38h-7zM1902 558h4v38h-4zM1908 558h3v38h-3zM1914 558h3v38h-3zM1923 558h2v38h-2zM1927 558h8v38h-8zM1937 558h7v38h-7zM1902 598h4v38h-4zM1908 598h3v38h-3zM1914 598h3v38h-3zM1923 598h2v38h-2zM1927 598h8v38h-8zM1937 598h7v38h-7zM1902 638h4v38h-4zM1908 638h3v38h-3zM1914 638h3v38h-3zM1923 638h2v38h-2zM1927 638h8v38h-8zM1937 638h7v38h-7zM1902 678h4v38h-4zM1908 678h3v38h-3zM1914 678h3v38h-3zM1923 678h2v38h-2zM1927 678h8v38h-8zM1937 678h7v38h-7zM1902 718h4v38h-4zM1908 718h3v38h-3zM1914 718h3v38h-3zM1923 718h2v38h-2zM1927 718h8v38h-8zM1937 718h7v38h-7zM1902 758h4v38h-4zM1908 758h3v38h-3zM1914 758h3v38h-3zM1923 758h2v38h-2zM1927 758h8v38h-8zM1937 758h7v38h-7zM1902 798h4v38h-4zM1908 798h3v38h-3zM1914 798h3v38h-3zM1923 798h2v38h-2zM1927 798h8v38h-8zM1937 798h7v38h-7zM1902 838h4v38h-4zM1908 838h3v38h-3zM1914 838h3v38h-3zM1923 838h2v38h-2zM1927 838h3v38h-3zM1937 838h7v38h-7zM1902 878h4v38h-4zM1908 878h3v38h-3zM1914 878h3v38h-3zM1923 878h2v38h-2zM1927 878h3v38h-3zM1937 878h7v38h-7zM1902 918h4v38h-4zM1908 918h3v38h-3zM1914 918h3v38h-3zM1923 918h2v38h-2zM1927 918h3v38h-3zM1937 918h7v38h-7zM1902 958h4v38h-4zM1908 958h3v38h-3zM1914 958h3v38h-3zM1923 958h2v38h-2zM1927 958h3v38h-3zM1937 958h7v38h-7zM1902 998h4v38h-4zM1908 998h3v38h-3zM1914 998h3v38h-3zM1923 998h2v38h-2zM1927 998h3v38h-3zM1937 998h7v38h-7zM1902 1038h4v38h-4zM1908 1038h3v38h-3zM1914 1038h3v38h-3zM1923 1038h2v38h-2zM1927 1038h3v38h-3zM1937 1038h7v38h-7zM1902 1078h4v38h-4zM1908 1078h3v38h-3zM1914 1078h3v38h-3zM1923 1078h2v38h-2zM1927 1078h3v38h-3zM1937 1078h7v38h-7zM1902 1118h4v38h-4zM1908 1118h3v38h-3zM1914 1118h3v38h-3zM1923 1118h2v38h-2zM1927 1118h3v38h-3zM1937 1118h7v38h-7zM1908 1158h3v38h-3zM1914 1158h3v38h-3zM1923 1158h2v38h-2zM1937 1158h2v38h-2zM1941 1158h3v38h-3zM1908 1198h3v38h-3zM1914 1198h3v38h-3zM1927 1198h3v38h-3zM1937 1198h2v38h-2zM1941 1198h3v38h-3zM1908 1238h3v38h-3zM1914 1238h3v38h-3zM1927 1238h3v38h-3zM1937 1238h2v38h-2zM1941 1238h3v38h-3zM1908 1278h3v38h-3zM1914 1278h3v38h-3zM1927 1278h3v38h-3zM1937 1278h2v38h-2zM1941 1278h3v38h-3zM1908 1318h3v38h-3zM1914 1318h3v38h-3zM1927 1318h3v38h-3zM1937 1318h2v38h-2zM1941 1318h3v38h-3zM1908 1358h3v38h-3zM1914 1358h3v38h-3zM1927 1358h3v38h-3zM1937 1358h2v38h-2zM1941 1358h3v38h-3zM1908 1398h3v38h-3zM1927 1398h3v38h-3zM1937 1398h2v38h-2zM1941 1398h3v38h-3zM1908 1438h3v28h-3zM1927 1438h3v28h-3zM1937 1438h2v28h-2zM1941 1438h3v28h-3zM1947 358h35v38h-35zM1947 398h35v38h-35zM1947 438h35v38h-35zM1947 558h35v38h-35zM1947 598h35v38h-35zM1947 638h35v38h-35zM1947 678h17v38h-17zM1947 718h17v38h-17zM1947 758h17v38h-17zM1947 798h17v38h-17zM1947 838h17v38h-17zM1947 878h17v38h-17zM1947 918h17v38h-17zM1947 958h17v38h-17zM1947 998h17v38h-17zM1947 1038h17v38h-17zM1947 1078h17v38h-17zM1947 1118h17v38h-17zM1947 1158h17v38h-17zM1947 1198h17v38h-17zM1947 1238h17v38h-17zM1966 678h16v38h-16zM1966 718h16v38h-16zM1966 758h16v38h-16zM1966 798h16v38h-16zM1966 838h16v38h-16zM1966 878h16v38h-16zM1966 918h16v38h-16zM1966 958h16v38h-16zM1966 998h16v38h-16zM1966 1038h16v38h-16zM1966 1078h16v38h-16zM1947 1118h6v38h-6zM1955 1118h3v38h-3zM1960 1118h7v38h-7zM1969 1118h3v38h-3zM1974 1118h7v38h-7zM1947 1158h6v38h-6zM1955 1158h3v38h-3zM1960 1158h7v38h-7zM1969 1158h3v38h-3zM1974 1158h7v38h-7zM1947 1198h6v38h-6zM1955 1198h3v38h-3zM1960 1198h7v38h-7zM1969 1198h3v38h-3zM1974 1198h7v38h-7zM1955 1238h3v38h-3zM1960 1238h7v38h-7zM1969 1238h3v38h-3zM1974 1238h7v38h-7zM1955 1278h3v38h-3zM1960 1278h7v38h-7zM1969 1278h3v38h-3zM1955 1318h3v38h-3zM1960 1318h7v38h-7zM1969 1318h3v38h-3zM1955 1358h3v38h-3zM1960 1358h7v38h-7zM1969 1358h3v38h-3zM1955 1398h3v38h-3zM1960 1398h7v38h-7zM1969 1398h3v38h-3zM1955 1438h3v28h-3zM1960 1438h7v28h-7zM1984 358h5v38h-5zM1991 358h4v38h-4zM1998 358h2v38h-2zM2003 358h2v38h-2zM1984 398h5v38h-5zM1991 398h4v38h-4zM1998 398h2v38h-2zM1991 438h4v38h-4zM1998 438h2v38h-2zM2003 438h2v38h-2zM1984 478h5v38h-5zM1991 478h4v38h-4zM1998 478h2v38h-2zM2003 478h2v38h-2zM1984 518h5v38h-5zM1991 518h4v38h-4zM2003 518h2v38h-2zM1984 558h5v38h-5zM1991 558h4v38h-4zM1998 558h2v38h-2zM1984 598h5v38h-5zM1991 598h4v38h-4zM2003 598h2v38h-2zM1984 638h5v38h-5zM1991 638h4v38h-4zM1998 638h2v38h-2zM2003 638h2v38h-2zM1984 678h5v38h-5zM1991 678h4v38h-4zM1998 678h2v38h-2zM2003 678h2v38h-2zM1984 718h5v38h-5zM1991 718h4v38h-4zM1998 718h2v38h-2zM2003 718h2v38h-2zM1984 758h5v38h-5zM1991 758h4v38h-4zM1998 758h2v38h-2zM2003 758h2v38h-2zM1991 798h4v38h-4zM1998 798h2v38h-2zM2003 798h2v38h-2zM1984 838h5v38h-5zM1991 838h4v38h-4zM1998 838h2v38h-2zM2003 838h2v38h-2zM1984 878h5v38h-5zM1991 878h4v38h-4zM1998 878h2v38h-2zM2003 878h2v38h-2zM1984 918h5v38h-5zM1991 918h4v38h-4zM1998 918h2v38h-2zM2003 918h2v38h-2zM1984 958h5v38h-5zM1991 958h4v38h-4zM1998 958h2v38h-2zM2003 958h2v38h-2zM1984 998h5v38h-5zM1991 998h4v38h-4zM1998 998h2v38h-2zM2003 998h2v38h-2zM1984 1038h5v38h-5zM1991 1038h4v38h-4zM1998 1038h2v38h-2zM2003 1038h2v38h-2zM1984 1078h5v38h-5zM1991 1078h4v38h-4zM1998 1078h2v38h-2zM2003 1078h2v38h-2zM1984 1118h5v38h-5zM1991 1118h4v38h-4zM1998 1118h2v38h-2zM2003 1118h2v38h-2zM1984 1158h5v38h-5zM1991 1158h4v38h-4zM1998 1158h2v38h-2zM1984 1198h5v38h-5zM1991 1198h4v38h-4zM1998 1198h2v38h-2zM1984 1238h5v38h-5zM1991 1238h4v38h-4zM1998 1238h2v38h-2zM1984 1278h5v38h-5zM1991 1278h4v38h-4zM1998 1278h2v38h-2zM1984 1318h5v38h-5zM1998 1318h2v38h-2zM2007 358h28v38h-28zM2007 398h28v38h-28zM2007 438h28v38h-28zM2007 478h28v38h-28zM2007 518h28v38h-28zM2007 558h28v38h-28zM2007 598h28v38h-28zM2007 638h28v38h-28zM2007 678h28v38h-28zM2007 718h28v38h-28zM2007 758h28v38h-28zM2007 798h28v38h-28zM2007 838h28v38h-28zM2007 878h28v38h-28zM2007 918h28v38h-28zM2007 958h28v38h-28zM2007 998h28v38h-28zM2007 1038h28v38h-28zM2007 1078h28v38h-28zM2007 1118h28v38h-28zM2007 1158h28v38h-28zM2007 1198h28v38h-28zM2007 1238h5v38h-5zM2014 1238h6v38h-6zM2023 1238h4v38h-4zM2029 1238h6v38h-6zM2007 1278h5v38h-5zM2014 1278h6v38h-6zM2029 1278h6v38h-6zM2007 1318h5v38h-5zM2014 1318h6v38h-6zM2029 1318h6v38h-6zM2014 1358h6v38h-6zM2029 1358h6v38h-6zM2014 1398h6v38h-6zM2029 1398h6v38h-6zM2014 1438h6v28h-6zM2029 1438h6v28h-6zM2038 358h5v38h-5zM2045 358h3v38h-3zM2050 358h6v38h-6zM2058 358h5v38h-5zM2066 358h2v38h-2zM2038 398h5v38h-5zM2045 398h3v38h-3zM2050 398h6v38h-6zM2058 398h5v38h-5zM2066 398h2v38h-2zM2038 438h5v38h-5zM2045 438h3v38h-3zM2050 438h6v38h-6zM2058 438h5v38h-5zM2066 438h2v38h-2zM2038 478h5v38h-5zM2045 478h3v38h-3zM2050 478h6v38h-6zM2066 478h2v38h-2zM2038 518h5v38h-5zM2045 518h3v38h-3zM2050 518h6v38h-6zM2066 518h2v38h-2zM2038 558h5v38h-5zM2045 558h3v38h-3zM2050 558h6v38h-6zM2058 558h5v38h-5zM2066 558h2v38h-2zM2038 598h5v38h-5zM2045 598h3v38h-3zM2050 598h6v38h-6zM2058 598h5v38h-5zM2066 598h2v38h-2zM2038 638h5v38h-5zM2045 638h3v38h-3zM2050 638h6v38h-6zM2058 638h5v38h-5zM2066 638h2v38h-2zM2038 678h5v38h-5zM2045 678h3v38h-3zM2050 678h6v38h-6zM2058 678h5v38h-5zM2066 678h2v38h-2zM2038 718h5v38h-5zM2045 718h3v38h-3zM2050 718h6v38h-6zM2058 718h5v38h-5zM2066 718h2v38h-2zM2038 758h5v38h-5zM2045 758h3v38h-3zM2058 758h5v38h-5zM2066 758h2v38h-2zM2038 798h5v38h-5zM2045 798h3v38h-3zM2050 798h6v38h-6zM2058 798h5v38h-5zM2066 798h2v38h-2zM2038 838h5v38h-5zM2045 838h3v38h-3zM2050 838h6v38h-6zM2058 838h5v38h-5zM2066 838h2v38h-2zM2038 878h5v38h-5zM2045 878h3v38h-3zM2050 878h6v38h-6zM2058 878h5v38h-5zM2066 878h2v38h-2zM2038 918h5v38h-5zM2045 918h3v38h-3zM2050 918h6v38h-6zM2058 918h5v38h-5zM2066 918h2v38h-2zM2045 958h3v38h-3zM2050 958h6v38h-6zM2058 958h5v38h-5zM2066 958h2v38h-2zM2038 998h5v38h-5zM2045 998h3v38h-3zM2050 998h6v38h-6zM2058 998h5v38h-5zM2066 998h2v38h-2zM2038 1038h5v38h-5zM2045 1038h3v38h-3zM2050 1038h6v38h-6zM2058 1038h5v38h-5zM2066 1038h2v38h-2zM2038 1078h5v38h-5zM2045 1078h3v38h-3zM2050 1078h6v38h-6zM2058 1078h5v38h-5zM2066 1078h2v38h-2zM2038 1118h5v38h-5zM2045 1118h3v38h-3zM2050 1118h6v38h-6zM2058 1118h5v38h-5zM2066 1118h2v38h-2zM2038 1158h5v38h-5zM2045 1158h3v38h-3zM2050 1158h6v38h-6zM2058 1158h5v38h-5zM2066 1158h2v38h-2zM2038 1198h5v38h-5zM2045 1198h3v38h-3zM2050 1198h6v38h-6zM2058 1198h5v38h-5zM2066 1198h2v38h-2zM2038 1238h5v38h-5zM2045 1238h3v38h-3zM2050 1238h6v38h-6zM2058 1238h5v38h-5zM2066 1238h2v38h-2zM2038 1278h5v38h-5zM2045 1278h3v38h-3zM2050 1278h6v38h-6zM2058 1278h5v38h-5zM2066 1278h2v38h-2zM2070 358h20v38h-20zM2095 358h2v38h-2zM2099 358h8v38h-8zM2109 358h8v38h-8zM2120 358h8v38h-8zM2095 398h2v38h-2zM2099 398h8v38h-8zM2109 398h8v38h-8zM2120 398h8v38h-8zM2095 438h2v38h-2zM2099 438h8v38h-8zM2109 438h8v38h-8zM2120 438h8v38h-8zM2095 478h2v38h-2zM2099 478h8v38h-8zM2109 478h8v38h-8zM2120 478h8v38h-8zM2095 518h2v38h-2zM2099 518h8v38h-8zM2109 518h8v38h-8zM2120 518h8v38h-8zM2095 558h2v38h-2zM2099 558h2v38h-2zM2103 558h4v38h-4zM2109 558h3v38h-3zM2114 558h3v38h-3zM2120 558h8v38h-8zM2095 598h2v38h-2zM2099 598h2v38h-2zM2103 598h4v38h-4zM2109 598h3v38h-3zM2114 598h3v38h-3zM2120 598h8v38h-8zM2095 638h2v38h-2zM2099 638h2v38h-2zM2103 638h4v38h-4zM2109 638h3v38h-3zM2114 638h3v38h-3zM2120 638h8v38h-8zM2095 678h2v38h-2zM2099 678h2v38h-2zM2103 678h4v38h-4zM2109 678h3v38h-3zM2114 678h3v38h-3zM2120 678h8v38h-8zM2095 718h2v38h-2zM2099 718h2v38h-2zM2103 718h4v38h-4zM2109 718h3v38h-3zM2114 718h3v38h-3zM2120 718h8v38h-8zM2095 758h2v38h-2zM2099 758h2v38h-2zM2103 758h4v38h-4zM2109 758h3v38h-3zM2114 758h3v38h-3zM2120 758h8v38h-8zM2095 798h2v38h-2zM2099 798h2v38h-2zM2103 798h4v38h-4zM2109 798h3v38h-3zM2114 798h3v38h-3zM2120 798h8v38h-8zM2095 838h2v38h-2zM2099 838h2v38h-2zM2103 838h4v38h-4zM2109 838h3v38h-3zM2120 838h8v38h-8zM2095 878h2v38h-2zM2099 878h2v38h-2zM2103 878h4v38h-4zM2109 878h3v38h-3zM2120 878h3v38h-3zM2125 878h3v38h-3zM2095 918h2v38h-2zM2099 918h2v38h-2zM2103 918h4v38h-4zM2109 918h3v38h-3zM2120 918h3v38h-3zM2125 918h3v38h-3zM2095 958h2v38h-2zM2099 958h2v38h-2zM2103 958h4v38h-4zM2109 958h3v38h-3zM2120 958h3v38h-3zM2125 958h3v38h-3zM2095 998h2v38h-2zM2099 998h2v38h-2zM2103 998h4v38h-4zM2109 998h3v38h-3zM2120 998h3v38h-3zM2125 998h3v38h-3zM2095 1038h2v38h-2zM2099 1038h2v38h-2zM2103 1038h4v38h-4zM2109 1038h3v38h-3zM2120 1038h3v38h-3zM2125 1038h3v38h-3zM2095 1078h2v38h-2zM2099 1078h2v38h-2zM2103 1078h4v38h-4zM2109 1078h3v38h-3zM2120 1078h3v38h-3zM2125 1078h3v38h-3zM2095 1118h2v38h-2zM2099 1118h2v38h-2zM2103 1118h4v38h-4zM2109 1118h3v38h-3zM2120 1118h3v38h-3zM2125 1118h3v38h-3zM2095 1158h2v38h-2zM2099 1158h2v38h-2zM2103 1158h4v38h-4zM2109 1158h3v38h-3zM2125 1158h3v38h-3zM2095 1198h2v38h-2zM2099 1198h2v38h-2zM2103 1198h4v38h-4zM2109 1198h3v38h-3zM2125 1198h3v38h-3zM2095 1238h2v38h-2zM2099 1238h2v38h-2zM2103 1238h4v38h-4zM2109 1238h3v38h-3zM2125 1238h3v38h-3zM2095 1278h2v38h-2zM2099 1278h2v38h-2zM2103 1278h4v38h-4zM2109 1278h3v38h-3zM2125 1278h3v38h-3zM2095 1318h2v38h-2zM2099 1318h2v38h-2zM2103 1318h4v38h-4zM2109 1318h3v38h-3zM2125 1318h3v38h-3zM2095 1358h2v38h-2zM2099 1358h2v38h-2zM2103 1358h4v38h-4zM2109 1358h3v38h-3zM2125 1358h3v38h-3zM2095 1398h2v38h-2zM2103 1398h4v38h-4zM2109 1398h3v38h-3zM2095 1438h2v28h-2zM2103 1438h4v28h-4zM2109 1438h3v28h-3zM2125 1438h3v28h-3zM2131 358h62v38h-62zM2131 398h62v38h-62zM2131 438h62v38h-62zM2131 558h62v38h-62zM2131 598h62v38h-62zM2131 638h62v38h-62zM2131 678h28v38h-28zM2131 718h28v38h-28zM2131 758h28v38h-28zM2131 798h28v38h-28zM2131 838h28v38h-28zM2131 878h28v38h-28zM2131 918h28v38h-28zM2131 958h28v38h-28zM2131 998h28v38h-28zM2131 1038h28v38h-28zM2131 1078h28v38h-28zM2131 1118h28v38h-28zM2131 1158h28v38h-28zM2161 678h32v38h-32zM2161 718h32v38h-32zM2161 758h32v38h-32zM2161 798h32v38h-32zM2161 838h32v38h-32zM2161 878h32v38h-32zM2161 918h32v38h-32zM2161 958h32v38h-32zM2161 998h32v38h-32zM2161 1038h32v38h-32zM2161 1078h32v38h-32zM2161 1118h32v38h-32zM2161 1158h32v38h-32zM2131 1198h3v38h-3zM2136 1198h9v38h-9zM2147 1198h8v38h-8zM2157 1198h5v38h-5zM2164 1198h6v38h-6zM2172 1198h3v38h-3zM2177 1198h5v38h-5zM2184 1198h2v38h-2zM2131 1238h3v38h-3zM2136 1238h9v38h-9zM2147 1238h8v38h-8zM2157 1238h5v38h-5zM2164 1238h6v38h-6zM2172 1238h3v38h-3zM2177 1238h5v38h-5zM2184 1238h2v38h-2zM2131 1278h3v38h-3zM2136 1278h9v38h-9zM2147 1278h8v38h-8zM2164 1278h6v38h-6zM2172 1278h3v38h-3zM2177 1278h5v38h-5zM2184 1278h2v38h-2zM2136 1318h9v38h-9zM2164 1318h6v38h-6zM2172 1318h3v38h-3zM2177 1318h5v38h-5zM2136 1358h9v38h-9zM2164 1358h6v38h-6zM2172 1358h3v38h-3zM2177 1358h5v38h-5zM2199 358h7v38h-7zM2219 358h6v38h-6zM2227 358h7v38h-7zM2236 358h6v38h-6zM2244 358h8v38h-8zM2255 358h3v38h-3zM2199 398h2v38h-2zM2203 398h3v38h-3zM2219 398h6v38h-6zM2227 398h7v38h-7zM2236 398h6v38h-6zM2244 398h8v38h-8zM2255 398h3v38h-3zM2199 438h2v38h-2zM2203 438h3v38h-3zM2219 438h6v38h-6zM2227 438h7v38h-7zM2236 438h6v38h-6zM2244 438h8v38h-8zM2255 438h3v38h-3zM2199 478h2v38h-2zM2203 478h3v38h-3zM2219 478h6v38h-6zM2227 478h7v38h-7zM2236 478h6v38h-6zM2244 478h8v38h-8zM2255 478h3v38h-3zM2199 518h2v38h-2zM2203 518h3v38h-3zM2219 518h6v38h-6zM2227 518h7v38h-7zM2236 518h6v38h-6zM2244 518h8v38h-8zM2255 518h3v38h-3zM2199 558h2v38h-2zM2203 558h3v38h-3zM2219 558h6v38h-6zM2227 558h7v38h-7zM2236 558h6v38h-6zM2244 558h8v38h-8zM2255 558h3v38h-3zM2199 598h2v38h-2zM2203 598h3v38h-3zM2219 598h6v38h-6zM2227 598h7v38h-7zM2236 598h6v38h-6zM2244 598h8v38h-8zM2255 598h3v38h-3zM2199 638h2v38h-2zM2203 638h3v38h-3zM2219 638h6v38h-6zM2227 638h7v38h-7zM2236 638h6v38h-6zM2244 638h8v38h-8zM2255 638h3v38h-3zM2199 678h2v38h-2zM2203 678h3v38h-3zM2219 678h6v38h-6zM2227 678h3v38h-3zM2232 678h2v38h-2zM2236 678h6v38h-6zM2244 678h8v38h-8zM2255 678h3v38h-3zM2199 718h2v38h-2zM2203 718h3v38h-3zM2219 718h6v38h-6zM2227 718h3v38h-3zM2232 718h2v38h-2zM2236 718h6v38h-6zM2244 718h8v38h-8zM2255 718h3v38h-3zM2199 758h2v38h-2zM2203 758h3v38h-3zM2219 758h6v38h-6zM2227 758h3v38h-3zM2232 758h2v38h-2zM2244 758h8v38h-8zM2255 758h3v38h-3zM2199 798h2v38h-2zM2203 798h3v38h-3zM2219 798h6v38h-6zM2227 798h3v38h-3zM2232 798h2v38h-2zM2244 798h8v38h-8zM2255 798h3v38h-3zM2199 838h2v38h-2zM2203 838h3v38h-3zM2227 838h3v38h-3zM2232 838h2v38h-2zM2244 838h8v38h-8zM2255 838h3v38h-3zM2199 878h2v38h-2zM2203 878h3v38h-3zM2227 878h3v38h-3zM2232 878h2v38h-2zM2244 878h2v38h-2zM2248 878h4v38h-4zM2255 878h3v38h-3zM2199 918h2v38h-2zM2203 918h3v38h-3zM2227 918h3v38h-3zM2232 918h2v38h-2zM2244 918h2v38h-2zM2248 918h4v38h-4zM2255 918h3v38h-3zM2199 958h2v38h-2zM2203 958h3v38h-3zM2227 958h3v38h-3zM2232 958h2v38h-2zM2244 958h2v38h-2zM2248 958h4v38h-4zM2255 958h3v38h-3zM2199 998h2v38h-2zM2203 998h3v38h-3zM2227 998h3v38h-3zM2232 998h2v38h-2zM2244 998h2v38h-2zM2248 998h4v38h-4zM2255 998h3v38h-3zM2199 1038h2v38h-2zM2203 1038h3v38h-3zM2232 1038h2v38h-2zM2244 1038h2v38h-2zM2248 1038h4v38h-4zM2255 1038h3v38h-3zM2199 1078h2v38h-2zM2203 1078h3v38h-3zM2232 1078h2v38h-2zM2244 1078h2v38h-2zM2248 1078h4v38h-4zM2255 1078h3v38h-3zM2199 1118h2v38h-2zM2203 1118h3v38h-3zM2244 1118h2v38h-2zM2248 1118h4v38h-4zM2255 1118h3v38h-3zM2199 1158h2v38h-2zM2203 1158h3v38h-3zM2232 1158h2v38h-2zM2248 1158h4v38h-4zM2255 1158h3v38h-3zM2199 1198h2v38h-2zM2203 1198h3v38h-3zM2232 1198h2v38h-2zM2244 1198h2v38h-2zM2248 1198h4v38h-4zM2255 1198h3v38h-3zM2203 1238h3v38h-3zM2232 1238h2v38h-2zM2244 1238h2v38h-2zM2248 1238h4v38h-4zM2255 1238h3v38h-3zM2203 1278h3v38h-3zM2232 1278h2v38h-2zM2244 1278h2v38h-2zM2248 1278h4v38h-4zM2255 1278h3v38h-3zM2203 1318h3v38h-3zM2232 1318h2v38h-2zM2244 1318h2v38h-2zM2248 1318h4v38h-4zM2255 1318h3v38h-3zM2203 1358h3v38h-3zM2232 1358h2v38h-2zM2244 1358h2v38h-2zM2248 1358h4v38h-4zM2203 1398h3v38h-3zM2232 1398h2v38h-2zM2244 1398h2v38h-2zM2248 1398h4v38h-4zM2260 398h5v38h-5zM2260 438h5v38h-5zM2260 478h5v38h-5zM2260 518h5v38h-5zM2260 558h5v38h-5zM2260 598h5v38h-5zM2260 638h5v38h-5zM2260 678h5v38h-5zM2260 718h5v38h-5zM2260 758h5v38h-5zM2260 798h5v38h-5zM2260 838h5v38h-5zM2260 878h5v38h-5zM2260 918h5v38h-5zM2260 958h5v38h-5zM2260 998h5v38h-5zM2260 1038h5v38h-5zM2260 1078h5v38h-5zM2260 1118h5v38h-5zM2260 1158h5v38h-5zM2260 1198h5v38h-5zM2260 1238h5v38h-5zM2260 1278h5v38h-5zM2260 1318h5v38h-5zM2260 1358h5v38h-5zM2260 1398h5v38h-5zM2260 1438h5v28h-5zM2268 598h4v38h-4zM2268 638h4v38h-4zM2268 678h4v38h-4zM2268 718h4v38h-4zM2268 758h4v38h-4zM2268 798h4v38h-4zM2268 838h4v38h-4zM2268 878h4v38h-4zM2268 918h4v38h-4zM2268 958h4v38h-4zM2268 998h4v38h-4zM2268 1038h4v38h-4zM2268 1078h4v38h-4zM2268 1118h4v38h-4zM2274 358h37v38h-37zM2313 398h3v38h-3zM2313 438h3v38h-3zM2313 478h3v38h-3zM2313 518h3v38h-3zM2313 558h3v38h-3zM2313 598h3v38h-3zM2313 638h3v38h-3zM2313 798h3v38h-3zM2313 838h3v38h-3zM2313 878h3v38h-3zM2313 918h3v38h-3zM2318 358h7v38h-7zM2327 398h9v38h-9zM2327 438h9v38h-9zM2327 478h9v38h-9zM2327 518h9v38h-9zM2327 558h9v38h-9zM2327 598h9v38h-9zM2327 638h9v38h-9zM2327 678h9v38h-9zM2327 718h9v38h-9zM2327 758h9v38h-9zM2327 798h9v38h-9zM2338 358h12v38h-12zM2352 358h1v38h-1zM2352 398h1v38h-1zM2352 438h1v38h-1zM2352 478h1v38h-1zM2352 518h1v38h-1zM2352 558h1v38h-1zM2352 598h1v38h-1zM2352 638h1v38h-1zM2352 678h1v38h-1zM2352 718h1v38h-1zM2352 758h1v38h-1zM2352 798h1v38h-1zM2352 838h1v38h-1zM2352 878h1v38h-1zM2352 918h1v38h-1zM2352 958h1v38h-1zM2352 998h1v38h-1zM2352 1038h1v38h-1zM2352 1078h1v38h-1zM2352 1118h1v38h-1zM2352 1158h1v38h-1zM2352 1198h1v38h-1zM2352 1238h1v38h-1zM2352 1278h1v38h-1zM2352 1318h1v38h-1zM2352 1358h1v38h-1zM2352 1398h1v38h-1zM2352 1438h1v28h-1zM2355 358h87v38h-87zM2444 358h2v38h-2zM2444 398h2v38h-2zM2444 438h2v38h-2zM2448 358h15v38h-15zM2448 398h15v38h-15zM2448 438h15v38h-15zM2448 558h15v38h-15zM2448 598h15v38h-15zM2448 638h15v38h-15zM2448 678h15v38h-15zM2448 718h15v38h-15zM2448 758h15v38h-15zM2448 798h15v38h-15zM2448 838h15v38h-15zM2448 878h15v38h-15zM2448 918h15v38h-15zM2448 958h15v38h-15zM2448 998h15v38h-15zM2448 1038h15v38h-15zM2448 1078h15v38h-15zM2448 1118h15v38h-15zM2448 1158h15v38h-15zM2448 1238h4v38h-4zM2460 1238h3v38h-3zM2448 1278h4v38h-4zM2448 1318h4v38h-4zM2460 1318h3v38h-3zM2448 1358h4v38h-4zM2460 1358h3v38h-3zM2448 1398h4v38h-4zM2460 1398h3v38h-3zM2448 1438h4v28h-4zM2460 1438h3v28h-3zM2465 358h2v38h-2zM2465 398h2v38h-2zM2465 438h2v38h-2zM2465 478h2v38h-2zM2465 518h2v38h-2zM2465 558h2v38h-2zM2465 598h2v38h-2zM2465 638h2v38h-2zM2465 678h2v38h-2zM2465 718h2v38h-2zM2465 758h2v38h-2zM2465 798h2v38h-2zM2465 838h2v38h-2zM2465 878h2v38h-2zM2465 918h2v38h-2zM2465 958h2v38h-2zM2465 998h2v38h-2zM2465 1038h2v38h-2zM2465 1078h2v38h-2zM2465 1118h2v38h-2zM2465 1158h2v38h-2zM2465 1198h2v38h-2zM2465 1238h2v38h-2zM2465 1278h2v38h-2zM2465 1318h2v38h-2zM2465 1358h2v38h-2zM2465 1398h2v38h-2zM2465 1438h2v28h-2zM2471 358h31v38h-31zM2471 398h31v38h-31zM2471 438h31v38h-31zM2471 558h18v38h-18zM2471 598h18v38h-18zM2471 638h18v38h-18zM2471 678h18v38h-18zM2471 718h18v38h-18zM2471 758h18v38h-18zM2471 798h18v38h-18zM2471 838h18v38h-18zM2471 878h18v38h-18zM2471 918h18v38h-18zM2471 958h18v38h-18zM2491 598h11v38h-11zM2491 638h11v38h-11zM2491 678h11v38h-11zM2491 718h11v38h-11zM2491 758h11v38h-11zM2491 798h11v38h-11zM2491 838h11v38h-11zM2491 878h11v38h-11zM2491 918h11v38h-11zM2491 958h11v38h-11zM2471 998h4v38h-4zM2477 998h3v38h-3zM2482 998h5v38h-5zM2489 998h5v38h-5zM2496 998h2v38h-2zM2500 998h2v38h-2zM2471 1038h4v38h-4zM2477 1038h3v38h-3zM2482 1038h5v38h-5zM2489 1038h5v38h-5zM2496 1038h2v38h-2zM2500 1038h2v38h-2zM2471 1078h4v38h-4zM2477 1078h3v38h-3zM2482 1078h5v38h-5zM2489 1078h5v38h-5zM2496 1078h2v38h-2zM2500 1078h2v38h-2zM2471 1118h4v38h-4zM2477 1118h3v38h-3zM2482 1118h5v38h-5zM2489 1118h5v38h-5zM2496 1118h2v38h-2zM2500 1118h2v38h-2zM2471 1158h4v38h-4zM2477 1158h3v38h-3zM2482 1158h5v38h-5zM2489 1158h5v38h-5zM2496 1158h2v38h-2zM2500 1158h2v38h-2zM2471 1198h4v38h-4zM2477 1198h3v38h-3zM2482 1198h5v38h-5zM2489 1198h5v38h-5zM2496 1198h2v38h-2zM2500 1198h2v38h-2zM2471 1238h4v38h-4zM2477 1238h3v38h-3zM2482 1238h5v38h-5zM2489 1238h5v38h-5zM2496 1238h2v38h-2zM2500 1238h2v38h-2zM2471 1278h4v38h-4zM2477 1278h3v38h-3zM2482 1278h5v38h-5zM2489 1278h5v38h-5zM2496 1278h2v38h-2zM2500 1278h2v38h-2zM2471 1318h4v38h-4zM2477 1318h3v38h-3zM2482 1318h5v38h-5zM2489 1318h5v38h-5zM2496 1318h2v38h-2zM2500 1318h2v38h-2zM2471 1358h4v38h-4zM2477 1358h3v38h-3zM2482 1358h5v38h-5zM2489 1358h5v38h-5zM2496 1358h2v38h-2zM2477 1398h3v38h-3zM2482 1398h5v38h-5zM2489 1398h5v38h-5zM2496 1398h2v38h-2zM2500 1398h2v38h-2zM2477 1438h3v28h-3zM2482 1438h5v28h-5zM2489 1438h5v28h-5zM2496 1438h2v28h-2zM2500 1438h2v28h-2zM2507 398h17v38h-17zM2507 438h17v38h-17zM2507 478h17v38h-17zM2507 518h17v38h-17zM2507 558h17v38h-17zM2507 598h17v38h-17zM2507 638h17v38h-17zM2507 678h17v38h-17zM2507 718h17v38h-17zM2507 758h17v38h-17zM2507 798h17v38h-17zM2507 838h17v38h-17zM2507 878h17v38h-17zM2507 918h6v38h-6zM2516 918h2v38h-2zM2521 918h3v38h-3zM2507 958h6v38h-6zM2516 958h2v38h-2zM2507 998h6v38h-6zM2516 998h2v38h-2zM2507 1038h6v38h-6zM2516 1038h2v38h-2zM2516 1078h2v38h-2zM2516 1118h2v38h-2zM2516 1158h2v38h-2zM2526 358h3v38h-3zM2526 398h3v38h-3zM2526 438h3v38h-3zM2526 478h3v38h-3zM2526 518h3v38h-3zM2526 558h3v38h-3zM2526 598h3v38h-3zM2526 638h3v38h-3zM2526 678h3v38h-3zM2526 718h3v38h-3zM2526 758h3v38h-3zM2526 798h3v38h-3zM2526 838h3v38h-3zM2526 878h3v38h-3zM2526 918h3v38h-3zM2526 958h3v38h-3zM2526 998h3v38h-3zM2526 1038h3v38h-3zM2526 1078h3v38h-3zM2526 1118h3v38h-3zM2531 358h45v38h-45zM2531 398h45v38h-45zM2531 438h45v38h-45zM2531 558h45v38h-45zM2531 598h45v38h-45zM2531 638h45v38h-45zM2531 678h5v38h-5zM2531 718h5v38h-5zM2531 758h5v38h-5zM2531 798h5v38h-5zM2531 838h5v38h-5zM2531 878h5v38h-5zM2531 918h5v38h-5zM2531 958h5v38h-5zM2531 998h5v38h-5zM2531 1038h5v38h-5zM2531 1078h5v38h-5zM2531 1118h5v38h-5zM2531 1158h5v38h-5zM2538 678h19v38h-19zM2538 718h19v38h-19zM2538 758h19v38h-19zM2538 798h19v38h-19zM2538 838h19v38h-19zM2538 878h19v38h-19zM2538 918h19v38h-19zM2538 958h19v38h-19zM2538 998h19v38h-19zM2538 1038h19v38h-19zM2538 1078h19v38h-19zM2538 1118h19v38h-19zM2538 1158h19v38h-19zM2559 678h17v38h-17zM2559 718h17v38h-17zM2559 758h17v38h-17zM2559 798h17v38h-17zM2559 838h17v38h-17zM2559 878h17v38h-17zM2559 918h17v38h-17zM2559 958h17v38h-17zM2559 998h17v38h-17zM2559 1038h17v38h-17zM2559 1078h17v38h-17zM2559 1118h17v38h-17zM2559 1158h17v38h-17zM2559 1198h17v38h-17zM2531 1198h4v38h-4zM2537 1198h4v38h-4zM2543 1198h4v38h-4zM2549 1198h5v38h-5zM2556 1198h4v38h-4zM2562 1198h2v38h-2zM2574 1198h2v38h-2zM2531 1238h4v38h-4zM2537 1238h4v38h-4zM2543 1238h4v38h-4zM2549 1238h5v38h-5zM2556 1238h4v38h-4zM2562 1238h2v38h-2zM2566 1238h6v38h-6zM2574 1238h2v38h-2zM2531 1278h4v38h-4zM2537 1278h4v38h-4zM2543 1278h4v38h-4zM2549 1278h5v38h-5zM2556 1278h4v38h-4zM2562 1278h2v38h-2zM2566 1278h6v38h-6zM2574 1278h2v38h-2zM2531 1318h4v38h-4zM2537 1318h4v38h-4zM2543 1318h4v38h-4zM2549 1318h5v38h-5zM2556 1318h4v38h-4zM2562 1318h2v38h-2zM2566 1318h6v38h-6zM2574 1318h2v38h-2zM2531 1358h4v38h-4zM2537 1358h4v38h-4zM2543 1358h4v38h-4zM2549 1358h5v38h-5zM2556 1358h4v38h-4zM2562 1358h2v38h-2zM2566 1358h6v38h-6zM2574 1358h2v38h-2zM2531 1398h4v38h-4zM2537 1398h4v38h-4zM2549 1398h5v38h-5zM2556 1398h4v38h-4zM2562 1398h2v38h-2zM2566 1398h6v38h-6zM2574 1398h2v38h-2zM2531 1438h4v28h-4zM2537 1438h4v28h-4zM2543 1438h4v28h-4zM2549 1438h5v28h-5zM2556 1438h4v28h-4zM2562 1438h2v28h-2zM2566 1438h6v28h-6zM2574 1438h2v28h-2zM2578 358h10v38h-10zM2590 358h3v38h-3zM2600 358h2v38h-2zM2590 398h3v38h-3zM2596 398h2v38h-2zM2600 398h2v38h-2zM2590 438h3v38h-3zM2596 438h2v38h-2zM2600 438h2v38h-2zM2590 478h3v38h-3zM2596 478h2v38h-2zM2600 478h2v38h-2zM2590 518h3v38h-3zM2596 518h2v38h-2zM2600 518h2v38h-2zM2596 558h2v38h-2zM2600 558h2v38h-2zM2590 598h3v38h-3zM2596 598h2v38h-2zM2600 598h2v38h-2zM2590 638h3v38h-3zM2600 638h2v38h-2zM2590 678h3v38h-3zM2596 678h2v38h-2zM2600 678h2v38h-2zM2590 718h3v38h-3zM2596 718h2v38h-2zM2600 718h2v38h-2zM2590 758h3v38h-3zM2596 758h2v38h-2zM2600 758h2v38h-2zM2600 798h2v38h-2zM2590 838h3v38h-3zM2596 838h2v38h-2zM2600 838h2v38h-2zM2590 878h3v38h-3zM2596 878h2v38h-2zM2590 918h3v38h-3zM2596 918h2v38h-2zM2600 918h2v38h-2zM2590 958h3v38h-3zM2600 958h2v38h-2zM2590 998h3v38h-3zM2600 998h2v38h-2zM2590 1038h3v38h-3zM2600 1038h2v38h-2zM2590 1078h3v38h-3zM2600 1078h2v38h-2zM2590 1118h3v38h-3zM2600 1118h2v38h-2zM2590 1158h3v38h-3zM2600 1158h2v38h-2zM2590 1198h3v38h-3zM2600 1198h2v38h-2zM2590 1238h3v38h-3zM2600 1238h2v38h-2zM2590 1278h3v38h-3zM2590 1318h3v38h-3zM2604 358h21v38h-21zM2604 398h21v38h-21zM2604 438h21v38h-21zM2604 558h21v38h-21zM2604 598h21v38h-21zM2604 638h21v38h-21zM2604 678h21v38h-21zM2604 718h21v38h-21zM2604 758h21v38h-21zM2604 798h21v38h-21zM2604 838h21v38h-21zM2604 878h21v38h-21zM2604 918h21v38h-21zM2604 958h21v38h-21zM2604 998h21v38h-21zM2604 1038h21v38h-21zM2604 1078h3v38h-3zM2609 1078h4v38h-4zM2615 1078h3v38h-3zM2620 1078h3v38h-3zM2609 1118h4v38h-4zM2615 1118h3v38h-3zM2620 1118h3v38h-3zM2609 1158h4v38h-4zM2615 1158h3v38h-3zM2620 1158h3v38h-3zM2609 1198h4v38h-4zM2615 1198h3v38h-3zM2620 1198h3v38h-3zM2609 1238h4v38h-4zM2615 1238h3v38h-3zM2620 1238h3v38h-3zM2609 1278h4v38h-4zM2615 1278h3v38h-3zM2620 1278h3v38h-3zM2609 1318h4v38h-4zM2615 1318h3v38h-3zM2620 1318h3v38h-3zM2609 1358h4v38h-4zM2615 1358h3v38h-3zM2620 1358h3v38h-3zM2627 358h10v38h-10zM2640 358h3v38h-3zM2645 358h3v38h-3zM2650 358h3v38h-3zM2660 358h4v38h-4zM2666 358h1v38h-1zM2640 398h3v38h-3zM2645 398h3v38h-3zM2650 398h3v38h-3zM2660 398h4v38h-4zM2666 398h1v38h-1zM2640 438h3v38h-3zM2645 438h3v38h-3zM2650 438h3v38h-3zM2660 438h4v38h-4zM2666 438h1v38h-1zM2640 478h3v38h-3zM2645 478h3v38h-3zM2650 478h3v38h-3zM2660 478h4v38h-4zM2666 478h1v38h-1zM2640 518h3v38h-3zM2645 518h3v38h-3zM2650 518h3v38h-3zM2660 518h4v38h-4zM2666 518h1v38h-1zM2640 558h3v38h-3zM2645 558h3v38h-3zM2650 558h3v38h-3zM2660 558h4v38h-4zM2666 558h1v38h-1zM2640 598h3v38h-3zM2645 598h3v38h-3zM2650 598h3v38h-3zM2660 598h4v38h-4zM2666 598h1v38h-1zM2640 638h3v38h-3zM2645 638h3v38h-3zM2650 638h3v38h-3zM2660 638h4v38h-4zM2666 638h1v38h-1zM2640 678h3v38h-3zM2645 678h3v38h-3zM2650 678h3v38h-3zM2660 678h4v38h-4zM2666 678h1v38h-1zM2640 718h3v38h-3zM2645 718h3v38h-3zM2650 718h3v38h-3zM2660 718h4v38h-4zM2666 718h1v38h-1zM2640 758h3v38h-3zM2645 758h3v38h-3zM2650 758h3v38h-3zM2660 758h4v38h-4zM2666 758h1v38h-1zM2640 798h3v38h-3zM2645 798h3v38h-3zM2650 798h3v38h-3zM2660 798h4v38h-4zM2666 798h1v38h-1zM2640 838h3v38h-3zM2645 838h3v38h-3zM2650 838h3v38h-3zM2660 838h4v38h-4zM2666 838h1v38h-1zM2640 878h3v38h-3zM2645 878h3v38h-3zM2650 878h3v38h-3zM2660 878h4v38h-4zM2666 878h1v38h-1zM2640 918h3v38h-3zM2645 918h3v38h-3zM2650 918h3v38h-3zM2660 918h4v38h-4zM2666 918h1v38h-1zM2640 958h3v38h-3zM2645 958h3v38h-3zM2650 958h3v38h-3zM2660 958h4v38h-4zM2666 958h1v38h-1zM2640 998h3v38h-3zM2645 998h3v38h-3zM2650 998h3v38h-3zM2660 998h4v38h-4zM2666 998h1v38h-1zM2640 1038h3v38h-3zM2645 1038h3v38h-3zM2650 1038h3v38h-3zM2660 1038h4v38h-4zM2666 1038h1v38h-1zM2640 1078h3v38h-3zM2645 1078h3v38h-3zM2650 1078h3v38h-3zM2660 1078h4v38h-4zM2666 1078h1v38h-1zM2640 1118h3v38h-3zM2645 1118h3v38h-3zM2650 1118h3v38h-3zM2660 1118h4v38h-4zM2666 1118h1v38h-1zM2640 1158h3v38h-3zM2645 1158h3v38h-3zM2650 1158h3v38h-3zM2660 1158h4v38h-4zM2666 1158h1v38h-1zM2640 1198h3v38h-3zM2645 1198h3v38h-3zM2650 1198h3v38h-3zM2660 1198h4v38h-4zM2666 1198h1v38h-1zM2640 1238h3v38h-3zM2645 1238h3v38h-3zM2650 1238h3v38h-3zM2660 1238h4v38h-4zM2666 1238h1v38h-1zM2640 1278h3v38h-3zM2645 1278h3v38h-3zM2650 1278h3v38h-3zM2660 1278h4v38h-4zM2666 1278h1v38h-1zM2640 1318h3v38h-3zM2645 1318h3v38h-3zM2650 1318h3v38h-3zM2660 1318h4v38h-4zM2666 1318h1v38h-1zM2640 1358h3v38h-3zM2645 1358h3v38h-3zM2650 1358h3v38h-3zM2660 1358h4v38h-4zM2666 1358h1v38h-1zM2640 1398h3v38h-3zM2645 1398h3v38h-3zM2650 1398h3v38h-3zM2660 1398h4v38h-4zM2666 1398h1v38h-1zM2640 1438h3v28h-3zM2645 1438h3v28h-3zM2650 1438h3v28h-3zM2660 1438h4v28h-4zM2666 1438h1v28h-1zM2676 358h12v38h-12zM2676 398h12v38h-12zM2676 438h12v38h-12zM2676 598h4v38h-4zM2682 598h5v38h-5zM2689 598h1v38h-1zM2676 638h4v38h-4zM2682 638h5v38h-5zM2689 638h1v38h-1zM2682 678h5v38h-5zM2689 678h1v38h-1zM2682 718h5v38h-5zM2689 718h1v38h-1zM2682 758h5v38h-5zM2689 758h1v38h-1zM2682 798h5v38h-5zM2689 798h1v38h-1zM2682 838h5v38h-5zM2689 838h1v38h-1zM2682 878h5v38h-5zM2689 878h1v38h-1zM2682 918h5v38h-5zM2689 918h1v38h-1zM2682 958h5v38h-5zM2689 958h1v38h-1zM2682 998h5v38h-5zM2689 998h1v38h-1zM2682 1038h5v38h-5zM2689 1038h1v38h-1zM2682 1078h5v38h-5zM2689 1078h1v38h-1zM2682 1118h5v38h-5zM2689 1118h1v38h-1zM2682 1158h5v38h-5zM2689 1158h1v38h-1zM2682 1198h5v38h-5zM2689 1198h1v38h-1zM2682 1238h5v38h-5zM2689 1238h1v38h-1zM2682 1278h5v38h-5zM2689 1278h1v38h-1zM2682 1318h5v38h-5zM2692 358h14v38h-14zM2692 398h14v38h-14zM2692 438h14v38h-14zM2692 478h14v38h-14zM2692 518h14v38h-14zM2692 558h14v38h-14zM2692 598h14v38h-14zM2692 638h14v38h-14zM2692 678h14v38h-14zM2692 718h14v38h-14zM2692 758h14v38h-14zM2692 798h14v38h-14zM2692 838h14v38h-14zM2692 878h14v38h-14zM2692 918h6v38h-6zM2692 958h6v38h-6zM2692 998h6v38h-6zM2692 1038h6v38h-6zM2708 358h10v38h-10zM2708 398h10v38h-10zM2708 438h10v38h-10zM2708 478h10v38h-10zM2708 518h10v38h-10zM2708 558h10v38h-10zM2708 598h10v38h-10zM2708 638h10v38h-10zM2708 678h10v38h-10zM2708 718h10v38h-10zM2708 758h10v38h-10zM2708 798h10v38h-10zM2708 838h10v38h-10zM2708 878h10v38h-10zM2708 918h5v38h-5zM2715 918h3v38h-3zM2708 958h5v38h-5zM2715 958h3v38h-3zM2720 358h12v38h-12zM2720 398h12v38h-12zM2720 438h12v38h-12zM2720 478h12v38h-12zM2720 518h12v38h-12zM2720 558h12v38h-12zM2720 598h12v38h-12zM2720 638h12v38h-12zM2720 678h12v38h-12zM2720 718h12v38h-12zM2720 758h12v38h-12zM2720 798h12v38h-12zM2720 838h12v38h-12zM2720 878h12v38h-12zM2720 918h12v38h-12zM2720 958h5v38h-5zM2727 958h5v38h-5zM2720 998h5v38h-5zM2727 998h5v38h-5zM2727 1038h5v38h-5zM2734 358h11v38h-11zM2734 398h11v38h-11zM2734 438h11v38h-11zM2734 478h11v38h-11zM2734 518h11v38h-11zM2734 558h11v38h-11zM2734 598h11v38h-11zM2734 638h11v38h-11zM2734 678h11v38h-11zM2734 718h11v38h-11zM2734 758h11v38h-11zM2734 798h11v38h-11zM2734 838h11v38h-11zM2734 878h11v38h-11zM2734 918h11v38h-11zM2747 358h14v38h-14zM2747 398h14v38h-14zM2747 438h14v38h-14zM2747 478h14v38h-14zM2747 518h14v38h-14zM2747 558h14v38h-14zM2747 598h14v38h-14zM2747 638h14v38h-14zM2747 678h14v38h-14zM2747 718h14v38h-14zM2747 758h14v38h-14zM2747 798h14v38h-14zM2747 838h14v38h-14zM2747 878h14v38h-14zM2747 918h14v38h-14zM2747 958h5v38h-5zM2759 958h2v38h-2zM2747 998h5v38h-5zM2759 998h2v38h-2zM2764 358h12v38h-12zM2764 398h12v38h-12zM2764 438h12v38h-12zM2764 478h12v38h-12zM2764 518h12v38h-12zM2764 558h12v38h-12zM2764 598h12v38h-12zM2764 638h12v38h-12zM2764 678h12v38h-12zM2764 718h12v38h-12zM2764 758h12v38h-12zM2764 798h12v38h-12zM2764 838h12v38h-12zM2764 878h12v38h-12zM2764 918h12v38h-12zM2764 958h12v38h-12zM2764 998h9v38h-9zM2775 998h1v38h-1zM2764 1038h9v38h-9zM2775 1038h1v38h-1zM2779 358h9v38h-9zM2779 398h9v38h-9zM2779 438h9v38h-9zM2779 478h9v38h-9zM2779 518h9v38h-9zM2779 558h9v38h-9zM2779 598h9v38h-9zM2779 638h9v38h-9zM2779 678h9v38h-9zM2779 718h9v38h-9zM2779 758h9v38h-9zM2779 798h9v38h-9zM2779 838h9v38h-9zM2779 878h9v38h-9zM2779 918h5v38h-5zM2786 918h2v38h-2zM2779 958h5v38h-5zM2786 958h2v38h-2zM2779 998h5v38h-5zM2786 998h2v38h-2zM2779 1038h5v38h-5zM2786 1038h2v38h-2zM2779 1078h5v38h-5zM2779 1118h5v38h-5zM2779 1158h5v38h-5zM2779 1198h5v38h-5zM2790 358h12v38h-12zM2790 398h12v38h-12zM2790 438h12v38h-12zM2790 478h12v38h-12zM2790 518h12v38h-12zM2790 558h12v38h-12zM2790 598h12v38h-12zM2790 638h12v38h-12zM2790 678h12v38h-12zM2790 718h12v38h-12zM2790 758h12v38h-12zM2790 798h12v38h-12zM2790 838h12v38h-12zM2790 878h12v38h-12zM2790 918h12v38h-12zM2790 958h12v38h-12zM2804 358h6v38h-6zM2804 398h6v38h-6zM2804 438h6v38h-6zM2804 478h6v38h-6zM2804 518h6v38h-6zM2804 558h6v38h-6zM2804 598h6v38h-6zM2804 638h6v38h-6zM2804 678h6v38h-6zM2804 718h6v38h-6zM2804 758h6v38h-6zM2804 798h6v38h-6zM2804 838h6v38h-6zM2804 878h6v38h-6zM2804 918h4v38h-4zM2804 958h4v38h-4zM2804 998h4v38h-4zM2804 1038h4v38h-4zM2804 1078h4v38h-4zM2812 358h12v38h-12zM2812 398h12v38h-12zM2812 438h12v38h-12zM2812 478h12v38h-12zM2812 518h12v38h-12zM2812 558h12v38h-12zM2812 598h12v38h-12zM2812 638h12v38h-12zM2812 678h12v38h-12zM2812 718h12v38h-12zM2812 758h12v38h-12zM2812 798h12v38h-12zM2812 838h12v38h-12zM2812 878h12v38h-12zM2812 918h12v38h-12zM2826 358h12v38h-12zM2826 398h12v38h-12zM2826 438h12v38h-12zM2826 478h12v38h-12zM2826 518h12v38h-12zM2826 558h12v38h-12zM2826 598h12v38h-12zM2826 638h12v38h-12zM2826 678h12v38h-12zM2826 718h12v38h-12zM2826 758h12v38h-12zM2826 798h12v38h-12zM2826 838h12v38h-12zM2826 878h12v38h-12zM2826 918h4v38h-4zM2832 918h6v38h-6zM2826 958h4v38h-4zM2832 958h6v38h-6zM2826 998h4v38h-4zM2832 998h6v38h-6zM2832 1038h6v38h-6zM2832 1078h6v38h-6zM2840 358h10v38h-10zM2840 398h10v38h-10zM2840 438h10v38h-10zM2840 478h10v38h-10zM2840 518h10v38h-10zM2840 558h10v38h-10zM2840 598h10v38h-10zM2840 638h10v38h-10zM2840 678h10v38h-10zM2840 718h10v38h-10zM2840 758h10v38h-10zM2840 798h10v38h-10zM2840 838h10v38h-10zM2840 878h7v38h-7zM2840 918h7v38h-7zM2852 358h12v38h-12zM2852 398h12v38h-12zM2852 438h12v38h-12zM2852 478h12v38h-12zM2852 518h12v38h-12zM2852 558h12v38h-12zM2852 598h12v38h-12zM2852 638h12v38h-12zM2852 678h12v38h-12zM2852 718h12v38h-12zM2852 758h12v38h-12zM2852 798h12v38h-12zM2852 838h12v38h-12zM2852 878h12v38h-12zM2852 918h2v38h-2zM2857 918h5v38h-5zM2866 358h8v38h-8zM2866 398h8v38h-8zM2866 438h8v38h-8zM2866 478h8v38h-8zM2866 518h8v38h-8zM2866 558h8v38h-8zM2866 598h8v38h-8zM2866 638h8v38h-8zM2866 678h8v38h-8zM2866 718h8v38h-8zM2866 758h8v38h-8zM2866 798h8v38h-8zM2866 838h8v38h-8zM2866 878h8v38h-8zM2866 918h8v38h-8zM2866 958h5v38h-5zM2873 958h1v38h-1zM2866 998h5v38h-5zM2873 998h1v38h-1zM2866 1038h5v38h-5zM2873 1038h1v38h-1zM2866 1078h5v38h-5zM2873 1078h1v38h-1zM2876 358h2v38h-2zM2876 398h2v38h-2zM2876 438h2v38h-2zM2876 478h2v38h-2zM2876 518h2v38h-2zM2876 558h2v38h-2zM2876 598h2v38h-2zM2876 638h2v38h-2zM2876 678h2v38h-2zM2876 718h2v38h-2zM2876 758h2v38h-2zM2876 798h2v38h-2zM2876 838h2v38h-2zM2876 878h2v38h-2zM2876 918h2v38h-2zM2876 958h2v38h-2zM2876 998h2v38h-2zM2876 1038h2v38h-2z"/>
<path fill="#cdcbf0" d="M1327 318h3v38h-3zM443 358h8v38h-8zM456 358h57v38h-57zM482 598h31v38h-31zM518 358h39v38h-39zM518 598h39v38h-39zM538 798h11v38h-11zM551 798h6v38h-6zM563 358h53v38h-53zM563 598h53v38h-53zM563 798h53v38h-53zM570 1038h46v38h-46zM570 1158h3v38h-3zM575 1158h10v38h-10zM587 1158h6v38h-6zM596 1158h9v38h-9zM607 1158h8v38h-8zM624 358h43v38h-43zM624 598h30v38h-30zM624 798h30v38h-30zM624 1038h30v38h-30zM624 1238h7v38h-7zM633 1238h5v38h-5zM640 1238h12v38h-12zM675 358h28v38h-28zM689 598h14v38h-14zM689 798h14v38h-14zM708 358h54v38h-54zM708 598h54v38h-54zM708 798h51v38h-51zM713 998h46v38h-46zM708 1198h4v38h-4zM731 1198h12v38h-12zM745 1198h4v38h-4zM751 1198h4v38h-4zM757 1198h2v38h-2zM769 358h44v38h-44zM769 598h44v38h-44zM769 798h26v38h-26zM769 998h26v38h-26zM798 798h5v38h-5zM805 798h8v38h-8zM769 1198h4v38h-4zM775 1198h3v38h-3zM784 1198h8v38h-8zM769 1398h4v38h-4zM775 1398h3v38h-3zM784 1398h8v38h-8zM817 358h59v38h-59zM817 598h59v38h-59zM817 798h59v38h-59zM817 998h6v38h-6zM825 998h8v38h-8zM835 998h1v38h-1zM817 1198h6v38h-6zM825 1198h4v38h-4zM831 1198h2v38h-2zM835 1198h1v38h-1zM817 1398h6v38h-6zM825 1398h4v38h-4zM831 1398h2v38h-2zM835 1398h1v38h-1zM838 998h10v38h-10zM850 998h4v38h-4zM838 1198h10v38h-10zM850 1198h4v38h-4zM838 1398h10v38h-10zM850 1398h4v38h-4zM856 998h5v38h-5zM864 998h2v38h-2zM856 1198h5v38h-5zM864 1198h2v38h-2zM856 1398h5v38h-5zM864 1398h2v38h-2zM868 998h5v38h-5zM875 998h1v38h-1zM868 1198h5v38h-5zM875 1198h1v38h-1zM868 1398h5v38h-5zM875 1398h1v38h-1zM882 358h50v38h-50zM882 598h50v38h-50zM882 798h50v38h-50zM882 998h50v38h-50zM882 1198h50v38h-50zM882 1398h50v38h-50zM941 358h72v38h-72zM941 598h72v38h-72zM941 798h72v38h-72zM941 998h72v38h-72zM941 1198h72v38h-72zM941 1398h72v38h-72zM1017 358h33v38h-33zM1017 598h33v38h-33zM1017 798h33v38h-33zM1017 998h33v38h-33zM1017 1198h33v38h-33zM1017 1398h33v38h-33zM1059 358h40v38h-40zM1059 598h40v38h-40zM1059 798h40v38h-40zM1059 998h40v38h-40zM1059 1198h40v38h-40zM1059 1398h40v38h-40zM1104 358h51v38h-51zM1104 598h51v38h-51zM1104 798h51v38h-51zM1104 998h51v38h-51zM1104 1198h51v38h-51zM1104 1398h51v38h-51zM1159 358h30v38h-30zM1159 598h30v38h-30zM1159 798h15v38h-15zM1159 998h2v38h-2zM1163 998h4v38h-4zM1170 998h3v38h-3zM1175 998h4v38h-4zM1181 998h8v38h-8zM1196 358h18v38h-18zM1196 598h18v38h-18zM1196 798h18v38h-18zM1219 358h14v38h-14zM1219 598h14v38h-14zM1219 798h14v38h-14zM1242 358h53v38h-53zM1242 598h53v38h-53zM1242 798h53v38h-53zM1242 998h53v38h-53zM1242 1198h20v38h-20zM1264 1198h11v38h-11zM1277 1198h18v38h-18zM1242 1398h10v38h-10zM1255 1398h5v38h-5zM1272 1398h6v38h-6zM1280 1398h15v38h-15zM1300 358h17v38h-17zM1300 598h17v38h-17zM1300 798h17v38h-17zM1300 998h17v38h-17zM1334 358h14v38h-14zM1334 598h14v38h-14zM1334 798h14v38h-14zM1334 998h14v38h-14zM1353 358h18v38h-18zM1353 598h18v38h-18zM1353 798h18v38h-18zM1353 998h18v38h-18zM1376 358h56v38h-56zM1376 598h27v38h-27zM1376 798h27v38h-27zM1376 998h27v38h-27zM1408 558h24v38h-24zM1408 598h24v38h-24zM1441 358h59v38h-59zM1441 558h45v38h-45zM1441 598h43v38h-43zM1489 438h11v38h-11zM1503 358h37v38h-37zM1506 438h31v38h-31zM1542 358h4v38h-4zM1542 398h4v38h-4zM1558 478h34v38h-34zM1558 518h34v38h-34zM1594 358h9v38h-9zM1605 358h3v38h-3zM1613 358h14v38h-14zM1613 398h14v38h-14zM1613 438h14v38h-14zM1613 518h14v38h-14zM1613 998h9v38h-9zM1624 998h3v38h-3zM1613 1038h9v38h-9zM1624 1038h3v38h-3zM1647 358h9v38h-9zM1647 398h9v38h-9zM1665 358h36v38h-36zM1665 398h36v38h-36zM1708 358h10v38h-10zM1708 398h10v38h-10zM1719 358h29v38h-29zM1719 398h29v38h-29zM1756 358h28v38h-28zM1756 398h28v38h-28zM1786 358h4v38h-4zM1786 398h4v38h-4zM1812 478h29v38h-29zM1812 518h29v38h-29zM1852 358h8v38h-8zM1865 358h4v38h-4zM1865 398h4v38h-4zM1879 478h15v38h-15zM1879 518h15v38h-15zM1927 1158h3v38h-3zM1915 358h11v38h-11zM1947 478h35v38h-35zM1947 518h35v38h-35zM1969 1438h3v28h-3zM2003 398h2v38h-2zM1984 438h5v38h-5zM1998 518h2v38h-2zM2003 558h2v38h-2zM1998 598h2v38h-2zM1984 798h5v38h-5zM1989 358h9v38h-9zM2058 478h5v38h-5zM2058 518h5v38h-5zM2050 758h6v38h-6zM2038 958h5v38h-5zM2125 1398h3v38h-3zM2110 478h11v38h-11zM2110 518h11v38h-11zM2131 478h62v38h-62zM2131 518h62v38h-62zM2195 478h9v38h-9zM2195 518h2v38h-2zM2232 1118h2v38h-2zM2244 1158h2v38h-2zM2260 358h5v38h-5zM2268 358h4v38h-4zM2268 398h4v38h-4zM2268 438h4v38h-4zM2268 478h4v38h-4zM2268 518h4v38h-4zM2268 558h4v38h-4zM2268 1158h4v38h-4zM2268 1198h4v38h-4zM2313 358h3v38h-3zM2313 678h3v38h-3zM2313 718h3v38h-3zM2313 758h3v38h-3zM2327 358h9v38h-9zM2448 478h15v38h-15zM2448 518h15v38h-15zM2448 1198h4v38h-4zM2460 1198h3v38h-3zM2460 1278h3v38h-3zM2471 478h31v38h-31zM2471 518h31v38h-31zM2491 558h11v38h-11zM2500 1358h2v38h-2zM2507 358h17v38h-17zM2531 478h45v38h-45zM2531 518h45v38h-45zM2566 1198h6v38h-6zM2543 1398h4v38h-4zM2596 358h2v38h-2zM2590 558h3v38h-3zM2596 638h2v38h-2zM2590 798h3v38h-3zM2596 798h2v38h-2zM2600 878h2v38h-2zM2604 478h21v38h-21zM2604 518h21v38h-21zM2655 478h12v38h-12zM2655 518h12v38h-12zM2676 478h12v38h-12zM2676 518h12v38h-12zM2676 558h12v38h-12z"/>
<g font-family="Liberation Mono, monospace" font-size="21.5" fill="#1e1a24">
<text x="451" y="346">(root)</text>
<text x="680" y="346">(root)</text>
<text x="1342" y="346">(root)</text>
<text x="464" y="386">p<tspan font-weight="bold">…</tspan>s</text>
<text x="464" y="426">r<tspan font-weight="bold">…</tspan>s</text>
<text x="490" y="466"><tspan font-weight="bold">…</tspan></text>
<text x="490" y="506"><tspan font-weight="bold">…</tspan></text>
<text x="490" y="546"><tspan font-weight="bold">…</tspan></text>
<text x="490" y="586"><tspan font-weight="bold">…</tspan></text>
<text x="490" y="626"><tspan font-weight="bold">…</tspan></text>
<text x="490" y="666"><tspan font-weight="bold">…</tspan></text>
<text x="490" y="706"><tspan font-weight="bold">…</tspan></text>
<text x="490" y="746"><tspan font-weight="bold">…</tspan></text>
<text x="490" y="786"><tspan font-weight="bold">…</tspan></text>
<text x="490" y="826"><tspan font-weight="bold">…</tspan></text>
<text x="490" y="866"><tspan font-weight="bold">…</tspan></text>
<text x="490" y="906"><tspan font-weight="bold">…</tspan></text>
<text x="490" y="946"><tspan font-weight="bold">…</tspan></text>
<text x="490" y="986"><tspan font-weight="bold">…</tspan></text>
<text x="490" y="1026"><tspan font-weight="bold">…</tspan></text>
<text x="526" y="386"><tspan font-weight="bold">…</tspan></text>
<text x="526" y="426"><tspan font-weight="bold">…</tspan></text>
<text x="526" y="466"><tspan font-weight="bold">…</tspan></text>
<text x="526" y="506"><tspan font-weight="bold">…</tspan></text>
<text x="526" y="546"><tspan font-weight="bold">…</tspan></text>
<text x="526" y="586"><tspan font-weight="bold">…</tspan></text>
<text x="526" y="626"><tspan font-weight="bold">…</tspan></text>
<text x="571" y="386">p<tspan font-weight="bold">…</tspan></text>
<text x="571" y="426">r<tspan font-weight="bold">…</tspan></text>
<text x="571" y="466">j<tspan font-weight="bold">…</tspan></text>
<text x="571" y="506">r<tspan font-weight="bold">…</tspan></text>
<text x="571" y="546">_<tspan font-weight="bold">…</tspan></text>
<text x="571" y="586">_<tspan font-weight="bold">…</tspan></text>
<text x="571" y="626">O<tspan font-weight="bold">…</tspan></text>
<text x="571" y="666">r<tspan font-weight="bold">…</tspan></text>
<text x="571" y="706">r<tspan font-weight="bold">…</tspan></text>
<text x="571" y="746">_<tspan font-weight="bold">…</tspan></text>
<text x="571" y="786">_<tspan font-weight="bold">…</tspan></text>
<text x="571" y="826">O<tspan font-weight="bold">…</tspan></text>
<text x="578" y="866">r<tspan font-weight="bold">…</tspan></text>
<text x="578" y="906">r<tspan font-weight="bold">…</tspan></text>
<text x="578" y="946">r<tspan font-weight="bold">…</tspan></text>
<text x="578" y="986">_<tspan font-weight="bold">…</tspan></text>
<text x="578" y="1026">_<tspan font-weight="bold">…</tspan></text>
<text x="578" y="1066">O<tspan font-weight="bold">…</tspan></text>
<text x="632" y="386">p<tspan font-weight="bold">…</tspan></text>
<text x="632" y="426">r<tspan font-weight="bold">…</tspan></text>
<text x="632" y="466">j<tspan font-weight="bold">…</tspan></text>
<text x="632" y="506">r<tspan font-weight="bold">…</tspan></text>
<text x="632" y="546">_<tspan font-weight="bold">…</tspan></text>
<text x="632" y="586">_<tspan font-weight="bold">…</tspan></text>
<text x="632" y="626"><tspan font-weight="bold">…</tspan></text>
<text x="632" y="666"><tspan font-weight="bold">…</tspan></text>
<text x="632" y="706"><tspan font-weight="bold">…</tspan></text>
<text x="632" y="746"><tspan font-weight="bold">…</tspan></text>
<text x="632" y="786"><tspan font-weight="bold">…</tspan></text>
<text x="632" y="826"><tspan font-weight="bold">…</tspan></text>
<text x="632" y="866"><tspan font-weight="bold">…</tspan></text>
<text x="632" y="906"><tspan font-weight="bold">…</tspan></text>
<text x="632" y="946"><tspan font-weight="bold">…</tspan></text>
<text x="632" y="986"><tspan font-weight="bold">…</tspan></text>
<text x="632" y="1026"><tspan font-weight="bold">…</tspan></text>
<text x="632" y="1066"><tspan font-weight="bold">…</tspan></text>
<text x="683" y="386"><tspan font-weight="bold">…</tspan></text>
<text x="683" y="426"><tspan font-weight="bold">…</tspan></text>
<text x="683" y="466"><tspan font-weight="bold">…</tspan></text>
<text x="683" y="506"><tspan font-weight="bold">…</tspan></text>
<text x="683" y="546"><tspan font-weight="bold">…</tspan></text>
<text x="683" y="586"><tspan font-weight="bold">…</tspan></text>
<text x="716" y="386">p<tspan font-weight="bold">…</tspan>s</text>
<text x="716" y="426">r<tspan font-weight="bold">…</tspan>s</text>
<text x="716" y="466">j<tspan font-weight="bold">…</tspan>r</text>
<text x="716" y="506">r<tspan font-weight="bold">…</tspan>e</text>
<text x="716" y="546">_<tspan font-weight="bold">…</tspan>e</text>
<text x="716" y="586">_<tspan font-weight="bold">…</tspan>e</text>
<text x="716" y="626">O<tspan font-weight="bold">…</tspan>></text>
<text x="716" y="666">r<tspan font-weight="bold">…</tspan></text>
<text x="716" y="706">r<tspan font-weight="bold">…</tspan></text>
<text x="716" y="746">_<tspan font-weight="bold">…</tspan></text>
<text x="716" y="786">_<tspan font-weight="bold">…</tspan></text>
<text x="716" y="826">O<tspan font-weight="bold">…</tspan></text>
<text x="730" y="866"><tspan font-weight="bold">…</tspan></text>
<text x="730" y="906"><tspan font-weight="bold">…</tspan></text>
<text x="730" y="946"><tspan font-weight="bold">…</tspan></text>
<text x="730" y="986"><tspan font-weight="bold">…</tspan></text>
<text x="721" y="1026"><tspan font-weight="bold">…</tspan></text>
<text x="777" y="386">p<tspan font-weight="bold">…</tspan></text>
<text x="777" y="426">r<tspan font-weight="bold">…</tspan></text>
<text x="777" y="466">j<tspan font-weight="bold">…</tspan></text>
<text x="777" y="506">r<tspan font-weight="bold">…</tspan></text>
<text x="777" y="546">_<tspan font-weight="bold">…</tspan></text>
<text x="777" y="586">_<tspan font-weight="bold">…</tspan></text>
<text x="777" y="626">O<tspan font-weight="bold">…</tspan></text>
<text x="825" y="386">p<tspan font-weight="bold">…</tspan>s</text>
<text x="825" y="426">r<tspan font-weight="bold">…</tspan>s</text>
<text x="825" y="466">j<tspan font-weight="bold">…</tspan>r</text>
<text x="825" y="506">r<tspan font-weight="bold">…</tspan>e</text>
<text x="825" y="546">_<tspan font-weight="bold">…</tspan>e</text>
<text x="825" y="586">_<tspan font-weight="bold">…</tspan>e</text>
<text x="825" y="626">O<tspan font-weight="bold">…</tspan>></text>
<text x="825" y="666">r<tspan font-weight="bold">…</tspan>k</text>
<text x="825" y="706">r<tspan font-weight="bold">…</tspan>e</text>
<text x="825" y="746">_<tspan font-weight="bold">…</tspan>e</text>
<text x="825" y="786">_<tspan font-weight="bold">…</tspan>e</text>
<text x="825" y="826">O<tspan font-weight="bold">…</tspan>></text>
<text x="825" y="866"><tspan font-weight="bold">…</tspan></text>
<text x="825" y="906"><tspan font-weight="bold">…</tspan></text>
<text x="825" y="946"><tspan font-weight="bold">…</tspan></text>
<text x="825" y="986"><tspan font-weight="bold">…</tspan></text>
<text x="890" y="386">p<tspan font-weight="bold">…</tspan></text>
<text x="890" y="426">r<tspan font-weight="bold">…</tspan></text>
<text x="890" y="466">j<tspan font-weight="bold">…</tspan></text>
<text x="890" y="506">r<tspan font-weight="bold">…</tspan></text>
<text x="890" y="546">_<tspan font-weight="bold">…</tspan></text>
<text x="890" y="586">_<tspan font-weight="bold">…</tspan></text>
<text x="890" y="626">O<tspan font-weight="bold">…</tspan></text>
<text x="890" y="666">r<tspan font-weight="bold">…</tspan></text>
<text x="890" y="706">r<tspan font-weight="bold">…</tspan></text>
<text x="890" y="746">_<tspan font-weight="bold">…</tspan></text>
<text x="890" y="786">_<tspan font-weight="bold">…</tspan></text>
<text x="890" y="826">O<tspan font-weight="bold">…</tspan></text>
<text x="890" y="866">r<tspan font-weight="bold">…</tspan></text>
<text x="890" y="906">r<tspan font-weight="bold">…</tspan></text>
<text x="890" y="946">_<tspan font-weight="bold">…</tspan></text>
<text x="890" y="986">_<tspan font-weight="bold">…</tspan></text>
<text x="890" y="1026">O<tspan font-weight="bold">…</tspan></text>
<text x="890" y="1066">r<tspan font-weight="bold">…</tspan></text>
<text x="890" y="1106">r<tspan font-weight="bold">…</tspan></text>
<text x="890" y="1146">_<tspan font-weight="bold">…</tspan></text>
<text x="890" y="1186">_<tspan font-weight="bold">…</tspan></text>
<text x="890" y="1226">O<tspan font-weight="bold">…</tspan></text>
<text x="890" y="1266">r<tspan font-weight="bold">…</tspan></text>
<text x="890" y="1306">r<tspan font-weight="bold">…</tspan></text>
<text x="890" y="1346">_<tspan font-weight="bold">…</tspan></text>
<text x="890" y="1386">_<tspan font-weight="bold">…</tspan></text>
<text x="890" y="1426">O<tspan font-weight="bold">…</tspan></text>
<text x="890" y="1466">r<tspan font-weight="bold">…</tspan></text>
<text x="949" y="386">pr<tspan font-weight="bold">…</tspan>s</text>
<text x="949" y="426">ru<tspan font-weight="bold">…</tspan>s</text>
<text x="949" y="466">je<tspan font-weight="bold">…</tspan>r</text>
<text x="949" y="506">re<tspan font-weight="bold">…</tspan>e</text>
<text x="949" y="546">_l<tspan font-weight="bold">…</tspan>e</text>
<text x="949" y="586">_e<tspan font-weight="bold">…</tspan>e</text>
<text x="949" y="626">Ob<tspan font-weight="bold">…</tspan>></text>
<text x="949" y="666">re<tspan font-weight="bold">…</tspan>k</text>
<text x="949" y="706">re<tspan font-weight="bold">…</tspan>e</text>
<text x="949" y="746">_l<tspan font-weight="bold">…</tspan>e</text>
<text x="949" y="786">_e<tspan font-weight="bold">…</tspan>e</text>
<text x="949" y="826">Ob<tspan font-weight="bold">…</tspan>></text>
<text x="949" y="866">re<tspan font-weight="bold">…</tspan>k</text>
<text x="949" y="906">re<tspan font-weight="bold">…</tspan>e</text>
<text x="949" y="946">_l<tspan font-weight="bold">…</tspan>e</text>
<text x="949" y="986">_e<tspan font-weight="bold">…</tspan>e</text>
<text x="949" y="1026">Ob<tspan font-weight="bold">…</tspan>></text>
<text x="949" y="1066">re<tspan font-weight="bold">…</tspan>k</text>
<text x="949" y="1106">re<tspan font-weight="bold">…</tspan>e</text>
<text x="949" y="1146">_l<tspan font-weight="bold">…</tspan>e</text>
<text x="949" y="1186">_e<tspan font-weight="bold">…</tspan>e</text>
<text x="949" y="1226">Ob<tspan font-weight="bold">…</tspan>></text>
<text x="949" y="1266">re<tspan font-weight="bold">…</tspan>k</text>
<text x="949" y="1306">re<tspan font-weight="bold">…</tspan>e</text>
<text x="949" y="1346">_l<tspan font-weight="bold">…</tspan>e</text>
<text x="949" y="1386">_e<tspan font-weight="bold">…</tspan>e</text>
<text x="949" y="1426">Ob<tspan font-weight="bold">…</tspan>></text>
<text x="949" y="1466">re<tspan font-weight="bold">…</tspan>k</text>
<text x="1025" y="386"><tspan font-weight="bold">…</tspan></text>
<text x="1025" y="426"><tspan font-weight="bold">…</tspan></text>
<text x="1025" y="466"><tspan font-weight="bold">…</tspan></text>
<text x="1025" y="506"><tspan font-weight="bold">…</tspan></text>
<text x="1025" y="546"><tspan font-weight="bold">…</tspan></text>
<text x="1025" y="586"><tspan font-weight="bold">…</tspan></text>
<text x="1025" y="626"><tspan font-weight="bold">…</tspan></text>
<text x="1025" y="666"><tspan font-weight="bold">…</tspan></text>
<text x="1025" y="706"><tspan font-weight="bold">…</tspan></text>
<text x="1025" y="746"><tspan font-weight="bold">…</tspan></text>
<text x="1025" y="786"><tspan font-weight="bold">…</tspan></text>
<text x="1025" y="826"><tspan font-weight="bold">…</tspan></text>
<text x="1025" y="866"><tspan font-weight="bold">…</tspan></text>
<text x="1025" y="906"><tspan font-weight="bold">…</tspan></text>
<text x="1025" y="946"><tspan font-weight="bold">…</tspan></text>
<text x="1025" y="986"><tspan font-weight="bold">…</tspan></text>
<text x="1025" y="1026"><tspan font-weight="bold">…</tspan></text>
<text x="1025" y="1066"><tspan font-weight="bold">…</tspan></text>
<text x="1025" y="1106"><tspan font-weight="bold">…</tspan></text>
<text x="1025" y="1146"><tspan font-weight="bold">…</tspan></text>
<text x="1025" y="1186"><tspan font-weight="bold">…</tspan></text>
<text x="1025" y="1226"><tspan font-weight="bold">…</tspan></text>
<text x="1025" y="1266"><tspan font-weight="bold">…</tspan></text>
<text x="1025" y="1306"><tspan font-weight="bold">…</tspan></text>
<text x="1025" y="1346"><tspan font-weight="bold">…</tspan></text>
<text x="1025" y="1386"><tspan font-weight="bold">…</tspan></text>
<text x="1025" y="1426"><tspan font-weight="bold">…</tspan></text>
<text x="1025" y="1466"><tspan font-weight="bold">…</tspan></text>
<text x="1067" y="386">p<tspan font-weight="bold">…</tspan></text>
<text x="1067" y="426">r<tspan font-weight="bold">…</tspan></text>
<text x="1067" y="466">j<tspan font-weight="bold">…</tspan></text>
<text x="1067" y="506">r<tspan font-weight="bold">…</tspan></text>
<text x="1067" y="546">_<tspan font-weight="bold">…</tspan></text>
<text x="1067" y="586">_<tspan font-weight="bold">…</tspan></text>
<text x="1067" y="626">O<tspan font-weight="bold">…</tspan></text>
<text x="1067" y="666">r<tspan font-weight="bold">…</tspan></text>
<text x="1067" y="706">r<tspan font-weight="bold">…</tspan></text>
<text x="1067" y="746">_<tspan font-weight="bold">…</tspan></text>
<text x="1067" y="786">_<tspan font-weight="bold">…</tspan></text>
<text x="1067" y="826">O<tspan font-weight="bold">…</tspan></text>
<text x="1067" y="866">r<tspan font-weight="bold">…</tspan></text>
<text x="1067" y="906">r<tspan font-weight="bold">…</tspan></text>
<text x="1067" y="946">_<tspan font-weight="bold">…</tspan></text>
<text x="1067" y="986">_<tspan font-weight="bold">…</tspan></text>
<text x="1067" y="1026">O<tspan font-weight="bold">…</tspan></text>
<text x="1067" y="1066">r<tspan font-weight="bold">…</tspan></text>
<text x="1067" y="1106">r<tspan font-weight="bold">…</tspan></text>
<text x="1067" y="1146">_<tspan font-weight="bold">…</tspan></text>
<text x="1067" y="1186">_<tspan font-weight="bold">…</tspan></text>
<text x="1067" y="1226">O<tspan font-weight="bold">…</tspan></text>
<text x="1067" y="1266">r<tspan font-weight="bold">…</tspan></text>
<text x="1067" y="1306">r<tspan font-weight="bold">…</tspan></text>
<text x="1067" y="1346">_<tspan font-weight="bold">…</tspan></text>
<text x="1067" y="1386">_<tspan font-weight="bold">…</tspan></text>
<text x="1067" y="1426">O<tspan font-weight="bold">…</tspan></text>
<text x="1067" y="1466">r<tspan font-weight="bold">…</tspan></text>
<text x="1112" y="386">p<tspan font-weight="bold">…</tspan></text>
<text x="1112" y="426">r<tspan font-weight="bold">…</tspan></text>
<text x="1112" y="466">j<tspan font-weight="bold">…</tspan></text>
<text x="1112" y="506">r<tspan font-weight="bold">…</tspan></text>
<text x="1112" y="546">_<tspan font-weight="bold">…</tspan></text>
<text x="1112" y="586">_<tspan font-weight="bold">…</tspan></text>
<text x="1112" y="626">O<tspan font-weight="bold">…</tspan></text>
<text x="1112" y="666">r<tspan font-weight="bold">…</tspan></text>
<text x="1112" y="706">r<tspan font-weight="bold">…</tspan></text>
<text x="1112" y="746">_<tspan font-weight="bold">…</tspan></text>
<text x="1112" y="786">_<tspan font-weight="bold">…</tspan></text>
<text x="1112" y="826">O<tspan font-weight="bold">…</tspan></text>
<text x="1112" y="866">r<tspan font-weight="bold">…</tspan></text>
<text x="1112" y="906">r<tspan font-weight="bold">…</tspan></text>
<text x="1112" y="946">_<tspan font-weight="bold">…</tspan></text>
<text x="1112" y="986">_<tspan font-weight="bold">…</tspan></text>
<text x="1112" y="1026">O<tspan font-weight="bold">…</tspan></text>
<text x="1112" y="1066">r<tspan font-weight="bold">…</tspan></text>
<text x="1112" y="1106">r<tspan font-weight="bold">…</tspan></text>
<text x="1112" y="1146">_<tspan font-weight="bold">…</tspan></text>
<text x="1112" y="1186">_<tspan font-weight="bold">…</tspan></text>
<text x="1112" y="1226">O<tspan font-weight="bold">…</tspan></text>
<text x="1112" y="1266">r<tspan font-weight="bold">…</tspan></text>
<text x="1112" y="1306">r<tspan font-weight="bold">…</tspan></text>
<text x="1112" y="1346">_<tspan font-weight="bold">…</tspan></text>
<text x="1112" y="1386">_<tspan font-weight="bold">…</tspan></text>
<text x="1112" y="1426">O<tspan font-weight="bold">…</tspan></text>
<text x="1112" y="1466">r<tspan font-weight="bold">…</tspan></text>
<text x="1167" y="386"><tspan font-weight="bold">…</tspan></text>
<text x="1167" y="426"><tspan font-weight="bold">…</tspan></text>
<text x="1167" y="466"><tspan font-weight="bold">…</tspan></text>
<text x="1167" y="506"><tspan font-weight="bold">…</tspan></text>
<text x="1167" y="546"><tspan font-weight="bold">…</tspan></text>
<text x="1167" y="586"><tspan font-weight="bold">…</tspan></text>
<text x="1167" y="626"><tspan font-weight="bold">…</tspan></text>
<text x="1250" y="386">p<tspan font-weight="bold">…</tspan></text>
<text x="1250" y="426">r<tspan font-weight="bold">…</tspan></text>
<text x="1250" y="466">j<tspan font-weight="bold">…</tspan></text>
<text x="1250" y="506">r<tspan font-weight="bold">…</tspan></text>
<text x="1250" y="546">_<tspan font-weight="bold">…</tspan></text>
<text x="1250" y="586">_<tspan font-weight="bold">…</tspan></text>
<text x="1250" y="626">O<tspan font-weight="bold">…</tspan></text>
<text x="1250" y="666">r<tspan font-weight="bold">…</tspan></text>
<text x="1250" y="706">r<tspan font-weight="bold">…</tspan></text>
<text x="1250" y="746">_<tspan font-weight="bold">…</tspan></text>
<text x="1250" y="786">_<tspan font-weight="bold">…</tspan></text>
<text x="1250" y="826">O<tspan font-weight="bold">…</tspan></text>
<text x="1250" y="866">r<tspan font-weight="bold">…</tspan></text>
<text x="1250" y="906">r<tspan font-weight="bold">…</tspan></text>
<text x="1250" y="946">_<tspan font-weight="bold">…</tspan></text>
<text x="1250" y="986">_<tspan font-weight="bold">…</tspan></text>
<text x="1250" y="1026">O<tspan font-weight="bold">…</tspan></text>
<text x="1384" y="386">p<tspan font-weight="bold">…</tspan>s</text>
<text x="1384" y="426">r<tspan font-weight="bold">…</tspan>s</text>
<text x="1449" y="386">p<tspan font-weight="bold">…</tspan>s</text>
<text x="1449" y="426">r<tspan font-weight="bold">…</tspan>s</text>
<text x="1449" y="466">_<tspan font-weight="bold">…</tspan></text>
<text x="1449" y="506">c<tspan font-weight="bold">…</tspan></text>
<text x="1449" y="546">P<tspan font-weight="bold">…</tspan></text>
<text x="1449" y="586">u<tspan font-weight="bold">…</tspan></text>
<text x="1449" y="626">r<tspan font-weight="bold">…</tspan></text>
<text x="1449" y="666">r<tspan font-weight="bold">…</tspan></text>
<text x="1449" y="706">a<tspan font-weight="bold">…</tspan></text>
<text x="1449" y="746">O<tspan font-weight="bold">…</tspan></text>
<text x="1449" y="786">f<tspan font-weight="bold">…</tspan></text>
<text x="1449" y="826">r<tspan font-weight="bold">…</tspan></text>
<text x="1449" y="866">u<tspan font-weight="bold">…</tspan></text>
<text x="1449" y="906">f<tspan font-weight="bold">…</tspan></text>
<text x="1449" y="946">f<tspan font-weight="bold">…</tspan></text>
<text x="1449" y="986">f<tspan font-weight="bold">…</tspan></text>
<text x="1449" y="1026">r<tspan font-weight="bold">…</tspan></text>
<text x="1449" y="1066">u<tspan font-weight="bold">…</tspan></text>
<text x="1449" y="1106">u<tspan font-weight="bold">…</tspan></text>
<text x="1449" y="1146">p<tspan font-weight="bold">…</tspan></text>
<text x="1449" y="1186"><tspan font-weight="bold">…</tspan></text>
<text x="1449" y="1226"><tspan font-weight="bold">…</tspan></text>
<text x="1449" y="1266"><tspan font-weight="bold">…</tspan></text>
<text x="1511" y="386"><tspan font-weight="bold">…</tspan></text>
<text x="1511" y="426"><tspan font-weight="bold">…</tspan></text>
<text x="1514" y="466"><tspan font-weight="bold">…</tspan></text>
<text x="1511" y="506"><tspan font-weight="bold">…</tspan></text>
<text x="1511" y="546"><tspan font-weight="bold">…</tspan></text>
<text x="1511" y="586"><tspan font-weight="bold">…</tspan></text>
<text x="1511" y="626"><tspan font-weight="bold">…</tspan></text>
<text x="1511" y="666"><tspan font-weight="bold">…</tspan></text>
<text x="1511" y="706"><tspan font-weight="bold">…</tspan></text>
<text x="1511" y="746"><tspan font-weight="bold">…</tspan></text>
<text x="1511" y="786"><tspan font-weight="bold">…</tspan></text>
<text x="1511" y="826"><tspan font-weight="bold">…</tspan></text>
<text x="1566" y="386"><tspan font-weight="bold">…</tspan></text>
<text x="1566" y="426"><tspan font-weight="bold">…</tspan></text>
<text x="1566" y="466"><tspan font-weight="bold">…</tspan></text>
<text x="1566" y="506"><tspan font-weight="bold">…</tspan></text>
<text x="1566" y="546"><tspan font-weight="bold">…</tspan></text>
<text x="1566" y="586"><tspan font-weight="bold">…</tspan></text>
<text x="1566" y="626"><tspan font-weight="bold">…</tspan></text>
<text x="1566" y="666"><tspan font-weight="bold">…</tspan></text>
<text x="1673" y="386"><tspan font-weight="bold">…</tspan></text>
<text x="1673" y="426"><tspan font-weight="bold">…</tspan></text>
<text x="1673" y="466"><tspan font-weight="bold">…</tspan></text>
<text x="1673" y="506"><tspan font-weight="bold">…</tspan></text>
<text x="1673" y="546"><tspan font-weight="bold">…</tspan></text>
<text x="1673" y="586"><tspan font-weight="bold">…</tspan></text>
<text x="1673" y="626"><tspan font-weight="bold">…</tspan></text>
<text x="1673" y="666"><tspan font-weight="bold">…</tspan></text>
<text x="1673" y="706"><tspan font-weight="bold">…</tspan></text>
<text x="1673" y="746"><tspan font-weight="bold">…</tspan></text>
<text x="1673" y="786"><tspan font-weight="bold">…</tspan></text>
<text x="1673" y="826"><tspan font-weight="bold">…</tspan></text>
<text x="1673" y="866"><tspan font-weight="bold">…</tspan></text>
<text x="1673" y="906"><tspan font-weight="bold">…</tspan></text>
<text x="1727" y="386"><tspan font-weight="bold">…</tspan></text>
<text x="1727" y="426"><tspan font-weight="bold">…</tspan></text>
<text x="1727" y="466"><tspan font-weight="bold">…</tspan></text>
<text x="1727" y="506"><tspan font-weight="bold">…</tspan></text>
<text x="1727" y="546"><tspan font-weight="bold">…</tspan></text>
<text x="1727" y="586"><tspan font-weight="bold">…</tspan></text>
<text x="1727" y="626"><tspan font-weight="bold">…</tspan></text>
<text x="1727" y="666"><tspan font-weight="bold">…</tspan></text>
<text x="1727" y="706"><tspan font-weight="bold">…</tspan></text>
<text x="1764" y="386"><tspan font-weight="bold">…</tspan></text>
<text x="1764" y="426"><tspan font-weight="bold">…</tspan></text>
<text x="1764" y="466"><tspan font-weight="bold">…</tspan></text>
<text x="1764" y="506"><tspan font-weight="bold">…</tspan></text>
<text x="1764" y="546"><tspan font-weight="bold">…</tspan></text>
<text x="1764" y="586"><tspan font-weight="bold">…</tspan></text>
<text x="1764" y="626"><tspan font-weight="bold">…</tspan></text>
<text x="1764" y="666"><tspan font-weight="bold">…</tspan></text>
<text x="1764" y="706"><tspan font-weight="bold">…</tspan></text>
<text x="1764" y="746"><tspan font-weight="bold">…</tspan></text>
<text x="1764" y="786"><tspan font-weight="bold">…</tspan></text>
<text x="1764" y="826"><tspan font-weight="bold">…</tspan></text>
<text x="1764" y="866"><tspan font-weight="bold">…</tspan></text>
<text x="1764" y="906"><tspan font-weight="bold">…</tspan></text>
<text x="1764" y="946"><tspan font-weight="bold">…</tspan></text>
<text x="1820" y="386"><tspan font-weight="bold">…</tspan></text>
<text x="1820" y="426"><tspan font-weight="bold">…</tspan></text>
<text x="1820" y="466"><tspan font-weight="bold">…</tspan></text>
<text x="1820" y="506"><tspan font-weight="bold">…</tspan></text>
<text x="1955" y="386"><tspan font-weight="bold">…</tspan></text>
<text x="1955" y="426"><tspan font-weight="bold">…</tspan></text>
<text x="1955" y="466"><tspan font-weight="bold">…</tspan></text>
<text x="1955" y="506"><tspan font-weight="bold">…</tspan></text>
<text x="1955" y="546"><tspan font-weight="bold">…</tspan></text>
<text x="1955" y="586"><tspan font-weight="bold">…</tspan></text>
<text x="1955" y="626"><tspan font-weight="bold">…</tspan></text>
<text x="1955" y="666"><tspan font-weight="bold">…</tspan></text>
<text x="2015" y="386"><tspan font-weight="bold">…</tspan></text>
<text x="2015" y="426"><tspan font-weight="bold">…</tspan></text>
<text x="2139" y="386">_c<tspan font-weight="bold">…</tspan>t</text>
<text x="2139" y="426">ca<tspan font-weight="bold">…</tspan>n</text>
<text x="2139" y="466">Pr<tspan font-weight="bold">…</tspan>d</text>
<text x="2139" y="506">un<tspan font-weight="bold">…</tspan>n</text>
<text x="2139" y="546">re<tspan font-weight="bold">…</tspan>r</text>
<text x="2139" y="586">re<tspan font-weight="bold">…</tspan>r</text>
<text x="2139" y="626">act</text>
<text x="2139" y="666">ba<tspan font-weight="bold">…</tspan>1</text>
<text x="2169" y="706"><tspan font-weight="bold">…</tspan></text>
<text x="2169" y="746"><tspan font-weight="bold">…</tspan></text>
<text x="2169" y="786"><tspan font-weight="bold">…</tspan></text>
<text x="2169" y="826"><tspan font-weight="bold">…</tspan></text>
<text x="2169" y="866"><tspan font-weight="bold">…</tspan></text>
<text x="2169" y="906"><tspan font-weight="bold">…</tspan></text>
<text x="2169" y="946"><tspan font-weight="bold">…</tspan></text>
<text x="2169" y="986"><tspan font-weight="bold">…</tspan></text>
<text x="2169" y="1026"><tspan font-weight="bold">…</tspan></text>
<text x="2282" y="386"><tspan font-weight="bold">…</tspan></text>
<text x="2363" y="386">(g<tspan font-weight="bold">…</tspan>r)</text>
<text x="2479" y="386"><tspan font-weight="bold">…</tspan></text>
<text x="2479" y="426"><tspan font-weight="bold">…</tspan></text>
<text x="2479" y="466"><tspan font-weight="bold">…</tspan></text>
<text x="2479" y="506"><tspan font-weight="bold">…</tspan></text>
<text x="2479" y="546"><tspan font-weight="bold">…</tspan></text>
<text x="2539" y="386"><tspan font-weight="bold">…</tspan></text>
<text x="2539" y="426"><tspan font-weight="bold">…</tspan></text>
<text x="2539" y="466"><tspan font-weight="bold">…</tspan></text>
<text x="2539" y="506"><tspan font-weight="bold">…</tspan></text>
<text x="2539" y="546"><tspan font-weight="bold">…</tspan></text>
<text x="2539" y="586"><tspan font-weight="bold">…</tspan></text>
<text x="2539" y="626"><tspan font-weight="bold">…</tspan></text>
<text x="2539" y="666"><tspan font-weight="bold">…</tspan></text>
</g>
<rect x="733" y="318" width="1.5" height="1148" fill="#d6d3da" opacity="0.9"/>
<rect x="1025" y="318" width="1.5" height="1148" fill="#d6d3da" opacity="0.9"/>
<rect x="1317" y="318" width="1.5" height="1148" fill="#d6d3da" opacity="0.9"/>
<rect x="1609" y="318" width="1.5" height="1148" fill="#d6d3da" opacity="0.9"/>
<rect x="1901" y="318" width="1.5" height="1148" fill="#d6d3da" opacity="0.9"/>
<rect x="2192" y="318" width="1.5" height="1148" fill="#d6d3da" opacity="0.9"/>
<rect x="2484" y="318" width="1.5" height="1148" fill="#d6d3da" opacity="0.9"/>
<rect x="2776" y="318" width="1.5" height="1148" fill="#d6d3da" opacity="0.9"/>
</svg></div>
<div class="hl" style="top:1466px;height:2px;background:#d7d2de"></div>
<div style="position:absolute;left:458px;top:1524px;width:124px;height:4px;background:#6c5fc7;border-radius:2px 2px 0 0"></div>
<div style="position:absolute;left:743px;top:1524px;width:121px;height:4px;background:#6c5fc7;border-radius:2px 2px 0 0"></div>
<div style="position:absolute;left:1332px;top:1487px;width:24px;height:23px;box-sizing:border-box;border:2px solid #dcd6e3;border-radius:5px;background:#fff"></div>
<svg style="position:absolute;left:2676px;top:1484px" width="26" height="26" viewBox="0 0 26 26" fill="none" stroke="#80708f" stroke-width="2" stroke-linecap="round" stroke-linejoin="round"><path d="M13 2.5V16.5M7.5 11L13 16.5L18.5 11M2.5 17.5V23.5H23.5V17.5"/></svg>
<svg style="position:absolute;left:2740px;top:1484px" width="26" height="26" viewBox="0 0 26 26" fill="none" stroke="#80708f" stroke-width="2"><rect x="2" y="2" width="22" height="22" rx="4"/><path d="M9.5 2V24"/></svg>
<svg style="position:absolute;left:2781px;top:1484px" width="26" height="26" viewBox="0 0 26 26" fill="none" stroke="#80708f" stroke-width="2"><rect x="2" y="2" width="22" height="22" rx="4"/><path d="M2 15.5H24"/></svg>
<svg style="position:absolute;left:2821px;top:1484px" width="26" height="26" viewBox="0 0 26 26" fill="none" stroke="#80708f" stroke-width="2"><rect x="2" y="2" width="22" height="22" rx="4"/><path d="M16.5 2V24"/></svg>
<div class="hl" style="top:1528px"></div>
<div style="position:absolute;left:443px;top:1581px;width:2435px;height:345px;background:#fff;border-bottom-right-radius:20px"></div>
<svg style="position:absolute;left:567px;top:1543px" width="20" height="20" viewBox="0 0 20 20" fill="none" stroke="#b5abbf" stroke-width="1.6"><circle cx="10" cy="10" r="8.8"/><path d="M7.6 8A2.5 2.5 0 1 1 10.6 10.4Q10 10.9 10 12.4" stroke-linecap="round"/><circle cx="10" cy="14.8" r="0.4" fill="#b5abbf"/></svg>
<svg style="position:absolute;left:906px;top:1543px" width="20" height="20" viewBox="0 0 20 20" fill="none" stroke="#b5abbf" stroke-width="1.6"><circle cx="10" cy="10" r="8.8"/><path d="M7.6 8A2.5 2.5 0 1 1 10.6 10.4Q10 10.9 10 12.4" stroke-linecap="round"/><circle cx="10" cy="14.8" r="0.4" fill="#b5abbf"/></svg>
<svg style="position:absolute;left:1060px;top:1544px" width="20" height="22" viewBox="0 0 20 22" fill="none" stroke="#2b2233" stroke-width="2.2" stroke-linecap="round" stroke-linejoin="round"><path d="M10 2V20M3 13L10 20L17 13"/></svg>
<div class="vl" style="left:768px;top:1530px;height:396px"></div>
<div class="vl" style="left:1096px;top:1530px;height:396px"></div>
<div class="vl" style="left:2358px;top:1530px;height:396px"></div>
<div class="hl" style="top:1579px"></div>
<svg style="position:absolute;left:1058px;top:1593px" width="24" height="24" viewBox="0 0 24 24" fill="none" stroke="#80708f" stroke-width="1.8" stroke-linejoin="round"><path d="M10.3 1.5H13.7L14.4 4.4L16.9 5.4L19.4 3.8L21.8 6.2L20.2 8.7L21.2 11.2L24 11.9V12.1L21.2 12.8L20.2 15.3L21.8 17.8L19.4 20.2L16.9 18.6L14.4 19.6L13.7 22.5H10.3L9.6 19.6L7.1 18.6L4.6 20.2L2.2 17.8L3.8 15.3L2.8 12.8L0 12.1V11.9L2.8 11.2L3.8 8.7L2.2 6.2L4.6 3.8L7.1 5.4L9.6 4.4Z"/><circle cx="12" cy="12" r="3.6"/></svg>
<div style="position:absolute;left:1114px;top:1592px;width:24px;height:24px;background:#ecc8cc;border-radius:3px"></div>
<svg style="position:absolute;left:1150px;top:1597px" width="12" height="15" viewBox="0 0 12 15" fill="none" stroke="#2b2233" stroke-width="2" stroke-linecap="round" stroke-linejoin="round"><path d="M3 2L9 7.5L3 13"/></svg>
<svg style="position:absolute;left:1058px;top:1641px" width="24" height="24" viewBox="0 0 24 24" fill="none" stroke="#80708f" stroke-width="1.8" stroke-linejoin="round"><path d="M10.3 1.5H13.7L14.4 4.4L16.9 5.4L19.4 3.8L21.8 6.2L20.2 8.7L21.2 11.2L24 11.9V12.1L21.2 12.8L20.2 15.3L21.8 17.8L19.4 20.2L16.9 18.6L14.4 19.6L13.7 22.5H10.3L9.6 19.6L7.1 18.6L4.6 20.2L2.2 17.8L3.8 15.3L2.8 12.8L0 12.1V11.9L2.8 11.2L3.8 8.7L2.2 6.2L4.6 3.8L7.1 5.4L9.6 4.4Z"/><circle cx="12" cy="12" r="3.6"/></svg>
<div style="position:absolute;left:1114px;top:1640px;width:24px;height:24px;background:#ecc8cc;border-radius:3px"></div>
<svg style="position:absolute;left:1150px;top:1645px" width="12" height="15" viewBox="0 0 12 15" fill="none" stroke="#2b2233" stroke-width="2" stroke-linecap="round" stroke-linejoin="round"><path d="M3 2L9 7.5L3 13"/></svg>
<svg style="position:absolute;left:1058px;top:1689px" width="24" height="24" viewBox="0 0 24 24" fill="none" stroke="#80708f" stroke-width="1.8" stroke-linejoin="round"><path d="M10.3 1.5H13.7L14.4 4.4L16.9 5.4L19.4 3.8L21.8 6.2L20.2 8.7L21.2 11.2L24 11.9V12.1L21.2 12.8L20.2 15.3L21.8 17.8L19.4 20.2L16.9 18.6L14.4 19.6L13.7 22.5H10.3L9.6 19.6L7.1 18.6L4.6 20.2L2.2 17.8L3.8 15.3L2.8 12.8L0 12.1V11.9L2.8 11.2L3.8 8.7L2.2 6.2L4.6 3.8L7.1 5.4L9.6 4.4Z"/><circle cx="12" cy="12" r="3.6"/></svg>
<div style="position:absolute;left:1114px;top:1688px;width:24px;height:24px;background:#ecc8cc;border-radius:3px"></div>
<svg style="position:absolute;left:1150px;top:1693px" width="12" height="15" viewBox="0 0 12 15" fill="none" stroke="#2b2233" stroke-width="2" stroke-linecap="round" stroke-linejoin="round"><path d="M3 2L9 7.5L3 13"/></svg>
<svg style="position:absolute;left:1058px;top:1737px" width="24" height="24" viewBox="0 0 24 24" fill="none" stroke="#80708f" stroke-width="1.8" stroke-linejoin="round"><path d="M10.3 1.5H13.7L14.4 4.4L16.9 5.4L19.4 3.8L21.8 6.2L20.2 8.7L21.2 11.2L24 11.9V12.1L21.2 12.8L20.2 15.3L21.8 17.8L19.4 20.2L16.9 18.6L14.4 19.6L13.7 22.5H10.3L9.6 19.6L7.1 18.6L4.6 20.2L2.2 17.8L3.8 15.3L2.8 12.8L0 12.1V11.9L2.8 11.2L3.8 8.7L2.2 6.2L4.6 3.8L7.1 5.4L9.6 4.4Z"/><circle cx="12" cy="12" r="3.6"/></svg>
<div style="position:absolute;left:1114px;top:1736px;width:24px;height:24px;background:#ecc8cc;border-radius:3px"></div>
<svg style="position:absolute;left:1150px;top:1741px" width="12" height="15" viewBox="0 0 12 15" fill="none" stroke="#2b2233" stroke-width="2" stroke-linecap="round" stroke-linejoin="round"><path d="M3 2L9 7.5L3 13"/></svg>
<svg style="position:absolute;left:1058px;top:1785px" width="24" height="24" viewBox="0 0 24 24" fill="none" stroke="#80708f" stroke-width="1.8" stroke-linejoin="round"><path d="M10.3 1.5H13.7L14.4 4.4L16.9 5.4L19.4 3.8L21.8 6.2L20.2 8.7L21.2 11.2L24 11.9V12.1L21.2 12.8L20.2 15.3L21.8 17.8L19.4 20.2L16.9 18.6L14.4 19.6L13.7 22.5H10.3L9.6 19.6L7.1 18.6L4.6 20.2L2.2 17.8L3.8 15.3L2.8 12.8L0 12.1V11.9L2.8 11.2L3.8 8.7L2.2 6.2L4.6 3.8L7.1 5.4L9.6 4.4Z"/><circle cx="12" cy="12" r="3.6"/></svg>
<div style="position:absolute;left:1114px;top:1784px;width:24px;height:24px;background:#ecc8cc;border-radius:3px"></div>
<svg style="position:absolute;left:1150px;top:1789px" width="12" height="15" viewBox="0 0 12 15" fill="none" stroke="#2b2233" stroke-width="2" stroke-linecap="round" stroke-linejoin="round"><path d="M3 2L9 7.5L3 13"/></svg>
<svg style="position:absolute;left:1058px;top:1833px" width="24" height="24" viewBox="0 0 24 24" fill="none" stroke="#80708f" stroke-width="1.8" stroke-linejoin="round"><path d="M10.3 1.5H13.7L14.4 4.4L16.9 5.4L19.4 3.8L21.8 6.2L20.2 8.7L21.2 11.2L24 11.9V12.1L21.2 12.8L20.2 15.3L21.8 17.8L19.4 20.2L16.9 18.6L14.4 19.6L13.7 22.5H10.3L9.6 19.6L7.1 18.6L4.6 20.2L2.2 17.8L3.8 15.3L2.8 12.8L0 12.1V11.9L2.8 11.2L3.8 8.7L2.2 6.2L4.6 3.8L7.1 5.4L9.6 4.4Z"/><circle cx="12" cy="12" r="3.6"/></svg>
<div style="position:absolute;left:1114px;top:1832px;width:24px;height:24px;background:#ecc8cc;border-radius:3px"></div>
<svg style="position:absolute;left:1150px;top:1837px" width="12" height="15" viewBox="0 0 12 15" fill="none" stroke="#2b2233" stroke-width="2" stroke-linecap="round" stroke-linejoin="round"><path d="M3 2L9 7.5L3 13"/></svg>
<svg style="position:absolute;left:1058px;top:1881px" width="24" height="24" viewBox="0 0 24 24" fill="none" stroke="#80708f" stroke-width="1.8" stroke-linejoin="round"><path d="M10.3 1.5H13.7L14.4 4.4L16.9 5.4L19.4 3.8L21.8 6.2L20.2 8.7L21.2 11.2L24 11.9V12.1L21.2 12.8L20.2 15.3L21.8 17.8L19.4 20.2L16.9 18.6L14.4 19.6L13.7 22.5H10.3L9.6 19.6L7.1 18.6L4.6 20.2L2.2 17.8L3.8 15.3L2.8 12.8L0 12.1V11.9L2.8 11.2L3.8 8.7L2.2 6.2L4.6 3.8L7.1 5.4L9.6 4.4Z"/><circle cx="12" cy="12" r="3.6"/></svg>
<div style="position:absolute;left:1114px;top:1880px;width:24px;height:24px;background:#ecc8cc;border-radius:3px"></div>
<svg style="position:absolute;left:1150px;top:1885px" width="12" height="15" viewBox="0 0 12 15" fill="none" stroke="#2b2233" stroke-width="2" stroke-linecap="round" stroke-linejoin="round"><path d="M3 2L9 7.5L3 13"/></svg>
<div style="position:absolute;left:756px;top:1581px;width:12px;height:47px;background:#f3f1f5"></div><div style="position:absolute;left:756px;top:1626px;width:12px;height:2px;background:#e8a0a8"></div>
<div style="position:absolute;left:1034px;top:1581px;width:10px;height:47px;background:#f3f1f5"></div><div style="position:absolute;left:1034px;top:1626px;width:10px;height:2px;background:#e8a0a8"></div>
<div style="position:absolute;left:766px;top:1674px;width:2px;height:2px;background:#e8a0a8"></div>
<div style="position:absolute;left:1042px;top:1674px;width:2px;height:2px;background:#e8a0a8"></div>
<div style="position:absolute;left:766px;top:1722px;width:2px;height:2px;background:#e8a0a8"></div>
<div style="position:absolute;left:1042px;top:1722px;width:2px;height:2px;background:#e8a0a8"></div>
<div style="position:absolute;left:766px;top:1770px;width:2px;height:2px;background:#e8a0a8"></div>
<div style="position:absolute;left:1042px;top:1770px;width:2px;height:2px;background:#e8a0a8"></div>
<div style="position:absolute;left:766px;top:1818px;width:2px;height:2px;background:#e8a0a8"></div>
<div style="position:absolute;left:1042px;top:1818px;width:2px;height:2px;background:#e8a0a8"></div>
<div style="position:absolute;left:766px;top:1866px;width:2px;height:2px;background:#e8a0a8"></div>
<div style="position:absolute;left:1042px;top:1866px;width:2px;height:2px;background:#e8a0a8"></div>
<div style="position:absolute;left:766px;top:1914px;width:2px;height:2px;background:#e8a0a8"></div>
<div style="position:absolute;left:1042px;top:1914px;width:2px;height:2px;background:#e8a0a8"></div>
<div style="position:absolute;left:2376px;top:1574px;width:137px;height:4px;background:#6c5fc7;border-radius:2px 2px 0 0"></div>
<div style="position:absolute;left:2491px;top:1732px;width:24px;height:24px;background:#80708f;border-radius:5px;overflow:hidden"><svg width="24" height="24" viewBox="0 0 24 24"><path fill="#fff" d="M2.5 7L12 2.5L21.5 7V21.5L14.5 17.5V12Q14.5 10 12 10Q9.5 10 9.5 12V17.5L2.5 21.5Z" opacity="0.95"/><path fill="#80708f" d="M2.5 21.5L9.5 17.5H14.5L21.5 21.5Z"/></svg></div>
<div id="t_sentry" class="tx" style="left:128.40px;top:42.50px;font-size:32px;color:#fff;font-weight:bold;font-family:'Liberation Sans', sans-serif;letter-spacing:0.560px">Sentry</div>
<div id="t_email" class="tx" style="left:128.60px;top:80.00px;font-size:28px;color:#a393b5;font-weight:normal;font-family:'Liberation Sans', sans-serif;letter-spacing:-0.178px">jonas.badalic@sent…</div>
<div id="t_nav_issues" class="tx" style="left:127.40px;top:158.25px;font-size:30px;color:#9d8eb0;font-weight:normal;font-family:'Liberation Sans', sans-serif;letter-spacing:0.520px">Issues</div>
<div id="t_nav_projects" class="tx" style="left:127.40px;top:218.50px;font-size:30px;color:#9d8eb0;font-weight:normal;font-family:'Liberation Sans', sans-serif;letter-spacing:1.071px">Projects</div>
<div id="t_nav_performance" class="tx" style="left:127.40px;top:310.50px;font-size:30px;color:#9d8eb0;font-weight:normal;font-family:'Liberation Sans', sans-serif;letter-spacing:1.080px">Performance</div>
<div id="t_nav_profiling" class="tx" style="left:127.40px;top:370.20px;font-size:30px;color:#fff;font-weight:normal;font-family:'Liberation Sans', sans-serif;letter-spacing:0.975px">Profiling</div>
<div id="t_nav_replays" class="tx" style="left:127.40px;top:430.20px;font-size:30px;color:#9d8eb0;font-weight:normal;font-family:'Liberation Sans', sans-serif;letter-spacing:0.267px">Replays</div>
<div id="t_nav_crons" class="tx" style="left:128.40px;top:490.20px;font-size:30px;color:#9d8eb0;font-weight:normal;font-family:'Liberation Sans', sans-serif;letter-spacing:0.275px">Crons</div>
<div id="t_nav_alerts" class="tx" style="left:129.40px;top:550.00px;font-size:30px;color:#9d8eb0;font-weight:normal;font-family:'Liberation Sans', sans-serif;letter-spacing:0.880px">Alerts</div>
<div id="t_nav_discover" class="tx" style="left:127.40px;top:642.50px;font-size:30px;color:#9d8eb0;font-weight:normal;font-family:'Liberation Sans', sans-serif;letter-spacing:0.671px">Discover</div>
<div id="t_nav_dashboards" class="tx" style="left:127.40px;top:702.50px;font-size:30px;color:#9d8eb0;font-weight:normal;font-family:'Liberation Sans', sans-serif;letter-spacing:0.644px">Dashboards</div>
<div id="t_nav_releases" class="tx" style="left:127.40px;top:762.50px;font-size:30px;color:#9d8eb0;font-weight:normal;font-family:'Liberation Sans', sans-serif;letter-spacing:-0.071px">Releases</div>
<div id="t_nav_feedback" class="tx" style="left:127.40px;top:821.50px;font-size:30px;color:#9d8eb0;font-weight:normal;font-family:'Liberation Sans', sans-serif;letter-spacing:0.283px">User Feedback</div>
<div id="t_nav_stats" class="tx" style="left:128.40px;top:913.50px;font-size:30px;color:#9d8eb0;font-weight:normal;font-family:'Liberation Sans', sans-serif;letter-spacing:1.250px">Stats</div>
<div id="t_nav_settings" class="tx" style="left:128.40px;top:973.90px;font-size:30px;color:#9d8eb0;font-weight:normal;font-family:'Liberation Sans', sans-serif;letter-spacing:1.286px">Settings</div>
<div id="t_nav_help" class="tx" style="left:127.40px;top:1709.20px;font-size:30px;color:#9d8eb0;font-weight:normal;font-family:'Liberation Sans', sans-serif;letter-spacing:0.900px">Help</div>
<div id="t_nav_whatsnew" class="tx" style="left:129.40px;top:1768.50px;font-size:30px;color:#9d8eb0;font-weight:normal;font-family:'Liberation Sans', sans-serif;letter-spacing:0.056px">What&#x27;s new</div>
<div id="t_nav_collapse" class="tx" style="left:128.40px;top:1861.50px;font-size:30px;color:#9d8eb0;font-weight:normal;font-family:'Liberation Sans', sans-serif;letter-spacing:0.257px">Collapse</div>
<div id="t_beta0" class="tx" style="left:343.60px;top:374.50px;font-size:22px;color:#fff;font-weight:normal;font-family:'Liberation Sans', sans-serif;letter-spacing:0.900px">beta</div>
<div id="t_beta1" class="tx" style="left:343.60px;top:494.50px;font-size:22px;color:#fff;font-weight:normal;font-family:'Liberation Sans', sans-serif;letter-spacing:0.900px">beta</div>
<div id="t_bc1" class="tx" style="left:473.20px;top:36.90px;font-size:28px;color:#80708f;font-weight:normal;font-family:'Liberation Sans', sans-serif;letter-spacing:0.900px">Profiling</div>
<div id="t_bc2" class="tx" style="left:637.00px;top:36.90px;font-size:28px;color:#80708f;font-weight:normal;font-family:'Liberation Sans', sans-serif;letter-spacing:0.486px">Profile Summary</div>
<div id="t_bc3" class="tx" style="left:908.00px;top:36.90px;font-size:28px;color:#2b2233;font-weight:normal;font-family:'Liberation Sans', sans-serif;letter-spacing:1.318px">/static/app/views/performance/vitalDetail/index.spec.tsx</div>
<div id="t_goto" class="tx" style="left:2582.80px;top:37.65px;font-size:29px;color:#2b2233;font-weight:bold;font-family:'Liberation Sans', sans-serif;letter-spacing:-0.594px">Go to Transaction</div>
<div id="t_main" class="tx" style="left:511.00px;top:141.75px;font-size:25px;color:#2b2233;font-weight:bold;font-family:'Liberation Sans', sans-serif;letter-spacing:0.100px">main</div>
<div id="t_callorder" class="tx" style="left:744.00px;top:141.90px;font-size:24px;color:#fff;font-weight:bold;font-family:'Liberation Sans', sans-serif;letter-spacing:-0.667px">Call Order</div>
<div id="t_alpha" class="tx" style="left:894.00px;top:141.90px;font-size:24px;color:#2b2233;font-weight:normal;font-family:'Liberation Sans', sans-serif;letter-spacing:0.818px">Alphabetical</div>
<div id="t_leftheavy" class="tx" style="left:1071.00px;top:141.90px;font-size:24px;color:#2b2233;font-weight:normal;font-family:'Liberation Sans', sans-serif;letter-spacing:0.778px">Left Heavy</div>
<div id="t_bottomup" class="tx" style="left:1253.00px;top:141.90px;font-size:24px;color:#2b2233;font-weight:normal;font-family:'Liberation Sans', sans-serif;letter-spacing:1.125px">Bottom Up</div>
<div id="t_topdown" class="tx" style="left:1415.00px;top:141.90px;font-size:24px;color:#fff;font-weight:bold;font-family:'Liberation Sans', sans-serif;letter-spacing:-0.714px">Top Down</div>
<div id="t_find" class="tx" style="left:1611.00px;top:141.90px;font-size:24px;color:#80708f;font-weight:normal;font-family:'Liberation Sans', sans-serif;letter-spacing:0.320px">Find Frames</div>
<div id="t_reset" class="tx" style="left:2433.60px;top:142.60px;font-size:24px;color:#2b2233;font-weight:bold;font-family:'Liberation Sans', sans-serif;letter-spacing:0.211px">Reset Zoom</div>
<div id="t_color" class="tx" style="left:2659.80px;top:142.60px;font-size:24px;color:#2b2233;font-weight:bold;font-family:'Liberation Sans', sans-serif;letter-spacing:-0.255px">Color Coding</div>
<div id="t_minimap" class="tx" style="left:458.20px;top:207.00px;font-size:22px;color:#2b2233;font-weight:normal;font-family:'Liberation Sans', sans-serif;letter-spacing:0.583px">Minimap</div>
<div id="t_trans" class="tx" style="left:459.00px;top:247.00px;font-size:22px;color:#2b2233;font-weight:normal;font-family:'Liberation Sans', sans-serif;letter-spacing:0.560px">Transaction</div>
<div id="t_profile" class="tx" style="left:458.20px;top:284.80px;font-size:22px;color:#2b2233;font-weight:normal;font-family:'Liberation Sans', sans-serif;letter-spacing:0.350px">Profile</div>
<div id="t_tick1" class="tx" style="left:661.60px;top:287.33px;font-size:21px;color:#2b2233;font-weight:normal;font-family:'Liberation Mono', monospace;letter-spacing:-0.750px">1.00s</div>
<div id="t_tick2" class="tx" style="left:953.80px;top:287.33px;font-size:21px;color:#2b2233;font-weight:normal;font-family:'Liberation Mono', monospace;letter-spacing:-0.750px">2.00s</div>
<div id="t_tick3" class="tx" style="left:1246.00px;top:287.33px;font-size:21px;color:#2b2233;font-weight:normal;font-family:'Liberation Mono', monospace;letter-spacing:-0.750px">3.00s</div>
<div id="t_tick4" class="tx" style="left:1538.20px;top:287.33px;font-size:21px;color:#2b2233;font-weight:normal;font-family:'Liberation Mono', monospace;letter-spacing:-1.000px">4.00s</div>
<div id="t_tick5" class="tx" style="left:1829.40px;top:287.33px;font-size:21px;color:#2b2233;font-weight:normal;font-family:'Liberation Mono', monospace;letter-spacing:-0.750px">5.00s</div>
<div id="t_tick6" class="tx" style="left:2121.60px;top:287.33px;font-size:21px;color:#2b2233;font-weight:normal;font-family:'Liberation Mono', monospace;letter-spacing:-0.750px">6.00s</div>
<div id="t_tick7" class="tx" style="left:2412.80px;top:287.33px;font-size:21px;color:#2b2233;font-weight:normal;font-family:'Liberation Mono', monospace;letter-spacing:-0.500px">7.00s</div>
<div id="t_tick8" class="tx" style="left:2705.00px;top:287.33px;font-size:21px;color:#2b2233;font-weight:normal;font-family:'Liberation Mono', monospace;letter-spacing:-0.750px">8.00s</div>
<div id="t_bu" class="tx" style="left:457.60px;top:1485.70px;font-size:24px;color:#2b2233;font-weight:bold;font-family:'Liberation Sans', sans-serif;letter-spacing:0.275px">Bottom Up</div>
<div id="t_td" class="tx" style="left:599.80px;top:1485.70px;font-size:24px;color:#2b2233;font-weight:normal;font-family:'Liberation Sans', sans-serif;letter-spacing:0.429px">Top Down</div>
<div id="t_af" class="tx" style="left:742.60px;top:1485.70px;font-size:24px;color:#2b2233;font-weight:bold;font-family:'Liberation Sans', sans-serif;letter-spacing:-0.078px">All Frames</div>
<div id="t_appf" class="tx" style="left:885.40px;top:1486.60px;font-size:24px;color:#2b2233;font-weight:normal;font-family:'Liberation Sans', sans-serif;letter-spacing:0.553px">Application Frames</div>
<div id="t_sysf" class="tx" style="left:1122.60px;top:1486.60px;font-size:24px;color:#2b2233;font-weight:normal;font-family:'Liberation Sans', sans-serif;letter-spacing:0.458px">System Frames</div>
<div id="t_collapse" class="tx" style="left:1363.60px;top:1486.60px;font-size:24px;color:#2b2233;font-weight:normal;font-family:'Liberation Sans', sans-serif;letter-spacing:0.465px">Collapse recursion</div>
<div id="t_self" class="tx" style="left:457.00px;top:1541.60px;font-size:24px;color:#2b2233;font-weight:normal;font-family:'Liberation Sans', sans-serif;letter-spacing:0.438px">Self Time</div>
<div id="t_total" class="tx" style="left:787.00px;top:1541.60px;font-size:24px;color:#2b2233;font-weight:normal;font-family:'Liberation Sans', sans-serif;letter-spacing:0.344px">Total Time</div>
<div id="t_frame" class="tx" style="left:1113.20px;top:1541.80px;font-size:24px;color:#2b2233;font-weight:normal;font-family:'Liberation Sans', sans-serif;letter-spacing:0.675px">Frame</div>
<div id="t_sms0" class="tx" style="right:2231.20px;top:1591.60px;font-size:24px;color:#2b2233;font-weight:normal;letter-spacing:1.000px">305.53ms</div>
<div id="t_spc0" class="tx" style="right:2126.60px;top:1591.60px;font-size:24px;color:#80708f;font-weight:normal;letter-spacing:-1.000px">3.7%</div>
<div id="t_tms0" class="tx" style="right:1939.60px;top:1591.60px;font-size:24px;color:#2b2233;font-weight:normal;letter-spacing:1.143px">305.53ms</div>
<div id="t_tpc0" class="tx" style="right:1844.00px;top:1591.60px;font-size:24px;color:#80708f;font-weight:normal;letter-spacing:-1.667px">3.7%</div>
<div id="t_gc0" class="tx" style="left:1173.40px;top:1590.80px;font-size:24px;color:#2b2233;font-weight:normal;font-family:'Liberation Sans', sans-serif;letter-spacing:0.667px">(garbage collector)</div>
<div id="t_sms1" class="tx" style="right:2232.20px;top:1639.60px;font-size:24px;color:#2b2233;font-weight:normal;letter-spacing:0.714px">132.88ms</div>
<div id="t_spc1" class="tx" style="right:2127.60px;top:1639.60px;font-size:24px;color:#80708f;font-weight:normal;letter-spacing:-1.667px">1.6%</div>
<div id="t_tms1" class="tx" style="right:1940.60px;top:1639.60px;font-size:24px;color:#2b2233;font-weight:normal;letter-spacing:0.571px">132.88ms</div>
<div id="t_tpc1" class="tx" style="right:1844.00px;top:1639.60px;font-size:24px;color:#80708f;font-weight:normal;letter-spacing:-1.667px">1.6%</div>
<div id="t_gc1" class="tx" style="left:1173.40px;top:1638.80px;font-size:24px;color:#2b2233;font-weight:normal;font-family:'Liberation Sans', sans-serif;letter-spacing:0.667px">(garbage collector)</div>
<div id="t_sms2" class="tx" style="right:2232.20px;top:1687.60px;font-size:24px;color:#2b2233;font-weight:normal;letter-spacing:0.667px">73.33ms</div>
<div id="t_spc2" class="tx" style="right:2126.60px;top:1687.60px;font-size:24px;color:#80708f;font-weight:normal;letter-spacing:-0.667px">0.9%</div>
<div id="t_tms2" class="tx" style="right:1939.60px;top:1687.60px;font-size:24px;color:#2b2233;font-weight:normal;letter-spacing:0.833px">73.33ms</div>
<div id="t_tpc2" class="tx" style="right:1843.00px;top:1687.60px;font-size:24px;color:#80708f;font-weight:normal;letter-spacing:-0.667px">0.9%</div>
<div id="t_gc2" class="tx" style="left:1173.40px;top:1686.80px;font-size:24px;color:#2b2233;font-weight:normal;font-family:'Liberation Sans', sans-serif;letter-spacing:0.667px">(garbage collector)</div>
<div id="t_sms3" class="tx" style="right:2232.20px;top:1735.60px;font-size:24px;color:#2b2233;font-weight:normal;letter-spacing:0.500px">54.75ms</div>
<div id="t_spc3" class="tx" style="right:2126.60px;top:1735.60px;font-size:24px;color:#80708f;font-weight:normal;letter-spacing:-1.000px">0.7%</div>
<div id="t_tms3" class="tx" style="right:1940.60px;top:1735.60px;font-size:24px;color:#2b2233;font-weight:normal;letter-spacing:0.500px">54.75ms</div>
<div id="t_tpc3" class="tx" style="right:1844.00px;top:1735.60px;font-size:24px;color:#80708f;font-weight:normal;letter-spacing:-1.333px">0.7%</div>
<div id="t_gc3" class="tx" style="left:1173.40px;top:1734.80px;font-size:24px;color:#2b2233;font-weight:normal;font-family:'Liberation Sans', sans-serif;letter-spacing:0.667px">(garbage collector)</div>
<div id="t_sms4" class="tx" style="right:2232.20px;top:1783.60px;font-size:24px;color:#2b2233;font-weight:normal;letter-spacing:0.333px">47.32ms</div>
<div id="t_spc4" class="tx" style="right:2126.60px;top:1783.60px;font-size:24px;color:#80708f;font-weight:normal;letter-spacing:-0.333px">0.6%</div>
<div id="t_tms4" class="tx" style="right:1940.60px;top:1783.60px;font-size:24px;color:#2b2233;font-weight:normal;letter-spacing:0.167px">47.32ms</div>
<div id="t_tpc4" class="tx" style="right:1843.00px;top:1783.60px;font-size:24px;color:#80708f;font-weight:normal;letter-spacing:-0.333px">0.6%</div>
<div id="t_gc4" class="tx" style="left:1173.40px;top:1782.80px;font-size:24px;color:#2b2233;font-weight:normal;font-family:'Liberation Sans', sans-serif;letter-spacing:0.667px">(garbage collector)</div>
<div id="t_sms5" class="tx" style="right:2231.20px;top:1831.60px;font-size:24px;color:#2b2233;font-weight:normal;letter-spacing:1.000px">44.32ms</div>
<div id="t_spc5" class="tx" style="right:2126.60px;top:1831.60px;font-size:24px;color:#80708f;font-weight:normal;letter-spacing:-0.333px">0.5%</div>
<div id="t_tms5" class="tx" style="right:1939.60px;top:1831.60px;font-size:24px;color:#2b2233;font-weight:normal;letter-spacing:0.833px">44.32ms</div>
<div id="t_tpc5" class="tx" style="right:1843.00px;top:1831.60px;font-size:24px;color:#80708f;font-weight:normal;letter-spacing:-0.333px">0.5%</div>
<div id="t_gc5" class="tx" style="left:1173.40px;top:1830.80px;font-size:24px;color:#2b2233;font-weight:normal;font-family:'Liberation Sans', sans-serif;letter-spacing:0.667px">(garbage collector)</div>
<div id="t_sms6" class="tx" style="right:2232.20px;top:1879.60px;font-size:24px;color:#2b2233;font-weight:normal;letter-spacing:0.500px">39.62ms</div>
<div id="t_spc6" class="tx" style="right:2126.60px;top:1879.60px;font-size:24px;color:#80708f;font-weight:normal;letter-spacing:-0.333px">0.5%</div>
<div id="t_tms6" class="tx" style="right:1940.60px;top:1879.60px;font-size:24px;color:#2b2233;font-weight:normal;letter-spacing:0.500px">39.62ms</div>
<div id="t_tpc6" class="tx" style="right:1843.00px;top:1879.60px;font-size:24px;color:#80708f;font-weight:normal;letter-spacing:-0.333px">0.5%</div>
<div id="t_gc6" class="tx" style="left:1173.40px;top:1878.80px;font-size:24px;color:#2b2233;font-weight:normal;font-family:'Liberation Sans', sans-serif;letter-spacing:0.667px">(garbage collector)</div>
<div id="t_dtrans" class="tx" style="left:2376.60px;top:1541.70px;font-size:24px;color:#2b2233;font-weight:bold;font-family:'Liberation Sans', sans-serif;letter-spacing:0.300px">Transaction</div>
<div id="t_ddev" class="tx" style="left:2529.60px;top:1541.70px;font-size:24px;color:#2b2233;font-weight:normal;font-family:'Liberation Sans', sans-serif;letter-spacing:0.700px">Device</div>
<div id="t_dk0" class="tx" style="left:2376.60px;top:1596.97px;font-size:22.5px;color:#2b2233;font-weight:bold;font-family:'Liberation Sans', sans-serif;letter-spacing:1.209px">transaction:</div>
<div id="t_dv0" class="tx" style="left:2526.80px;top:1596.97px;font-size:22.5px;color:#2b2233;font-weight:normal;font-family:'Liberation Sans', sans-serif;letter-spacing:1.742px">/static/app/views/performa…</div>
<div id="t_dk1" class="tx" style="left:2375.60px;top:1630.28px;font-size:22.5px;color:#2b2233;font-weight:bold;font-family:'Liberation Sans', sans-serif;letter-spacing:1.064px">received at:</div>
<div id="t_dv1" class="tx" style="left:2518.60px;top:1630.28px;font-size:22.5px;color:#2b2233;font-weight:normal;font-family:'Liberation Sans', sans-serif;letter-spacing:0.550px">Mar 22, 7:37 PM</div>
<div id="t_dk2" class="tx" style="left:2375.60px;top:1663.08px;font-size:22.5px;color:#2b2233;font-weight:bold;font-family:'Liberation Sans', sans-serif;letter-spacing:1.150px">organization:</div>
<div id="t_dv2" class="tx" style="left:2537.00px;top:1663.08px;font-size:22.5px;color:#2b2233;font-weight:normal;font-family:'Liberation Sans', sans-serif;letter-spacing:0.000px">ø</div>
<div id="t_dk3" class="tx" style="left:2375.60px;top:1696.38px;font-size:22.5px;color:#2b2233;font-weight:bold;font-family:'Liberation Sans', sans-serif;letter-spacing:1.314px">project:</div>
<div id="t_dv3" class="tx" style="left:2473.00px;top:1696.38px;font-size:22.5px;color:#2b2233;font-weight:normal;font-family:'Liberation Sans', sans-serif;letter-spacing:0.000px">ø</div>
<div id="t_dk4" class="tx" style="left:2375.60px;top:1730.97px;font-size:22.5px;color:#2b2233;font-weight:bold;font-family:'Liberation Sans', sans-serif;letter-spacing:1.475px">platform:</div>
<div id="t_dv4" class="tx" style="left:2520.80px;top:1730.97px;font-size:22.5px;color:#2b2233;font-weight:normal;font-family:'Liberation Sans', sans-serif;letter-spacing:2.133px">node</div>
<div id="t_dk5" class="tx" style="left:2375.60px;top:1764.28px;font-size:22.5px;color:#2b2233;font-weight:bold;font-family:'Liberation Sans', sans-serif;letter-spacing:0.957px">release:</div>
<div id="t_dv5" class="tx" style="left:2475.20px;top:1764.28px;font-size:22.5px;color:#2b2233;font-weight:normal;font-family:'Liberation Sans', sans-serif;letter-spacing:0.000px">ø</div>
<div id="t_dk6" class="tx" style="left:2375.60px;top:1798.78px;font-size:22.5px;color:#2b2233;font-weight:bold;font-family:'Liberation Sans', sans-serif;letter-spacing:1.345px">environment:</div>
<div id="t_dv6" class="tx" style="left:2540.00px;top:1798.78px;font-size:22.5px;color:#2b2233;font-weight:normal;font-family:'Liberation Sans', sans-serif;letter-spacing:2.100px">ci</div>
<div id="t_dk7" class="tx" style="left:2375.60px;top:1831.47px;font-size:22.5px;color:#2b2233;font-weight:bold;font-family:'Liberation Sans', sans-serif;letter-spacing:1.138px">duration:</div>
<div id="t_dv7" class="tx" style="left:2489.80px;top:1831.47px;font-size:22.5px;color:#2b2233;font-weight:normal;font-family:'Liberation Sans', sans-serif;letter-spacing:1.850px">8.34s</div>
<div id="t_dk8" class="tx" style="left:2376.60px;top:1865.38px;font-size:22.5px;color:#2b2233;font-weight:bold;font-family:'Liberation Sans', sans-serif;letter-spacing:1.157px">threads:</div>
<div id="t_dv8" class="tx" style="left:2479.00px;top:1865.38px;font-size:22.5px;color:#2b2233;font-weight:normal;font-family:'Liberation Sans', sans-serif;letter-spacing:0.000px">1</div></body></html>
